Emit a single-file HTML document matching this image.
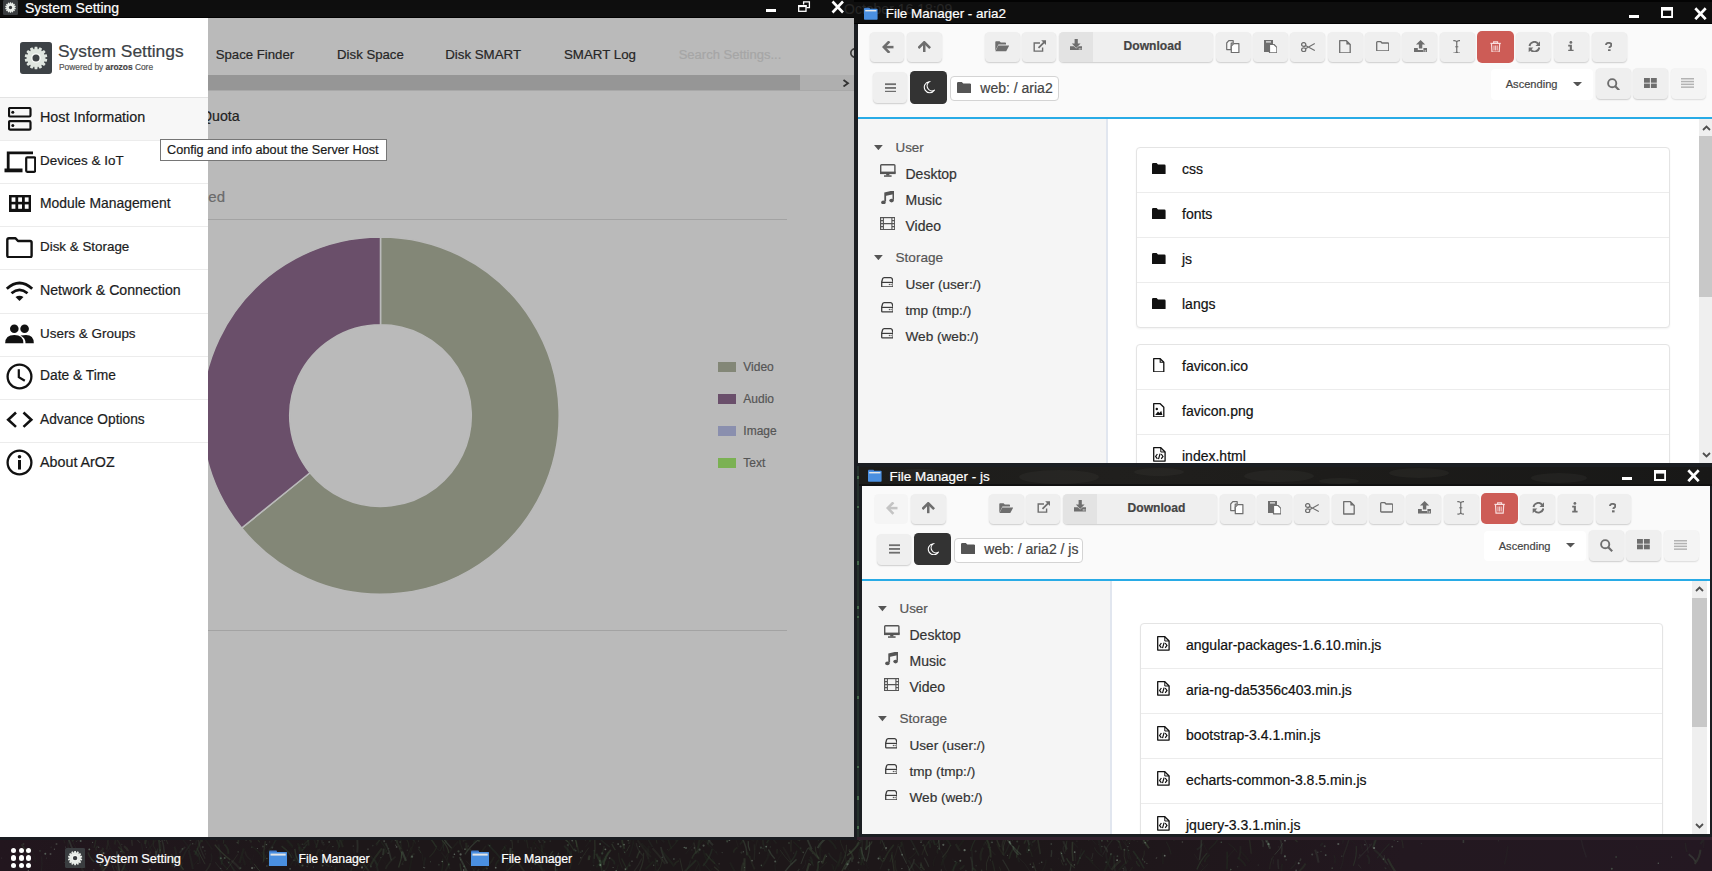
<!DOCTYPE html>
<html><head><meta charset="utf-8">
<style>
*{box-sizing:border-box;margin:0;padding:0}
html,body{width:1712px;height:871px;overflow:hidden;background:#1f161c;font-family:"Liberation Sans",sans-serif}
.a{position:absolute}
.t{position:absolute;white-space:nowrap;line-height:1;-webkit-text-stroke:0.2px currentColor}
.fm{position:absolute;overflow:hidden;background:#fafafa}
.fm .a,.fm .t{position:absolute}
</style></head><body>

<div class="a" style="left:0.00px;top:0.00px;width:1712.00px;height:871.00px;background:#0d0d0d"></div>
<div class="a" style="left:0.00px;top:0.00px;width:854.00px;height:18.00px;background:#0e0e0e"></div>
<div class="a" style="left:0.00px;top:17.00px;width:854.00px;height:1.00px;background:#020202"></div>
<svg class="a" style="left:3.00px;top:0.00px;" width="15.00" height="15.00" viewBox="0 0 15.00 15.00"><rect width="15" height="15" rx="1.35" fill="#3a3d40"/><path d="M6.70,3.38 L6.90,2.21 L8.10,2.21 L8.30,3.38 L8.57,3.44 L9.26,2.47 L10.33,2.99 L10.01,4.13 L10.23,4.31 L11.27,3.73 L12.01,4.67 L11.22,5.55 L11.34,5.81 L12.53,5.74 L12.79,6.90 L11.70,7.36 L11.70,7.64 L12.79,8.10 L12.53,9.26 L11.34,9.19 L11.22,9.45 L12.01,10.33 L11.27,11.27 L10.23,10.69 L10.01,10.87 L10.33,12.01 L9.26,12.53 L8.57,11.56 L8.30,11.62 L8.10,12.79 L6.90,12.79 L6.70,11.62 L6.43,11.56 L5.74,12.53 L4.67,12.01 L4.99,10.87 L4.77,10.69 L3.73,11.27 L2.99,10.33 L3.78,9.45 L3.66,9.19 L2.47,9.26 L2.21,8.10 L3.30,7.64 L3.30,7.36 L2.21,6.90 L2.47,5.74 L3.66,5.81 L3.78,5.55 L2.99,4.67 L3.73,3.73 L4.77,4.31 L4.99,4.13 L4.67,2.99 L5.74,2.47 L6.43,3.44Z" fill="#e8ece8"/><circle cx="7.5" cy="7.5" r="2.25" fill="#f8faf8"/><circle cx="7.5" cy="7.5" r="1.65" fill="#3a3d40"/></svg>
<div class="t" style="left:25.00px;top:0.75px;font-size:14px;color:#fff;font-weight:normal;">System Setting</div>
<div class="a" style="left:766.00px;top:8.80px;width:10.00px;height:3.40px;background:#fff"></div>
<svg class="a" style="left:797.00px;top:0.00px;" width="14.00" height="13.00" viewBox="0 0 14.00 13.00"><path d="M6.6,4.6 V1.9 H12.4 V7.7 H9.4" fill="none" stroke="#fff" stroke-width="1.3"/><rect x="1.7" y="5.7" width="7.3" height="5.6" fill="none" stroke="#fff" stroke-width="1.3"/><rect x="1.1" y="5.1" width="8.5" height="2" fill="#fff"/></svg>
<svg class="a" style="left:830.50px;top:0.00px;" width="13.50" height="14.00" viewBox="0 0 13.50 14.00"><path d="M1.5,1.5 L12,12.5 M12,1.5 L1.5,12.5" stroke="#fff" stroke-width="2.6"/></svg>
<div class="a" style="left:0;top:18px;width:854px;height:819px;background:#bababa;overflow:hidden">
<div class="t" style="left:215.70px;top:29.73px;font-size:13.2px;color:#262626;font-weight:normal;">Space Finder</div>
<div class="t" style="left:337.10px;top:29.73px;font-size:13.2px;color:#262626;font-weight:normal;">Disk Space</div>
<div class="t" style="left:445.20px;top:29.64px;font-size:13.3px;color:#262626;font-weight:normal;">Disk SMART</div>
<div class="t" style="left:564.00px;top:29.64px;font-size:13.3px;color:#262626;font-weight:normal;">SMART Log</div>
<div class="t" style="left:678.70px;top:29.60px;font-size:13px;color:#a6a6a6;font-weight:normal;">Search Settings...</div>
<svg class="a" style="left:849.00px;top:28.50px;" width="10.00" height="14.00" viewBox="0 0 10.00 14.00"><circle cx="6" cy="6" r="4.2" fill="none" stroke="#3a3a3a" stroke-width="1.6"/></svg>
<div class="a" style="left:208.00px;top:57.00px;width:646.00px;height:15.20px;background:#afafaf"></div>
<div class="a" style="left:208.00px;top:57.00px;width:592.00px;height:15.20px;background:#969696"></div>
<svg class="a" style="left:842.00px;top:60.50px;" width="8.00" height="8.50" viewBox="0 0 8.00 8.50"><path d="M1.5,1 L6,4.2 L1.5,7.5" fill="none" stroke="#333" stroke-width="1.8"/></svg>
<div class="a" style="left:208.00px;top:72.20px;width:646.00px;height:1.00px;background:#a9a9a9"></div>
<div class="t" style="left:201.00px;top:90.78px;font-size:14.2px;color:#222;font-weight:normal;">Quota</div>
<div class="t" style="left:190.00px;top:170.90px;font-size:15px;color:#6a6a6a;font-weight:normal;">Used</div>
<div class="a" style="left:208.00px;top:201.00px;width:579.00px;height:1.00px;background:#a3a3a3"></div>
<div class="a" style="left:208.00px;top:612.00px;width:579.00px;height:1.00px;background:#a3a3a3"></div>
<svg class="a" style="left:0;top:0" width="854" height="819" viewBox="0 0 854 819"><path d="M380.50,218.90 A178.7,178.7 0 1 1 241.62,510.06 L309.94,454.74 A90.8,90.8 0 1 0 380.50,306.80 Z" fill="#838777" stroke="#bababa" stroke-width="1.5"/><path d="M241.62,510.06 A178.7,178.7 0 0 1 380.50,218.90 L380.50,306.80 A90.8,90.8 0 0 0 309.94,454.74 Z" fill="#6a4f6a" stroke="#bababa" stroke-width="1.5"/></svg>
<div class="a" style="left:718.00px;top:344.40px;width:18.20px;height:10.00px;background:#838777"></div>
<div class="t" style="left:743.30px;top:342.84px;font-size:12px;color:#555;font-weight:normal;">Video</div>
<div class="a" style="left:718.00px;top:376.40px;width:18.20px;height:10.00px;background:#6a4f6b"></div>
<div class="t" style="left:743.30px;top:374.84px;font-size:12px;color:#555;font-weight:normal;">Audio</div>
<div class="a" style="left:718.00px;top:408.40px;width:18.20px;height:10.00px;background:#8a8fae"></div>
<div class="t" style="left:743.30px;top:406.84px;font-size:12px;color:#555;font-weight:normal;">Image</div>
<div class="a" style="left:718.00px;top:440.40px;width:18.20px;height:10.00px;background:#7bb153"></div>
<div class="t" style="left:743.30px;top:438.84px;font-size:12px;color:#555;font-weight:normal;">Text</div>
<div class="a" style="left:0.00px;top:0.00px;width:208.00px;height:819.00px;background:#fff"></div>
<svg class="a" style="left:20.00px;top:24.00px;" width="32.00" height="32.00" viewBox="0 0 32.00 32.00"><rect width="32" height="32" rx="2.88" fill="#3d4246"/><path d="M14.30,7.20 L14.73,4.71 L17.27,4.71 L17.70,7.20 L18.29,7.34 L19.75,5.28 L22.04,6.38 L21.35,8.81 L21.82,9.19 L24.03,7.97 L25.62,9.96 L23.94,11.84 L24.20,12.39 L26.72,12.25 L27.29,14.73 L24.95,15.70 L24.95,16.30 L27.29,17.27 L26.72,19.75 L24.20,19.61 L23.94,20.16 L25.62,22.04 L24.03,24.03 L21.82,22.81 L21.35,23.19 L22.04,25.62 L19.75,26.72 L18.29,24.66 L17.70,24.80 L17.27,27.29 L14.73,27.29 L14.30,24.80 L13.71,24.66 L12.25,26.72 L9.96,25.62 L10.65,23.19 L10.18,22.81 L7.97,24.03 L6.38,22.04 L8.06,20.16 L7.80,19.61 L5.28,19.75 L4.71,17.27 L7.05,16.30 L7.05,15.70 L4.71,14.73 L5.28,12.25 L7.80,12.39 L8.06,11.84 L6.38,9.96 L7.97,7.97 L10.18,9.19 L10.65,8.81 L9.96,6.38 L12.25,5.28 L13.71,7.34Z" fill="#dfe6e0"/><circle cx="16.0" cy="16.0" r="4.80" fill="#f8faf8"/><circle cx="16.0" cy="16.0" r="3.52" fill="#3d4246"/></svg>
<div class="t" style="left:58.00px;top:25.27px;font-size:17.4px;color:#3d4246;font-weight:normal;">System Settings</div>
<div class="t" style="left:59.00px;top:44.89px;font-size:8.4px;color:#555;font-weight:normal;">Powered by <b style="color:#444">arozos</b> Core</div>
<div class="a" style="left:0.00px;top:79.00px;width:208.00px;height:1.00px;background:#e3e3e3"></div>
<div class="a" style="left:0.00px;top:80.00px;width:208.00px;height:42.00px;background:#f7f7f7"></div>
<div class="t" style="left:40.00px;top:92.15px;font-size:14.35px;color:#1b1c1d;font-weight:normal;">Host Information</div>
<div class="a" style="left:0.00px;top:122.12px;width:208.00px;height:1.00px;background:#ececec"></div>
<div class="t" style="left:40.00px;top:136.03px;font-size:13.45px;color:#1b1c1d;font-weight:normal;">Devices &amp; IoT</div>
<div class="a" style="left:0.00px;top:165.24px;width:208.00px;height:1.00px;background:#ececec"></div>
<div class="t" style="left:40.00px;top:178.77px;font-size:13.9px;color:#1b1c1d;font-weight:normal;">Module Management</div>
<div class="a" style="left:0.00px;top:208.36px;width:208.00px;height:1.00px;background:#ececec"></div>
<div class="t" style="left:40.00px;top:222.32px;font-size:13.4px;color:#1b1c1d;font-weight:normal;">Disk &amp; Storage</div>
<div class="a" style="left:0.00px;top:251.48px;width:208.00px;height:1.00px;background:#ececec"></div>
<div class="t" style="left:40.00px;top:264.80px;font-size:14.15px;color:#1b1c1d;font-weight:normal;">Network &amp; Connection</div>
<div class="a" style="left:0.00px;top:294.60px;width:208.00px;height:1.00px;background:#ececec"></div>
<div class="t" style="left:40.00px;top:308.51px;font-size:13.45px;color:#1b1c1d;font-weight:normal;">Users &amp; Groups</div>
<div class="a" style="left:0.00px;top:337.72px;width:208.00px;height:1.00px;background:#ececec"></div>
<div class="t" style="left:40.00px;top:351.34px;font-size:13.8px;color:#1b1c1d;font-weight:normal;">Date &amp; Time</div>
<div class="a" style="left:0.00px;top:380.84px;width:208.00px;height:1.00px;background:#ececec"></div>
<div class="t" style="left:40.00px;top:394.50px;font-size:13.75px;color:#1b1c1d;font-weight:normal;">Advance Options</div>
<div class="a" style="left:0.00px;top:423.96px;width:208.00px;height:1.00px;background:#ececec"></div>
<div class="t" style="left:40.00px;top:437.16px;font-size:14.3px;color:#1b1c1d;font-weight:normal;">About ArOZ</div>
<svg class="a" style="left:8.00px;top:88.50px;" width="23.50" height="24.00" viewBox="0 0 23.50 24.00"><rect x="1" y="1" width="21.5" height="8.5" rx="1.2" fill="none" stroke="#111" stroke-width="2.2"/><rect x="1" y="14.2" width="21.5" height="8.5" rx="1.2" fill="none" stroke="#111" stroke-width="2.2"/><circle cx="4.8" cy="5.2" r="1.5" fill="#111"/><circle cx="4.8" cy="18.4" r="1.5" fill="#111"/></svg>
<svg class="a" style="left:3.50px;top:132.50px;" width="32.00" height="22.00" viewBox="0 0 32.00 22.00"><path d="M4.2,20 V1.8 H29" fill="none" stroke="#111" stroke-width="2.8"/><rect x="0.5" y="17.5" width="18" height="3.8" fill="#111"/><rect x="22.2" y="6.3" width="9" height="14.5" rx="1" fill="none" stroke="#111" stroke-width="2.2"/></svg>
<svg class="a" style="left:9.00px;top:176.80px;" width="22.20" height="17.20" viewBox="0 0 22.20 17.20"><rect x="0" y="0" width="22.2" height="17.2" fill="#111"/><rect x="2.6" y="2.4" width="3.8" height="4.4" fill="#fff"/><rect x="9.2" y="2.4" width="3.8" height="4.4" fill="#fff"/><rect x="15.8" y="2.4" width="3.8" height="4.4" fill="#fff"/><rect x="2.6" y="9.4" width="3.8" height="4.4" fill="#fff"/><rect x="9.2" y="9.4" width="3.8" height="4.4" fill="#fff"/><rect x="15.8" y="9.4" width="3.8" height="4.4" fill="#fff"/></svg>
<svg class="a" style="left:6.00px;top:218.50px;" width="27.00" height="21.50" viewBox="0 0 27.00 21.50"><path d="M1.3,3 Q1.3,1.2 3,1.2 H9.5 L12,4 H24 Q25.6,4 25.6,5.6 V18.5 Q25.6,20.2 24,20.2 H3 Q1.3,20.2 1.3,18.5 Z" fill="none" stroke="#111" stroke-width="2.4" stroke-linejoin="round"/></svg>
<svg class="a" style="left:5.00px;top:261.50px;" width="29.00" height="22.00" viewBox="0 0 29.00 22.00"><path d="M1.8,8.8 Q14.5,-2.8 27.2,8.8" fill="none" stroke="#111" stroke-width="2.8"/><path d="M6.5,13.2 Q14.5,6.5 22.5,13.2" fill="none" stroke="#111" stroke-width="2.8"/><path d="M10.5,17 Q14.5,14.6 18.5,17 L14.5,21 Z" fill="#111"/></svg>
<svg class="a" style="left:5.00px;top:305.50px;" width="29.00" height="20.00" viewBox="0 0 29.00 20.00"><circle cx="9.3" cy="4.8" r="4.3" fill="#111"/><circle cx="19.6" cy="4.8" r="4.3" fill="#111"/><path d="M0.2,19.2 Q0.2,11 9.3,11 Q18.4,11 18.4,19.2 Z" fill="#111"/><path d="M15.5,11.6 Q19,11 21,11 Q28.8,11 28.8,19.2 H20.5 Q20.5,14 15.5,11.6 Z" fill="#111"/></svg>
<svg class="a" style="left:6.00px;top:344.80px;" width="27.00" height="27.00" viewBox="0 0 27.00 27.00"><circle cx="13.5" cy="13.5" r="11.9" fill="none" stroke="#111" stroke-width="2.3"/><path d="M12.8,6.2 V14.2 L18.8,17.8" fill="none" stroke="#111" stroke-width="2.2"/></svg>
<svg class="a" style="left:6.00px;top:392.50px;" width="27.50" height="17.50" viewBox="0 0 27.50 17.50"><path d="M10,1.5 L2.2,8.7 L10,15.9" fill="none" stroke="#111" stroke-width="2.6"/><path d="M17.5,1.5 L25.3,8.7 L17.5,15.9" fill="none" stroke="#111" stroke-width="2.6"/></svg>
<svg class="a" style="left:6.00px;top:430.80px;" width="27.00" height="27.00" viewBox="0 0 27.00 27.00"><circle cx="13.5" cy="13.5" r="11.9" fill="none" stroke="#111" stroke-width="2.3"/><circle cx="13.5" cy="7.8" r="1.8" fill="#111"/><rect x="12" y="11" width="3" height="9.5" fill="#111"/></svg>
<div class="a" style="left:160.30px;top:121.10px;width:226.70px;height:21.50px;background:#fff;border:1px solid #767676"></div>
<div class="t" style="left:167.00px;top:125.59px;font-size:12.65px;color:#1a1a1a;font-weight:normal;">Config and info about the Server Host</div>
</div>
<div class="a" style="left:854.00px;top:0.00px;width:858.00px;height:463.00px;background:#1b1e22"></div>
<div class="a" style="left:854.00px;top:0.00px;width:858.00px;height:24.00px;background:#0e0e0e"></div>
<div class="a" style="left:854.00px;top:0.00px;width:858.00px;height:2.00px;background:#030303"></div>
<div class="a" style="left:854.00px;top:23.00px;width:858.00px;height:1.00px;background:#020202"></div>
<div class="t" style="left:844.00px;top:2.15px;font-size:14px;color:#262626;font-weight:normal;">October 16 18:09</div>
<svg class="a" style="left:864.00px;top:7.00px;" width="13.60" height="12.80" viewBox="0 0 13.60 12.80"><rect x="0" y="0.8" width="6" height="3" rx="0.8" fill="#3f78c8"/><rect x="0" y="1.8" width="13.6" height="11" rx="0.8" fill="#4a8fe0"/><rect x="1.2" y="3" width="11.2" height="1.4" fill="#e6e6e6"/></svg>
<div class="t" style="left:885.70px;top:7.31px;font-size:13.45px;color:#fff;font-weight:normal;">File Manager - aria2</div>
<div class="a" style="left:1629.00px;top:14.60px;width:10.20px;height:3.60px;background:#fff"></div>
<svg class="a" style="left:1661.00px;top:7.20px;" width="12.20" height="11.00" viewBox="0 0 12.20 11.00"><rect x="1" y="1.5" width="10.2" height="8.5" fill="none" stroke="#fff" stroke-width="2"/><rect x="0" y="0" width="12.2" height="3.6" fill="#fff"/></svg>
<svg class="a" style="left:1693.50px;top:6.50px;" width="13.00" height="13.50" viewBox="0 0 13.00 13.50"><path d="M1.3,1.3 L11.7,12.2 M11.7,1.3 L1.3,12.2" stroke="#fff" stroke-width="2.7"/></svg>
<div class="fm" style="left:858px;top:24px;width:859px;height:439px">
<div class="a" style="left:12.00px;top:8.00px;width:34.30px;height:30.00px;background:#efefef;border-radius:4.5px;box-shadow:0 1px 1.5px rgba(0,0,0,.18);"></div>
<div class="a" style="left:48.60px;top:8.00px;width:35.50px;height:30.00px;background:#efefef;border-radius:4.5px;box-shadow:0 1px 1.5px rgba(0,0,0,.18);"></div>
<div class="a" style="left:127.00px;top:8.00px;width:34.50px;height:30.00px;background:#efefef;border-radius:4.5px;box-shadow:0 1px 1.5px rgba(0,0,0,.18);"></div>
<div class="a" style="left:163.80px;top:8.00px;width:34.30px;height:30.00px;background:#efefef;border-radius:4.5px;box-shadow:0 1px 1.5px rgba(0,0,0,.18);"></div>
<div class="a" style="left:201.00px;top:8.00px;width:154.30px;height:30.00px;background:#efefef;border-radius:4.5px;box-shadow:0 1px 1.5px rgba(0,0,0,.18);"></div>
<div class="a" style="left:201.00px;top:8.00px;width:33.60px;height:30.00px;background:#e3e3e3;border-radius:4.5px 0 0 4.5px"></div>
<div class="a" style="left:357.80px;top:8.00px;width:35.00px;height:30.00px;background:#efefef;border-radius:4.5px;box-shadow:0 1px 1.5px rgba(0,0,0,.18);"></div>
<div class="a" style="left:395.10px;top:8.00px;width:35.00px;height:30.00px;background:#efefef;border-radius:4.5px;box-shadow:0 1px 1.5px rgba(0,0,0,.18);"></div>
<div class="a" style="left:432.40px;top:8.00px;width:35.00px;height:30.00px;background:#efefef;border-radius:4.5px;box-shadow:0 1px 1.5px rgba(0,0,0,.18);"></div>
<div class="a" style="left:469.70px;top:8.00px;width:35.00px;height:30.00px;background:#efefef;border-radius:4.5px;box-shadow:0 1px 1.5px rgba(0,0,0,.18);"></div>
<div class="a" style="left:507.00px;top:8.00px;width:35.00px;height:30.00px;background:#efefef;border-radius:4.5px;box-shadow:0 1px 1.5px rgba(0,0,0,.18);"></div>
<div class="a" style="left:544.30px;top:8.00px;width:35.00px;height:30.00px;background:#efefef;border-radius:4.5px;box-shadow:0 1px 1.5px rgba(0,0,0,.18);"></div>
<div class="a" style="left:581.60px;top:8.00px;width:35.00px;height:30.00px;background:#efefef;border-radius:4.5px;box-shadow:0 1px 1.5px rgba(0,0,0,.18);"></div>
<div class="a" style="left:619.30px;top:7.00px;width:36.50px;height:31.90px;background:#cd5c56;border-radius:5px"></div>
<div class="a" style="left:657.50px;top:8.00px;width:35.30px;height:30.00px;background:#efefef;border-radius:4.5px;box-shadow:0 1px 1.5px rgba(0,0,0,.18);"></div>
<div class="a" style="left:695.50px;top:8.00px;width:35.30px;height:30.00px;background:#efefef;border-radius:4.5px;box-shadow:0 1px 1.5px rgba(0,0,0,.18);"></div>
<div class="a" style="left:733.50px;top:8.00px;width:35.30px;height:30.00px;background:#efefef;border-radius:4.5px;box-shadow:0 1px 1.5px rgba(0,0,0,.18);"></div>
<div class="a" style="left:15.00px;top:48.20px;width:34.30px;height:31.00px;background:#efefef;border-radius:4.5px;box-shadow:0 1px 1.5px rgba(0,0,0,.18)"></div>
<div class="a" style="left:52.00px;top:47.00px;width:37.00px;height:32.70px;background:#333;border-radius:4.5px"></div>
<div class="a" style="left:92.20px;top:52.00px;width:108.40px;height:25.40px;background:#fff;border:1px solid #d4d4d4;border-radius:4px"></div>
<div class="t" style="left:122.30px;top:56.95px;font-size:14px;color:#444;font-weight:normal;">web: / aria2</div>
<div class="t" style="left:265.60px;top:16.46px;font-size:12.1px;color:#444;font-weight:bold;">Download</div>
<svg class="a" style="left:23.50px;top:16.50px;" width="12.00" height="12.50" viewBox="0 0 12.00 12.50"><path d="M6.5,1.3 L1.8,6.1 L6.5,10.9" fill="none" stroke="#6e6e6e" stroke-width="2.6" stroke-linecap="square"/><path d="M3,6.1 H11.5" stroke="#6e6e6e" stroke-width="2.5"/></svg>
<svg class="a" style="left:60.20px;top:16.50px;" width="12.50" height="11.50" viewBox="0 0 12.50 11.50"><path d="M1.3,6.2 L6.25,1.3 L11.2,6.2" fill="none" stroke="#6e6e6e" stroke-width="2.6" stroke-linecap="square"/><path d="M6.25,2.5 V11.2" stroke="#6e6e6e" stroke-width="2.5"/></svg>
<svg class="a" style="left:136.50px;top:17.00px;" width="14.50" height="10.50" viewBox="0 0 14.50 10.50"><path d="M0.3,9.8 V1 Q0.3,0.2 1.1,0.2 H4.6 L5.8,1.5 H10.2 Q11,1.5 11,2.3 V3.6 H3.4 Z" fill="#6e6e6e"/><path d="M3.2,4.4 H14.3 L11.2,10.2 H0.4 Z" fill="#6e6e6e"/></svg>
<svg class="a" style="left:174.50px;top:15.50px;" width="13.80" height="12.00" viewBox="0 0 13.80 12.00"><path d="M7,3 H1.2 V11.1 H9.6 V7.5" fill="none" stroke="#6e6e6e" stroke-width="1.4"/><path d="M5.5,7.8 L11.8,1.6" stroke="#6e6e6e" stroke-width="1.8"/><path d="M8.2,0.2 H13.6 V5.6 Z" fill="#6e6e6e"/></svg>
<svg class="a" style="left:211.80px;top:14.50px;" width="12.40" height="11.80" viewBox="0 0 12.40 11.80"><path d="M4.6,0 H7.8 V4.6 H10.6 L6.2,9 L1.8,4.6 H4.6 Z" fill="#6e6e6e"/><path d="M0,7.2 H3.8 L6.2,9.6 L8.6,7.2 H12.4 V11.6 H0 Z" fill="#6e6e6e"/><circle cx="9.3" cy="9.9" r="0.6" fill="#e3e3e3"/><circle cx="10.9" cy="9.9" r="0.6" fill="#e3e3e3"/></svg>
<svg class="a" style="left:368.30px;top:15.80px;" width="13.60" height="13.40" viewBox="0 0 13.60 13.40"><path d="M2.8,0.7 H7.2 V3.2 H5.2 V9.6 H0.7 V3 Z" fill="#f7f7f7" stroke="#6e6e6e" stroke-width="1.2" stroke-linejoin="round"/><path d="M7.8,3.6 H12.9 V12.7 H5.3 V6.2 Z" fill="#fff" stroke="#6e6e6e" stroke-width="1.2" stroke-linejoin="round"/></svg>
<svg class="a" style="left:405.70px;top:15.80px;" width="13.60" height="13.40" viewBox="0 0 13.60 13.40"><rect x="0" y="0" width="9" height="12" fill="#6e6e6e"/><rect x="2" y="1.3" width="5" height="1.2" fill="#eee"/><path d="M5.5,4.5 H10 L12.9,7.4 V12.8 H5.5 Z" fill="#fff" stroke="#6e6e6e" stroke-width="1.2" stroke-linejoin="round"/></svg>
<svg class="a" style="left:443.00px;top:17.80px;" width="14.20" height="10.20" viewBox="0 0 14.20 10.20"><ellipse cx="2.7" cy="2.5" rx="2.1" ry="1.9" fill="none" stroke="#6e6e6e" stroke-width="1.3"/><ellipse cx="2.7" cy="7.7" rx="2.1" ry="1.9" fill="none" stroke="#6e6e6e" stroke-width="1.3"/><path d="M4.5,3.4 L13.8,8.6 M4.5,6.8 L13.8,1.6" stroke="#6e6e6e" stroke-width="1.1"/></svg>
<svg class="a" style="left:481.40px;top:15.60px;" width="12.00" height="13.70" viewBox="0 0 12.00 13.70"><path d="M0.7,0.7 H7.4 L11.2,4.5 V13 H0.7 Z" fill="none" stroke="#6e6e6e" stroke-width="1.3" stroke-linejoin="round"/><path d="M7.4,0.7 V4.5 H11.2" fill="#6e6e6e"/></svg>
<svg class="a" style="left:517.70px;top:16.50px;" width="13.50" height="10.70" viewBox="0 0 13.50 10.70"><path d="M0.7,1.5 Q0.7,0.7 1.5,0.7 H4.8 L6,2 H12 Q12.8,2 12.8,2.8 V9.2 Q12.8,10 12,10 H1.5 Q0.7,10 0.7,9.2 Z" fill="none" stroke="#6e6e6e" stroke-width="1.3"/></svg>
<svg class="a" style="left:555.50px;top:15.60px;" width="13.20" height="12.80" viewBox="0 0 13.20 12.80"><path d="M6.6,0 L11.2,4.6 H8.3 V8.6 H4.9 V4.6 H2 Z" fill="#6e6e6e"/><path d="M0,8 H3.8 V10 H9.4 V8 H13.2 V12.6 H0 Z" fill="#6e6e6e"/><circle cx="9.9" cy="10.9" r="0.6" fill="#eee"/><circle cx="11.6" cy="10.9" r="0.6" fill="#eee"/></svg>
<svg class="a" style="left:594.80px;top:15.60px;" width="7.50" height="13.70" viewBox="0 0 7.50 13.70"><path d="M0.3,0.7 Q3.75,0.3 3.75,2.5 V11.2 Q3.75,13.4 0.3,13 M7.2,0.7 Q3.75,0.3 3.75,2.5 M3.75,11.2 Q3.75,13.4 7.2,13" fill="none" stroke="#6e6e6e" stroke-width="1.2"/><path d="M2.2,6.8 H5.3" stroke="#6e6e6e" stroke-width="1"/></svg>
<svg class="a" style="left:631.80px;top:16.50px;" width="11.20" height="11.80" viewBox="0 0 11.20 11.80"><path d="M0.4,2.4 H10.8" stroke="#f8dede" stroke-width="1.2"/><path d="M3.6,2.4 V0.9 H7.6 V2.4" fill="none" stroke="#f8dede" stroke-width="1.1"/><path d="M1.5,2.6 L2,11.1 H9.2 L9.7,2.6" fill="none" stroke="#f8dede" stroke-width="1.2"/><path d="M4,4.5 V9.5 M5.6,4.5 V9.5 M7.2,4.5 V9.5" stroke="#f8dede" stroke-width="0.9"/></svg>
<svg class="a" style="left:669.60px;top:16.50px;" width="12.80" height="11.50" viewBox="0 0 12.80 11.50"><path d="M1.5,5 A4.9,4.9 0 0 1 10.2,2.8" fill="none" stroke="#6e6e6e" stroke-width="1.9"/><path d="M12.1,0.2 V5 H7.5 Z" fill="#6e6e6e"/><path d="M11.3,6.5 A4.9,4.9 0 0 1 2.6,8.7" fill="none" stroke="#6e6e6e" stroke-width="1.9"/><path d="M0.7,11.3 V6.5 H5.3 Z" fill="#6e6e6e"/></svg>
<svg class="a" style="left:710.30px;top:16.50px;" width="5.80" height="10.60" viewBox="0 0 5.80 10.60"><circle cx="2.9" cy="1.4" r="1.4" fill="#6e6e6e"/><path d="M0.2,3.8 H3.9 V8.8 H5.6 V10.5 H0.2 V8.8 H1.8 V5.5 H0.2 Z" fill="#6e6e6e"/></svg>
<svg class="a" style="left:747.00px;top:17.80px;" width="7.40" height="9.40" viewBox="0 0 7.40 9.40"><path d="M1,3 Q1,0.9 3.7,0.9 Q6.4,0.9 6.4,2.9 Q6.4,4.1 5,4.8 Q4.4,5.2 4.4,6.1" fill="none" stroke="#6e6e6e" stroke-width="1.9"/><rect x="3" y="7.3" width="2.6" height="2.1" fill="#6e6e6e"/></svg>
<svg class="a" style="left:26.60px;top:58.50px;" width="11.80" height="9.60" viewBox="0 0 11.80 9.60"><rect x="0" y="0.30" width="11.8" height="1.8" fill="#6e6e6e"/><rect x="0" y="4.05" width="11.8" height="1.8" fill="#6e6e6e"/><rect x="0" y="7.80" width="11.8" height="1.8" fill="#6e6e6e"/></svg>
<svg class="a" style="left:64.50px;top:57.00px;" width="12.00" height="12.50" viewBox="0 0 12.00 12.50"><path d="M6.2,0.8 A5.5,5.5 0 1 0 11.4,9.3 A5,5 0 0 1 6.2,0.8 Z" fill="none" stroke="#fff" stroke-width="1.1"/></svg>
<svg class="a" style="left:99.00px;top:57.80px;" width="14.20" height="11.20" viewBox="0 0 14.20 11.20"><path d="M0,1.3 Q0,0 1.3,0 H4.8 L6.3,1.6 H12.9 Q14.2,1.6 14.2,2.9 V9.9 Q14.2,11.2 12.9,11.2 H1.3 Q0,11.2 0,9.9 Z" fill="#555"/></svg>
<div class="a" style="left:633.00px;top:45.20px;width:101.50px;height:30.40px;background:#fff;border-radius:4px"></div>
<div class="t" style="left:647.70px;top:55.10px;font-size:11.1px;color:#444;font-weight:normal;">Ascending</div>
<svg class="a" style="left:715.00px;top:57.70px;" width="9.00" height="4.60" viewBox="0 0 9.00 4.60"><path d="M0,0 H9 L4.5,4.6 Z" fill="#555"/></svg>
<div class="a" style="left:737.90px;top:44.40px;width:34.80px;height:30.80px;background:#efefef;border-radius:4.5px;box-shadow:0 1px 1.5px rgba(0,0,0,.18);"></div>
<div class="a" style="left:774.80px;top:44.40px;width:34.80px;height:30.80px;background:#efefef;border-radius:4.5px;box-shadow:0 1px 1.5px rgba(0,0,0,.18);"></div>
<div class="a" style="left:812.80px;top:44.40px;width:34.80px;height:30.80px;background:#f4f4f4;border-radius:4.5px;box-shadow:0 1px 1.5px rgba(0,0,0,.12);"></div>
<svg class="a" style="left:749.00px;top:53.60px;" width="13.00" height="12.80" viewBox="0 0 13.00 12.80"><circle cx="5.2" cy="5.2" r="4.1" fill="none" stroke="#6e6e6e" stroke-width="1.9"/><path d="M8.2,8.2 L12.2,12.2" stroke="#6e6e6e" stroke-width="2.2"/></svg>
<svg class="a" style="left:786.20px;top:53.80px;" width="12.80" height="10.30" viewBox="0 0 12.80 10.30"><rect x="0" y="0" width="5.9" height="4.7" fill="#6e6e6e"/><rect x="6.9" y="0" width="5.9" height="4.7" fill="#6e6e6e"/><rect x="0" y="5.6" width="5.9" height="4.7" fill="#6e6e6e"/><rect x="6.9" y="5.6" width="5.9" height="4.7" fill="#6e6e6e"/></svg>
<svg class="a" style="left:823.00px;top:54.00px;" width="13.20" height="10.00" viewBox="0 0 13.20 10.00"><rect x="0" y="0.00" width="13.2" height="1.5" fill="#b3b3b3"/><rect x="0" y="2.80" width="13.2" height="1.5" fill="#b3b3b3"/><rect x="0" y="5.60" width="13.2" height="1.5" fill="#b3b3b3"/><rect x="0" y="8.40" width="13.2" height="1.5" fill="#b3b3b3"/></svg>
<div class="a" style="left:0.00px;top:93.00px;width:859.00px;height:2.10px;background:#28abe6"></div>
<div class="a" style="left:0.00px;top:95.10px;width:248.00px;height:344.00px;background:#f5f5f5"></div>
<div class="a" style="left:248.00px;top:95.10px;width:2.00px;height:344.00px;background:#e1e6ef"></div>
<svg class="a" style="left:16.30px;top:120.90px;" width="8.80" height="5.20" viewBox="0 0 8.80 5.20"><path d="M0,0 H8.8 L4.4,5.2 Z" fill="#555"/></svg>
<svg class="a" style="left:16.30px;top:230.90px;" width="8.80" height="5.20" viewBox="0 0 8.80 5.20"><path d="M0,0 H8.8 L4.4,5.2 Z" fill="#555"/></svg>
<div class="t" style="left:37.50px;top:116.56px;font-size:13.4px;color:#555;font-weight:normal;">User</div>
<div class="t" style="left:37.50px;top:226.69px;font-size:13.6px;color:#555;font-weight:normal;">Storage</div>
<div class="t" style="left:47.50px;top:142.95px;font-size:14px;color:#333;font-weight:normal;">Desktop</div>
<div class="t" style="left:47.50px;top:168.95px;font-size:14px;color:#333;font-weight:normal;">Music</div>
<div class="t" style="left:47.50px;top:194.95px;font-size:14px;color:#333;font-weight:normal;">Video</div>
<div class="t" style="left:47.50px;top:253.99px;font-size:13.6px;color:#333;font-weight:normal;">User (user:/)</div>
<div class="t" style="left:47.50px;top:279.79px;font-size:13.6px;color:#333;font-weight:normal;">tmp (tmp:/)</div>
<div class="t" style="left:47.50px;top:305.59px;font-size:13.6px;color:#333;font-weight:normal;">Web (web:/)</div>
<svg class="a" style="left:22.00px;top:139.80px;" width="15.60" height="12.80" viewBox="0 0 15.60 12.80"><rect x="0.7" y="0.7" width="14.2" height="8.6" rx="0.8" fill="none" stroke="#555" stroke-width="1.4"/><rect x="0" y="7.6" width="15.6" height="2.5" fill="#555"/><rect x="6.2" y="10" width="3.2" height="1.5" fill="#555"/><rect x="4" y="11.3" width="7.6" height="1.5" fill="#555"/></svg>
<svg class="a" style="left:22.60px;top:166.60px;" width="13.20" height="13.80" viewBox="0 0 13.20 13.80"><path d="M4.2,10.5 V2.2 L12.4,0.3 V8.8" fill="none" stroke="#555" stroke-width="1.8"/><ellipse cx="2.4" cy="11.4" rx="2.3" ry="1.8" fill="#555"/><ellipse cx="10.6" cy="9.6" rx="2.3" ry="1.8" fill="#555"/><path d="M4.2,2.2 L12.4,0.3 V3.2 L4.2,5 Z" fill="#555"/></svg>
<svg class="a" style="left:22.20px;top:192.60px;" width="15.30" height="13.20" viewBox="0 0 15.30 13.20"><rect x="0.6" y="0.6" width="14.1" height="12" fill="none" stroke="#555" stroke-width="1.2"/><path d="M3.4,0.6 V12.6 M11.9,0.6 V12.6 M0.6,3.6 H3.4 M0.6,6.6 H3.4 M0.6,9.6 H3.4 M11.9,3.6 H14.7 M11.9,6.6 H14.7 M11.9,9.6 H14.7 M3.4,6.6 H11.9" stroke="#555" stroke-width="1.1"/></svg>
<svg class="a" style="left:22.50px;top:252.50px;" width="12.80" height="10.60" viewBox="0 0 12.80 10.60"><path d="M0.7,5 L1.6,1.8 Q2,0.7 3.2,0.7 H9.6 Q10.8,0.7 11.2,1.8 L12.1,5 V9.2 Q12.1,9.9 11.4,9.9 H1.4 Q0.7,9.9 0.7,9.2 Z" fill="none" stroke="#3c3c3c" stroke-width="1.3"/><path d="M0.7,5.4 H12.1" stroke="#3c3c3c" stroke-width="1.2"/><circle cx="8.4" cy="7.5" r="0.65" fill="#555"/><circle cx="10.1" cy="7.5" r="0.65" fill="#555"/></svg>
<svg class="a" style="left:22.50px;top:278.30px;" width="12.80" height="10.60" viewBox="0 0 12.80 10.60"><path d="M0.7,5 L1.6,1.8 Q2,0.7 3.2,0.7 H9.6 Q10.8,0.7 11.2,1.8 L12.1,5 V9.2 Q12.1,9.9 11.4,9.9 H1.4 Q0.7,9.9 0.7,9.2 Z" fill="none" stroke="#3c3c3c" stroke-width="1.3"/><path d="M0.7,5.4 H12.1" stroke="#3c3c3c" stroke-width="1.2"/><circle cx="8.4" cy="7.5" r="0.65" fill="#555"/><circle cx="10.1" cy="7.5" r="0.65" fill="#555"/></svg>
<svg class="a" style="left:22.50px;top:304.10px;" width="12.80" height="10.60" viewBox="0 0 12.80 10.60"><path d="M0.7,5 L1.6,1.8 Q2,0.7 3.2,0.7 H9.6 Q10.8,0.7 11.2,1.8 L12.1,5 V9.2 Q12.1,9.9 11.4,9.9 H1.4 Q0.7,9.9 0.7,9.2 Z" fill="none" stroke="#3c3c3c" stroke-width="1.3"/><path d="M0.7,5.4 H12.1" stroke="#3c3c3c" stroke-width="1.2"/><circle cx="8.4" cy="7.5" r="0.65" fill="#555"/><circle cx="10.1" cy="7.5" r="0.65" fill="#555"/></svg>
<div class="a" style="left:250.00px;top:95.10px;width:609.00px;height:344.00px;background:#fff"></div>
<div class="a" style="left:278.00px;top:123.20px;width:534.00px;height:180.50px;background:#fff;border:1px solid #e4e4e4;border-radius:4px;box-shadow:0 1px 2px rgba(0,0,0,.05)"></div>
<svg class="a" style="left:294.00px;top:138.80px;" width="13.60" height="11.60" viewBox="0 0 13.60 11.60"><path d="M0,1.2 Q0,0 1.2,0 H4.6 L6,1.6 H12.4 Q13.6,1.6 13.6,2.8 V10.4 Q13.6,11.6 12.4,11.6 H1.2 Q0,11.6 0,10.4 Z" fill="#111"/></svg>
<div class="t" style="left:324.00px;top:137.95px;font-size:14px;color:#111;font-weight:normal;">css</div>
<div class="a" style="left:279.00px;top:168.20px;width:532.00px;height:1.00px;background:#ececec"></div>
<svg class="a" style="left:294.00px;top:183.80px;" width="13.60" height="11.60" viewBox="0 0 13.60 11.60"><path d="M0,1.2 Q0,0 1.2,0 H4.6 L6,1.6 H12.4 Q13.6,1.6 13.6,2.8 V10.4 Q13.6,11.6 12.4,11.6 H1.2 Q0,11.6 0,10.4 Z" fill="#111"/></svg>
<div class="t" style="left:324.00px;top:182.95px;font-size:14px;color:#111;font-weight:normal;">fonts</div>
<div class="a" style="left:279.00px;top:213.20px;width:532.00px;height:1.00px;background:#ececec"></div>
<svg class="a" style="left:294.00px;top:228.80px;" width="13.60" height="11.60" viewBox="0 0 13.60 11.60"><path d="M0,1.2 Q0,0 1.2,0 H4.6 L6,1.6 H12.4 Q13.6,1.6 13.6,2.8 V10.4 Q13.6,11.6 12.4,11.6 H1.2 Q0,11.6 0,10.4 Z" fill="#111"/></svg>
<div class="t" style="left:324.00px;top:227.95px;font-size:14px;color:#111;font-weight:normal;">js</div>
<div class="a" style="left:279.00px;top:258.20px;width:532.00px;height:1.00px;background:#ececec"></div>
<svg class="a" style="left:294.00px;top:273.80px;" width="13.60" height="11.60" viewBox="0 0 13.60 11.60"><path d="M0,1.2 Q0,0 1.2,0 H4.6 L6,1.6 H12.4 Q13.6,1.6 13.6,2.8 V10.4 Q13.6,11.6 12.4,11.6 H1.2 Q0,11.6 0,10.4 Z" fill="#111"/></svg>
<div class="t" style="left:324.00px;top:272.95px;font-size:14px;color:#111;font-weight:normal;">langs</div>
<div class="a" style="left:278.00px;top:320.00px;width:534.00px;height:180.50px;background:#fff;border:1px solid #e4e4e4;border-radius:4px;box-shadow:0 1px 2px rgba(0,0,0,.05)"></div>
<svg class="a" style="left:295.00px;top:333.50px;" width="11.50" height="14.50" viewBox="0 0 11.50 14.50"><path d="M0.7,0.7 H7.2 L10.8,4.3 V13.8 H0.7 Z" fill="none" stroke="#111" stroke-width="1.3" stroke-linejoin="round"/><path d="M7.2,0.7 V4.3 H10.8" fill="none" stroke="#111" stroke-width="1.1"/></svg>
<div class="t" style="left:324.00px;top:334.75px;font-size:14px;color:#111;font-weight:normal;">favicon.ico</div>
<div class="a" style="left:279.00px;top:365.00px;width:532.00px;height:1.00px;background:#ececec"></div>
<svg class="a" style="left:295.00px;top:378.50px;" width="11.50" height="14.50" viewBox="0 0 11.50 14.50"><path d="M0.7,0.7 H7.2 L10.8,4.3 V13.8 H0.7 Z" fill="none" stroke="#111" stroke-width="1.3" stroke-linejoin="round"/><circle cx="3.8" cy="6" r="1.2" fill="#111"/><path d="M2.2,12 L5,8.5 L6.5,10 L8.2,7.8 L9.4,12 Z" fill="#111"/></svg>
<div class="t" style="left:324.00px;top:379.75px;font-size:14px;color:#111;font-weight:normal;">favicon.png</div>
<div class="a" style="left:279.00px;top:410.00px;width:532.00px;height:1.00px;background:#ececec"></div>
<svg class="a" style="left:295.00px;top:423.30px;" width="12.80" height="14.80" viewBox="0 0 12.80 14.80"><path d="M0.7,0.7 H7.8 L12.1,5 V14.1 H0.7 Z" fill="none" stroke="#111" stroke-width="1.3" stroke-linejoin="round"/><path d="M7.8,0.7 V5 H12.1" fill="none" stroke="#111" stroke-width="1"/><path d="M4.4,7 L2.6,9.4 L4.4,11.8 M8.2,7 L10,9.4 L8.2,11.8 M7.1,6.6 L5.5,12.2" fill="none" stroke="#111" stroke-width="1.2"/></svg>
<div class="t" style="left:324.00px;top:424.75px;font-size:14px;color:#111;font-weight:normal;">index.html</div>
<div class="a" style="left:279.00px;top:455.00px;width:532.00px;height:1.00px;background:#ececec"></div>
<svg class="a" style="left:295.00px;top:468.30px;" width="12.80" height="14.80" viewBox="0 0 12.80 14.80"><path d="M0.7,0.7 H7.8 L12.1,5 V14.1 H0.7 Z" fill="none" stroke="#111" stroke-width="1.3" stroke-linejoin="round"/><path d="M7.8,0.7 V5 H12.1" fill="none" stroke="#111" stroke-width="1"/><path d="M4.4,7 L2.6,9.4 L4.4,11.8 M8.2,7 L10,9.4 L8.2,11.8 M7.1,6.6 L5.5,12.2" fill="none" stroke="#111" stroke-width="1.2"/></svg>
<div class="t" style="left:324.00px;top:469.75px;font-size:14px;color:#111;font-weight:normal;">manifest.json</div>
<div class="a" style="left:841.00px;top:95.10px;width:15.00px;height:344.00px;background:#efefef"></div>
<div class="a" style="left:841.00px;top:112.00px;width:15.00px;height:161.00px;background:#c8c8c8"></div>
<svg class="a" style="left:844.00px;top:100.50px;" width="9.00" height="6.00" viewBox="0 0 9.00 6.00"><path d="M1,5 L4.5,1.5 L8,5" fill="none" stroke="#505050" stroke-width="1.8"/></svg>
<svg class="a" style="left:844.00px;top:427.50px;" width="9.00" height="6.00" viewBox="0 0 9.00 6.00"><path d="M1,1 L4.5,4.5 L8,1" fill="none" stroke="#505050" stroke-width="1.8"/></svg>
</div>
<div class="a" style="left:854.00px;top:463.00px;width:858.00px;height:374.00px;background:#1b1e22"></div>
<div class="a" style="left:857.00px;top:466.00px;width:2.00px;height:371.00px;background:#24302c"></div>
<svg class="a" style="left:857.00px;top:466.00px;" width="2.00" height="371.00" viewBox="0 0 2.00 371.00"><rect x="0" y="10" width="2" height="3" fill="#5a8a5e" fill-opacity="0.6"/><rect x="0" y="40" width="2" height="2" fill="#5a8a5e" fill-opacity="0.6"/><rect x="0" y="95" width="2" height="4" fill="#5a8a5e" fill-opacity="0.6"/><rect x="0" y="140" width="2" height="3" fill="#5a8a5e" fill-opacity="0.6"/><rect x="0" y="150" width="2" height="2" fill="#5a8a5e" fill-opacity="0.6"/><rect x="0" y="230" width="2" height="3" fill="#5a8a5e" fill-opacity="0.6"/><rect x="0" y="300" width="2" height="2" fill="#5a8a5e" fill-opacity="0.6"/><rect x="0" y="330" width="2" height="4" fill="#5a8a5e" fill-opacity="0.6"/><rect x="0" y="360" width="2" height="3" fill="#5a8a5e" fill-opacity="0.6"/></svg>
<div class="a" style="left:859.00px;top:466.80px;width:853.00px;height:17.50px;background:linear-gradient(90deg,#1c1c1a,#201f1d 30%,#1d1c1a 55%,#181817)"></div>
<svg class="a" style="left:859.00px;top:466.80px;" width="853.00" height="17.50" viewBox="0 0 853.00 17.50"><ellipse cx="60" cy="8" rx="30" ry="6" fill="#3a3a36" fill-opacity="0.25"/><ellipse cx="200" cy="10" rx="40" ry="7" fill="#3a3a36" fill-opacity="0.25"/><ellipse cx="300" cy="5" rx="25" ry="4" fill="#3a3a36" fill-opacity="0.25"/><ellipse cx="420" cy="9" rx="35" ry="6" fill="#3a3a36" fill-opacity="0.25"/><ellipse cx="560" cy="6" rx="30" ry="5" fill="#3a3a36" fill-opacity="0.25"/><ellipse cx="700" cy="11" rx="28" ry="5" fill="#3a3a36" fill-opacity="0.25"/><ellipse cx="480" cy="14" rx="20" ry="3" fill="#3a3a36" fill-opacity="0.25"/></svg>
<div class="a" style="left:859.00px;top:484.30px;width:853.00px;height:1.70px;background:#111"></div>
<svg class="a" style="left:868.00px;top:469.20px;" width="13.60" height="12.80" viewBox="0 0 13.60 12.80"><rect x="0" y="0.8" width="6" height="3" rx="0.8" fill="#3f78c8"/><rect x="0" y="1.8" width="13.6" height="11" rx="0.8" fill="#4a8fe0"/><rect x="1.2" y="3" width="11.2" height="1.4" fill="#e6e6e6"/></svg>
<div class="t" style="left:889.60px;top:469.81px;font-size:13.45px;color:#fff;font-weight:normal;">File Manager - js</div>
<div class="a" style="left:1622.00px;top:476.80px;width:10.20px;height:3.60px;background:#fff"></div>
<svg class="a" style="left:1654.00px;top:469.60px;" width="12.20" height="11.00" viewBox="0 0 12.20 11.00"><rect x="1" y="1.5" width="10.2" height="8.5" fill="none" stroke="#fff" stroke-width="2"/><rect x="0" y="0" width="12.2" height="3.6" fill="#fff"/></svg>
<svg class="a" style="left:1686.70px;top:468.50px;" width="13.00" height="13.50" viewBox="0 0 13.00 13.50"><path d="M1.3,1.3 L11.7,12.2 M11.7,1.3 L1.3,12.2" stroke="#fff" stroke-width="2.7"/></svg>
<div class="fm" style="left:862px;top:485.5px;width:848px;height:348.6px">
<div class="a" style="left:12.00px;top:8.00px;width:34.30px;height:30.00px;background:#f5f5f5;border-radius:4.5px;"></div>
<div class="a" style="left:48.60px;top:8.00px;width:35.50px;height:30.00px;background:#efefef;border-radius:4.5px;box-shadow:0 1px 1.5px rgba(0,0,0,.18);"></div>
<div class="a" style="left:127.00px;top:8.00px;width:34.50px;height:30.00px;background:#efefef;border-radius:4.5px;box-shadow:0 1px 1.5px rgba(0,0,0,.18);"></div>
<div class="a" style="left:163.80px;top:8.00px;width:34.30px;height:30.00px;background:#efefef;border-radius:4.5px;box-shadow:0 1px 1.5px rgba(0,0,0,.18);"></div>
<div class="a" style="left:201.00px;top:8.00px;width:154.30px;height:30.00px;background:#efefef;border-radius:4.5px;box-shadow:0 1px 1.5px rgba(0,0,0,.18);"></div>
<div class="a" style="left:201.00px;top:8.00px;width:33.60px;height:30.00px;background:#e3e3e3;border-radius:4.5px 0 0 4.5px"></div>
<div class="a" style="left:357.80px;top:8.00px;width:35.00px;height:30.00px;background:#efefef;border-radius:4.5px;box-shadow:0 1px 1.5px rgba(0,0,0,.18);"></div>
<div class="a" style="left:395.10px;top:8.00px;width:35.00px;height:30.00px;background:#efefef;border-radius:4.5px;box-shadow:0 1px 1.5px rgba(0,0,0,.18);"></div>
<div class="a" style="left:432.40px;top:8.00px;width:35.00px;height:30.00px;background:#efefef;border-radius:4.5px;box-shadow:0 1px 1.5px rgba(0,0,0,.18);"></div>
<div class="a" style="left:469.70px;top:8.00px;width:35.00px;height:30.00px;background:#efefef;border-radius:4.5px;box-shadow:0 1px 1.5px rgba(0,0,0,.18);"></div>
<div class="a" style="left:507.00px;top:8.00px;width:35.00px;height:30.00px;background:#efefef;border-radius:4.5px;box-shadow:0 1px 1.5px rgba(0,0,0,.18);"></div>
<div class="a" style="left:544.30px;top:8.00px;width:35.00px;height:30.00px;background:#efefef;border-radius:4.5px;box-shadow:0 1px 1.5px rgba(0,0,0,.18);"></div>
<div class="a" style="left:581.60px;top:8.00px;width:35.00px;height:30.00px;background:#efefef;border-radius:4.5px;box-shadow:0 1px 1.5px rgba(0,0,0,.18);"></div>
<div class="a" style="left:619.30px;top:7.00px;width:36.50px;height:31.90px;background:#cd5c56;border-radius:5px"></div>
<div class="a" style="left:657.50px;top:8.00px;width:35.30px;height:30.00px;background:#efefef;border-radius:4.5px;box-shadow:0 1px 1.5px rgba(0,0,0,.18);"></div>
<div class="a" style="left:695.50px;top:8.00px;width:35.30px;height:30.00px;background:#efefef;border-radius:4.5px;box-shadow:0 1px 1.5px rgba(0,0,0,.18);"></div>
<div class="a" style="left:733.50px;top:8.00px;width:35.30px;height:30.00px;background:#efefef;border-radius:4.5px;box-shadow:0 1px 1.5px rgba(0,0,0,.18);"></div>
<div class="a" style="left:15.00px;top:48.20px;width:34.30px;height:31.00px;background:#efefef;border-radius:4.5px;box-shadow:0 1px 1.5px rgba(0,0,0,.18)"></div>
<div class="a" style="left:52.00px;top:47.00px;width:37.00px;height:32.70px;background:#333;border-radius:4.5px"></div>
<div class="a" style="left:92.20px;top:52.00px;width:129.20px;height:25.40px;background:#fff;border:1px solid #d4d4d4;border-radius:4px"></div>
<div class="t" style="left:122.30px;top:56.95px;font-size:14px;color:#444;font-weight:normal;">web: / aria2 / js</div>
<div class="t" style="left:265.60px;top:16.46px;font-size:12.1px;color:#444;font-weight:bold;">Download</div>
<svg class="a" style="left:23.50px;top:16.50px;" width="12.00" height="12.50" viewBox="0 0 12.00 12.50"><path d="M6.5,1.3 L1.8,6.1 L6.5,10.9" fill="none" stroke="#c4c4c4" stroke-width="2.6" stroke-linecap="square"/><path d="M3,6.1 H11.5" stroke="#c4c4c4" stroke-width="2.5"/></svg>
<svg class="a" style="left:60.20px;top:16.50px;" width="12.50" height="11.50" viewBox="0 0 12.50 11.50"><path d="M1.3,6.2 L6.25,1.3 L11.2,6.2" fill="none" stroke="#6e6e6e" stroke-width="2.6" stroke-linecap="square"/><path d="M6.25,2.5 V11.2" stroke="#6e6e6e" stroke-width="2.5"/></svg>
<svg class="a" style="left:136.50px;top:17.00px;" width="14.50" height="10.50" viewBox="0 0 14.50 10.50"><path d="M0.3,9.8 V1 Q0.3,0.2 1.1,0.2 H4.6 L5.8,1.5 H10.2 Q11,1.5 11,2.3 V3.6 H3.4 Z" fill="#6e6e6e"/><path d="M3.2,4.4 H14.3 L11.2,10.2 H0.4 Z" fill="#6e6e6e"/></svg>
<svg class="a" style="left:174.50px;top:15.50px;" width="13.80" height="12.00" viewBox="0 0 13.80 12.00"><path d="M7,3 H1.2 V11.1 H9.6 V7.5" fill="none" stroke="#6e6e6e" stroke-width="1.4"/><path d="M5.5,7.8 L11.8,1.6" stroke="#6e6e6e" stroke-width="1.8"/><path d="M8.2,0.2 H13.6 V5.6 Z" fill="#6e6e6e"/></svg>
<svg class="a" style="left:211.80px;top:14.50px;" width="12.40" height="11.80" viewBox="0 0 12.40 11.80"><path d="M4.6,0 H7.8 V4.6 H10.6 L6.2,9 L1.8,4.6 H4.6 Z" fill="#6e6e6e"/><path d="M0,7.2 H3.8 L6.2,9.6 L8.6,7.2 H12.4 V11.6 H0 Z" fill="#6e6e6e"/><circle cx="9.3" cy="9.9" r="0.6" fill="#e3e3e3"/><circle cx="10.9" cy="9.9" r="0.6" fill="#e3e3e3"/></svg>
<svg class="a" style="left:368.30px;top:15.80px;" width="13.60" height="13.40" viewBox="0 0 13.60 13.40"><path d="M2.8,0.7 H7.2 V3.2 H5.2 V9.6 H0.7 V3 Z" fill="#f7f7f7" stroke="#6e6e6e" stroke-width="1.2" stroke-linejoin="round"/><path d="M7.8,3.6 H12.9 V12.7 H5.3 V6.2 Z" fill="#fff" stroke="#6e6e6e" stroke-width="1.2" stroke-linejoin="round"/></svg>
<svg class="a" style="left:405.70px;top:15.80px;" width="13.60" height="13.40" viewBox="0 0 13.60 13.40"><rect x="0" y="0" width="9" height="12" fill="#6e6e6e"/><rect x="2" y="1.3" width="5" height="1.2" fill="#eee"/><path d="M5.5,4.5 H10 L12.9,7.4 V12.8 H5.5 Z" fill="#fff" stroke="#6e6e6e" stroke-width="1.2" stroke-linejoin="round"/></svg>
<svg class="a" style="left:443.00px;top:17.80px;" width="14.20" height="10.20" viewBox="0 0 14.20 10.20"><ellipse cx="2.7" cy="2.5" rx="2.1" ry="1.9" fill="none" stroke="#6e6e6e" stroke-width="1.3"/><ellipse cx="2.7" cy="7.7" rx="2.1" ry="1.9" fill="none" stroke="#6e6e6e" stroke-width="1.3"/><path d="M4.5,3.4 L13.8,8.6 M4.5,6.8 L13.8,1.6" stroke="#6e6e6e" stroke-width="1.1"/></svg>
<svg class="a" style="left:481.40px;top:15.60px;" width="12.00" height="13.70" viewBox="0 0 12.00 13.70"><path d="M0.7,0.7 H7.4 L11.2,4.5 V13 H0.7 Z" fill="none" stroke="#6e6e6e" stroke-width="1.3" stroke-linejoin="round"/><path d="M7.4,0.7 V4.5 H11.2" fill="#6e6e6e"/></svg>
<svg class="a" style="left:517.70px;top:16.50px;" width="13.50" height="10.70" viewBox="0 0 13.50 10.70"><path d="M0.7,1.5 Q0.7,0.7 1.5,0.7 H4.8 L6,2 H12 Q12.8,2 12.8,2.8 V9.2 Q12.8,10 12,10 H1.5 Q0.7,10 0.7,9.2 Z" fill="none" stroke="#6e6e6e" stroke-width="1.3"/></svg>
<svg class="a" style="left:555.50px;top:15.60px;" width="13.20" height="12.80" viewBox="0 0 13.20 12.80"><path d="M6.6,0 L11.2,4.6 H8.3 V8.6 H4.9 V4.6 H2 Z" fill="#6e6e6e"/><path d="M0,8 H3.8 V10 H9.4 V8 H13.2 V12.6 H0 Z" fill="#6e6e6e"/><circle cx="9.9" cy="10.9" r="0.6" fill="#eee"/><circle cx="11.6" cy="10.9" r="0.6" fill="#eee"/></svg>
<svg class="a" style="left:594.80px;top:15.60px;" width="7.50" height="13.70" viewBox="0 0 7.50 13.70"><path d="M0.3,0.7 Q3.75,0.3 3.75,2.5 V11.2 Q3.75,13.4 0.3,13 M7.2,0.7 Q3.75,0.3 3.75,2.5 M3.75,11.2 Q3.75,13.4 7.2,13" fill="none" stroke="#6e6e6e" stroke-width="1.2"/><path d="M2.2,6.8 H5.3" stroke="#6e6e6e" stroke-width="1"/></svg>
<svg class="a" style="left:631.80px;top:16.50px;" width="11.20" height="11.80" viewBox="0 0 11.20 11.80"><path d="M0.4,2.4 H10.8" stroke="#f8dede" stroke-width="1.2"/><path d="M3.6,2.4 V0.9 H7.6 V2.4" fill="none" stroke="#f8dede" stroke-width="1.1"/><path d="M1.5,2.6 L2,11.1 H9.2 L9.7,2.6" fill="none" stroke="#f8dede" stroke-width="1.2"/><path d="M4,4.5 V9.5 M5.6,4.5 V9.5 M7.2,4.5 V9.5" stroke="#f8dede" stroke-width="0.9"/></svg>
<svg class="a" style="left:669.60px;top:16.50px;" width="12.80" height="11.50" viewBox="0 0 12.80 11.50"><path d="M1.5,5 A4.9,4.9 0 0 1 10.2,2.8" fill="none" stroke="#6e6e6e" stroke-width="1.9"/><path d="M12.1,0.2 V5 H7.5 Z" fill="#6e6e6e"/><path d="M11.3,6.5 A4.9,4.9 0 0 1 2.6,8.7" fill="none" stroke="#6e6e6e" stroke-width="1.9"/><path d="M0.7,11.3 V6.5 H5.3 Z" fill="#6e6e6e"/></svg>
<svg class="a" style="left:710.30px;top:16.50px;" width="5.80" height="10.60" viewBox="0 0 5.80 10.60"><circle cx="2.9" cy="1.4" r="1.4" fill="#6e6e6e"/><path d="M0.2,3.8 H3.9 V8.8 H5.6 V10.5 H0.2 V8.8 H1.8 V5.5 H0.2 Z" fill="#6e6e6e"/></svg>
<svg class="a" style="left:747.00px;top:17.80px;" width="7.40" height="9.40" viewBox="0 0 7.40 9.40"><path d="M1,3 Q1,0.9 3.7,0.9 Q6.4,0.9 6.4,2.9 Q6.4,4.1 5,4.8 Q4.4,5.2 4.4,6.1" fill="none" stroke="#6e6e6e" stroke-width="1.9"/><rect x="3" y="7.3" width="2.6" height="2.1" fill="#6e6e6e"/></svg>
<svg class="a" style="left:26.60px;top:58.50px;" width="11.80" height="9.60" viewBox="0 0 11.80 9.60"><rect x="0" y="0.30" width="11.8" height="1.8" fill="#6e6e6e"/><rect x="0" y="4.05" width="11.8" height="1.8" fill="#6e6e6e"/><rect x="0" y="7.80" width="11.8" height="1.8" fill="#6e6e6e"/></svg>
<svg class="a" style="left:64.50px;top:57.00px;" width="12.00" height="12.50" viewBox="0 0 12.00 12.50"><path d="M6.2,0.8 A5.5,5.5 0 1 0 11.4,9.3 A5,5 0 0 1 6.2,0.8 Z" fill="none" stroke="#fff" stroke-width="1.1"/></svg>
<svg class="a" style="left:99.00px;top:57.80px;" width="14.20" height="11.20" viewBox="0 0 14.20 11.20"><path d="M0,1.3 Q0,0 1.3,0 H4.8 L6.3,1.6 H12.9 Q14.2,1.6 14.2,2.9 V9.9 Q14.2,11.2 12.9,11.2 H1.3 Q0,11.2 0,9.9 Z" fill="#555"/></svg>
<div class="a" style="left:622.00px;top:45.20px;width:101.50px;height:30.40px;background:#fff;border-radius:4px"></div>
<div class="t" style="left:636.70px;top:55.10px;font-size:11.1px;color:#444;font-weight:normal;">Ascending</div>
<svg class="a" style="left:704.00px;top:57.70px;" width="9.00" height="4.60" viewBox="0 0 9.00 4.60"><path d="M0,0 H9 L4.5,4.6 Z" fill="#555"/></svg>
<div class="a" style="left:726.90px;top:44.40px;width:34.80px;height:30.80px;background:#efefef;border-radius:4.5px;box-shadow:0 1px 1.5px rgba(0,0,0,.18);"></div>
<div class="a" style="left:763.80px;top:44.40px;width:34.80px;height:30.80px;background:#efefef;border-radius:4.5px;box-shadow:0 1px 1.5px rgba(0,0,0,.18);"></div>
<div class="a" style="left:801.80px;top:44.40px;width:34.80px;height:30.80px;background:#f4f4f4;border-radius:4.5px;box-shadow:0 1px 1.5px rgba(0,0,0,.12);"></div>
<svg class="a" style="left:738.00px;top:53.60px;" width="13.00" height="12.80" viewBox="0 0 13.00 12.80"><circle cx="5.2" cy="5.2" r="4.1" fill="none" stroke="#6e6e6e" stroke-width="1.9"/><path d="M8.2,8.2 L12.2,12.2" stroke="#6e6e6e" stroke-width="2.2"/></svg>
<svg class="a" style="left:775.20px;top:53.80px;" width="12.80" height="10.30" viewBox="0 0 12.80 10.30"><rect x="0" y="0" width="5.9" height="4.7" fill="#6e6e6e"/><rect x="6.9" y="0" width="5.9" height="4.7" fill="#6e6e6e"/><rect x="0" y="5.6" width="5.9" height="4.7" fill="#6e6e6e"/><rect x="6.9" y="5.6" width="5.9" height="4.7" fill="#6e6e6e"/></svg>
<svg class="a" style="left:812.00px;top:54.00px;" width="13.20" height="10.00" viewBox="0 0 13.20 10.00"><rect x="0" y="0.00" width="13.2" height="1.5" fill="#b3b3b3"/><rect x="0" y="2.80" width="13.2" height="1.5" fill="#b3b3b3"/><rect x="0" y="5.60" width="13.2" height="1.5" fill="#b3b3b3"/><rect x="0" y="8.40" width="13.2" height="1.5" fill="#b3b3b3"/></svg>
<div class="a" style="left:0.00px;top:93.00px;width:848.00px;height:2.10px;background:#28abe6"></div>
<div class="a" style="left:0.00px;top:95.10px;width:248.00px;height:253.60px;background:#f5f5f5"></div>
<div class="a" style="left:248.00px;top:95.10px;width:2.00px;height:253.60px;background:#e1e6ef"></div>
<svg class="a" style="left:16.30px;top:120.90px;" width="8.80" height="5.20" viewBox="0 0 8.80 5.20"><path d="M0,0 H8.8 L4.4,5.2 Z" fill="#555"/></svg>
<svg class="a" style="left:16.30px;top:230.90px;" width="8.80" height="5.20" viewBox="0 0 8.80 5.20"><path d="M0,0 H8.8 L4.4,5.2 Z" fill="#555"/></svg>
<div class="t" style="left:37.50px;top:116.56px;font-size:13.4px;color:#555;font-weight:normal;">User</div>
<div class="t" style="left:37.50px;top:226.69px;font-size:13.6px;color:#555;font-weight:normal;">Storage</div>
<div class="t" style="left:47.50px;top:142.95px;font-size:14px;color:#333;font-weight:normal;">Desktop</div>
<div class="t" style="left:47.50px;top:168.95px;font-size:14px;color:#333;font-weight:normal;">Music</div>
<div class="t" style="left:47.50px;top:194.95px;font-size:14px;color:#333;font-weight:normal;">Video</div>
<div class="t" style="left:47.50px;top:253.99px;font-size:13.6px;color:#333;font-weight:normal;">User (user:/)</div>
<div class="t" style="left:47.50px;top:279.79px;font-size:13.6px;color:#333;font-weight:normal;">tmp (tmp:/)</div>
<div class="t" style="left:47.50px;top:305.59px;font-size:13.6px;color:#333;font-weight:normal;">Web (web:/)</div>
<svg class="a" style="left:22.00px;top:139.80px;" width="15.60" height="12.80" viewBox="0 0 15.60 12.80"><rect x="0.7" y="0.7" width="14.2" height="8.6" rx="0.8" fill="none" stroke="#555" stroke-width="1.4"/><rect x="0" y="7.6" width="15.6" height="2.5" fill="#555"/><rect x="6.2" y="10" width="3.2" height="1.5" fill="#555"/><rect x="4" y="11.3" width="7.6" height="1.5" fill="#555"/></svg>
<svg class="a" style="left:22.60px;top:166.60px;" width="13.20" height="13.80" viewBox="0 0 13.20 13.80"><path d="M4.2,10.5 V2.2 L12.4,0.3 V8.8" fill="none" stroke="#555" stroke-width="1.8"/><ellipse cx="2.4" cy="11.4" rx="2.3" ry="1.8" fill="#555"/><ellipse cx="10.6" cy="9.6" rx="2.3" ry="1.8" fill="#555"/><path d="M4.2,2.2 L12.4,0.3 V3.2 L4.2,5 Z" fill="#555"/></svg>
<svg class="a" style="left:22.20px;top:192.60px;" width="15.30" height="13.20" viewBox="0 0 15.30 13.20"><rect x="0.6" y="0.6" width="14.1" height="12" fill="none" stroke="#555" stroke-width="1.2"/><path d="M3.4,0.6 V12.6 M11.9,0.6 V12.6 M0.6,3.6 H3.4 M0.6,6.6 H3.4 M0.6,9.6 H3.4 M11.9,3.6 H14.7 M11.9,6.6 H14.7 M11.9,9.6 H14.7 M3.4,6.6 H11.9" stroke="#555" stroke-width="1.1"/></svg>
<svg class="a" style="left:22.50px;top:252.50px;" width="12.80" height="10.60" viewBox="0 0 12.80 10.60"><path d="M0.7,5 L1.6,1.8 Q2,0.7 3.2,0.7 H9.6 Q10.8,0.7 11.2,1.8 L12.1,5 V9.2 Q12.1,9.9 11.4,9.9 H1.4 Q0.7,9.9 0.7,9.2 Z" fill="none" stroke="#3c3c3c" stroke-width="1.3"/><path d="M0.7,5.4 H12.1" stroke="#3c3c3c" stroke-width="1.2"/><circle cx="8.4" cy="7.5" r="0.65" fill="#555"/><circle cx="10.1" cy="7.5" r="0.65" fill="#555"/></svg>
<svg class="a" style="left:22.50px;top:278.30px;" width="12.80" height="10.60" viewBox="0 0 12.80 10.60"><path d="M0.7,5 L1.6,1.8 Q2,0.7 3.2,0.7 H9.6 Q10.8,0.7 11.2,1.8 L12.1,5 V9.2 Q12.1,9.9 11.4,9.9 H1.4 Q0.7,9.9 0.7,9.2 Z" fill="none" stroke="#3c3c3c" stroke-width="1.3"/><path d="M0.7,5.4 H12.1" stroke="#3c3c3c" stroke-width="1.2"/><circle cx="8.4" cy="7.5" r="0.65" fill="#555"/><circle cx="10.1" cy="7.5" r="0.65" fill="#555"/></svg>
<svg class="a" style="left:22.50px;top:304.10px;" width="12.80" height="10.60" viewBox="0 0 12.80 10.60"><path d="M0.7,5 L1.6,1.8 Q2,0.7 3.2,0.7 H9.6 Q10.8,0.7 11.2,1.8 L12.1,5 V9.2 Q12.1,9.9 11.4,9.9 H1.4 Q0.7,9.9 0.7,9.2 Z" fill="none" stroke="#3c3c3c" stroke-width="1.3"/><path d="M0.7,5.4 H12.1" stroke="#3c3c3c" stroke-width="1.2"/><circle cx="8.4" cy="7.5" r="0.65" fill="#555"/><circle cx="10.1" cy="7.5" r="0.65" fill="#555"/></svg>
<div class="a" style="left:250.00px;top:95.10px;width:598.00px;height:253.60px;background:#fff"></div>
<div class="a" style="left:278.00px;top:137.40px;width:523.00px;height:270.50px;background:#fff;border:1px solid #e4e4e4;border-radius:4px;box-shadow:0 1px 2px rgba(0,0,0,.05)"></div>
<svg class="a" style="left:295.00px;top:150.70px;" width="12.80" height="14.80" viewBox="0 0 12.80 14.80"><path d="M0.7,0.7 H7.8 L12.1,5 V14.1 H0.7 Z" fill="none" stroke="#111" stroke-width="1.3" stroke-linejoin="round"/><path d="M7.8,0.7 V5 H12.1" fill="none" stroke="#111" stroke-width="1"/><path d="M4.4,7 L2.6,9.4 L4.4,11.8 M8.2,7 L10,9.4 L8.2,11.8 M7.1,6.6 L5.5,12.2" fill="none" stroke="#111" stroke-width="1.2"/></svg>
<div class="t" style="left:324.00px;top:152.15px;font-size:14px;color:#111;font-weight:normal;">angular-packages-1.6.10.min.js</div>
<div class="a" style="left:279.00px;top:182.40px;width:521.00px;height:1.00px;background:#ececec"></div>
<svg class="a" style="left:295.00px;top:195.70px;" width="12.80" height="14.80" viewBox="0 0 12.80 14.80"><path d="M0.7,0.7 H7.8 L12.1,5 V14.1 H0.7 Z" fill="none" stroke="#111" stroke-width="1.3" stroke-linejoin="round"/><path d="M7.8,0.7 V5 H12.1" fill="none" stroke="#111" stroke-width="1"/><path d="M4.4,7 L2.6,9.4 L4.4,11.8 M8.2,7 L10,9.4 L8.2,11.8 M7.1,6.6 L5.5,12.2" fill="none" stroke="#111" stroke-width="1.2"/></svg>
<div class="t" style="left:324.00px;top:197.15px;font-size:14px;color:#111;font-weight:normal;">aria-ng-da5356c403.min.js</div>
<div class="a" style="left:279.00px;top:227.40px;width:521.00px;height:1.00px;background:#ececec"></div>
<svg class="a" style="left:295.00px;top:240.70px;" width="12.80" height="14.80" viewBox="0 0 12.80 14.80"><path d="M0.7,0.7 H7.8 L12.1,5 V14.1 H0.7 Z" fill="none" stroke="#111" stroke-width="1.3" stroke-linejoin="round"/><path d="M7.8,0.7 V5 H12.1" fill="none" stroke="#111" stroke-width="1"/><path d="M4.4,7 L2.6,9.4 L4.4,11.8 M8.2,7 L10,9.4 L8.2,11.8 M7.1,6.6 L5.5,12.2" fill="none" stroke="#111" stroke-width="1.2"/></svg>
<div class="t" style="left:324.00px;top:242.15px;font-size:14px;color:#111;font-weight:normal;">bootstrap-3.4.1.min.js</div>
<div class="a" style="left:279.00px;top:272.40px;width:521.00px;height:1.00px;background:#ececec"></div>
<svg class="a" style="left:295.00px;top:285.70px;" width="12.80" height="14.80" viewBox="0 0 12.80 14.80"><path d="M0.7,0.7 H7.8 L12.1,5 V14.1 H0.7 Z" fill="none" stroke="#111" stroke-width="1.3" stroke-linejoin="round"/><path d="M7.8,0.7 V5 H12.1" fill="none" stroke="#111" stroke-width="1"/><path d="M4.4,7 L2.6,9.4 L4.4,11.8 M8.2,7 L10,9.4 L8.2,11.8 M7.1,6.6 L5.5,12.2" fill="none" stroke="#111" stroke-width="1.2"/></svg>
<div class="t" style="left:324.00px;top:287.15px;font-size:14px;color:#111;font-weight:normal;">echarts-common-3.8.5.min.js</div>
<div class="a" style="left:279.00px;top:317.40px;width:521.00px;height:1.00px;background:#ececec"></div>
<svg class="a" style="left:295.00px;top:330.70px;" width="12.80" height="14.80" viewBox="0 0 12.80 14.80"><path d="M0.7,0.7 H7.8 L12.1,5 V14.1 H0.7 Z" fill="none" stroke="#111" stroke-width="1.3" stroke-linejoin="round"/><path d="M7.8,0.7 V5 H12.1" fill="none" stroke="#111" stroke-width="1"/><path d="M4.4,7 L2.6,9.4 L4.4,11.8 M8.2,7 L10,9.4 L8.2,11.8 M7.1,6.6 L5.5,12.2" fill="none" stroke="#111" stroke-width="1.2"/></svg>
<div class="t" style="left:324.00px;top:332.15px;font-size:14px;color:#111;font-weight:normal;">jquery-3.3.1.min.js</div>
<div class="a" style="left:279.00px;top:362.40px;width:521.00px;height:1.00px;background:#ececec"></div>
<svg class="a" style="left:295.00px;top:375.70px;" width="12.80" height="14.80" viewBox="0 0 12.80 14.80"><path d="M0.7,0.7 H7.8 L12.1,5 V14.1 H0.7 Z" fill="none" stroke="#111" stroke-width="1.3" stroke-linejoin="round"/><path d="M7.8,0.7 V5 H12.1" fill="none" stroke="#111" stroke-width="1"/><path d="M4.4,7 L2.6,9.4 L4.4,11.8 M8.2,7 L10,9.4 L8.2,11.8 M7.1,6.6 L5.5,12.2" fill="none" stroke="#111" stroke-width="1.2"/></svg>
<div class="t" style="left:324.00px;top:377.15px;font-size:14px;color:#111;font-weight:normal;">moment-2.22.2.min.js</div>
<div class="a" style="left:830.00px;top:95.10px;width:15.00px;height:253.60px;background:#efefef"></div>
<div class="a" style="left:830.00px;top:112.90px;width:15.00px;height:128.60px;background:#c8c8c8"></div>
<svg class="a" style="left:833.00px;top:100.50px;" width="9.00" height="6.00" viewBox="0 0 9.00 6.00"><path d="M1,5 L4.5,1.5 L8,5" fill="none" stroke="#505050" stroke-width="1.8"/></svg>
<svg class="a" style="left:833.00px;top:337.10px;" width="9.00" height="6.00" viewBox="0 0 9.00 6.00"><path d="M1,1 L4.5,4.5 L8,1" fill="none" stroke="#505050" stroke-width="1.8"/></svg>
</div>
<div class="a" style="left:0.00px;top:837.00px;width:1712.00px;height:34.00px;background:linear-gradient(90deg,#22161e 0%,#20171c 8%,#1d1719 20%,#1d1719 60%,#20171c 72%,#231820 82%,#241822 100%)"></div>
<svg class="a" style="left:0.00px;top:837.00px;" width="1712.00" height="34.00" viewBox="0 0 1712.00 34.00"><path d="M774.5,39.8 Q776.4,33.6 774.6,27.4" stroke="#2b3a2e" stroke-opacity="0.15" stroke-width="1.5" fill="none"/><path d="M1051.1,19.8 Q1051.9,16.5 1051.5,13.2" stroke="#56705a" stroke-opacity="0.28" stroke-width="1.4" fill="none"/><path d="M775.5,28.3 Q777.5,21.7 783.2,15.2" stroke="#2e4530" stroke-opacity="0.12" stroke-width="1.1" fill="none"/><path d="M754.2,22.8 Q755.1,15.0 754.2,7.3" stroke="#56705a" stroke-opacity="0.12" stroke-width="1.4" fill="none"/><path d="M943.8,4.5 Q942.9,0.6 947.2,-3.4" stroke="#2b3a2e" stroke-opacity="0.18" stroke-width="1.9" fill="none"/><path d="M685.5,17.2 Q693.7,8.2 696.7,-0.8" stroke="#2e4530" stroke-opacity="0.16" stroke-width="0.9" fill="none"/><path d="M642.8,18.6 Q637.0,12.3 636.2,6.1" stroke="#56705a" stroke-opacity="0.18" stroke-width="1.3" fill="none"/><path d="M202.0,5.2 Q201.3,3.0 204.3,0.7" stroke="#3a5538" stroke-opacity="0.29" stroke-width="1.5" fill="none"/><path d="M717.7,17.6 Q712.2,10.0 702.1,2.4" stroke="#2b3a2e" stroke-opacity="0.19" stroke-width="1.1" fill="none"/><path d="M675.0,28.0 Q674.1,25.9 679.1,23.8" stroke="#3a5538" stroke-opacity="0.22" stroke-width="1.7" fill="none"/><path d="M127.2,27.7 Q129.5,25.6 126.3,23.6" stroke="#2b3a2e" stroke-opacity="0.23" stroke-width="1.5" fill="none"/><path d="M983.7,8.7 Q983.9,6.0 987.8,3.3" stroke="#2b3a2e" stroke-opacity="0.17" stroke-width="1.8" fill="none"/><path d="M1033.3,5.4 Q1034.2,3.6 1036.4,1.9" stroke="#3a5538" stroke-opacity="0.31" stroke-width="1.4" fill="none"/><path d="M890.4,42.0 Q890.9,38.9 890.2,35.8" stroke="#56705a" stroke-opacity="0.34" stroke-width="1.2" fill="none"/><path d="M763.0,8.4 Q761.5,3.1 764.3,-2.2" stroke="#3a5538" stroke-opacity="0.13" stroke-width="1.4" fill="none"/><path d="M566.6,22.9 Q567.3,12.5 569.6,2.1" stroke="#2e4530" stroke-opacity="0.23" stroke-width="1.2" fill="none"/><path d="M128.1,14.1 Q127.5,11.6 124.0,9.1" stroke="#4a6446" stroke-opacity="0.25" stroke-width="2.1" fill="none"/><path d="M602.3,38.8 Q601.5,29.1 599.7,19.3" stroke="#2e4530" stroke-opacity="0.34" stroke-width="1.7" fill="none"/><path d="M654.6,26.6 Q656.5,23.9 655.8,21.3" stroke="#243524" stroke-opacity="0.35" stroke-width="1.3" fill="none"/><path d="M754.2,4.5 Q745.3,-1.9 742.2,-8.3" stroke="#2b3a2e" stroke-opacity="0.12" stroke-width="2.1" fill="none"/><path d="M193.3,28.7 Q198.1,23.6 200.8,18.5" stroke="#243524" stroke-opacity="0.18" stroke-width="1.1" fill="none"/><path d="M290.4,28.7 Q292.4,23.9 297.4,19.0" stroke="#243524" stroke-opacity="0.21" stroke-width="1.7" fill="none"/><path d="M342.9,10.2 Q340.3,1.0 333.7,-8.2" stroke="#3a5538" stroke-opacity="0.24" stroke-width="2.0" fill="none"/><path d="M473.9,19.9 Q472.0,15.9 469.9,11.9" stroke="#4a6446" stroke-opacity="0.21" stroke-width="1.7" fill="none"/><path d="M1069.6,35.8 Q1070.8,31.4 1071.2,26.9" stroke="#56705a" stroke-opacity="0.30" stroke-width="1.2" fill="none"/><path d="M1355.1,6.7 Q1348.7,2.3 1346.7,-2.1" stroke="#243524" stroke-opacity="0.17" stroke-width="0.9" fill="none"/><path d="M1077.2,27.5 Q1079.1,20.5 1084.6,13.5" stroke="#2e4530" stroke-opacity="0.29" stroke-width="1.5" fill="none"/><path d="M305.9,20.8 Q302.0,13.5 297.6,6.2" stroke="#243524" stroke-opacity="0.32" stroke-width="2.1" fill="none"/><path d="M856.7,7.7 Q862.3,-1.5 862.8,-10.6" stroke="#3a5538" stroke-opacity="0.12" stroke-width="1.8" fill="none"/><path d="M222.4,27.3 Q220.4,17.3 218.4,7.3" stroke="#2b3a2e" stroke-opacity="0.28" stroke-width="1.9" fill="none"/><path d="M587.4,42.3 Q586.7,39.8 590.6,37.4" stroke="#56705a" stroke-opacity="0.36" stroke-width="1.1" fill="none"/><path d="M668.1,14.0 Q677.1,5.7 681.8,-2.6" stroke="#243524" stroke-opacity="0.35" stroke-width="1.3" fill="none"/><path d="M141.7,24.1 Q143.7,15.2 141.3,6.3" stroke="#2e4530" stroke-opacity="0.16" stroke-width="1.4" fill="none"/><path d="M805.6,38.8 Q807.4,32.4 809.3,26.0" stroke="#4a6446" stroke-opacity="0.36" stroke-width="2.1" fill="none"/><path d="M147.3,23.1 Q149.0,18.8 150.6,14.5" stroke="#56705a" stroke-opacity="0.15" stroke-width="2.1" fill="none"/><path d="M439.2,41.1 Q443.7,31.4 442.6,21.7" stroke="#243524" stroke-opacity="0.34" stroke-width="1.5" fill="none"/><path d="M981.0,23.5 Q979.3,17.1 983.1,10.6" stroke="#2e4530" stroke-opacity="0.25" stroke-width="2.1" fill="none"/><path d="M931.3,6.1 Q932.4,3.7 928.4,1.2" stroke="#2b3a2e" stroke-opacity="0.23" stroke-width="1.9" fill="none"/><path d="M691.9,21.7 Q692.6,17.7 698.0,13.6" stroke="#4a6446" stroke-opacity="0.25" stroke-width="1.4" fill="none"/><path d="M1238.8,22.0 Q1241.0,15.5 1240.5,9.1" stroke="#2b3a2e" stroke-opacity="0.27" stroke-width="1.8" fill="none"/><path d="M1504.4,27.6 Q1506.9,18.3 1507.9,9.1" stroke="#2b3a2e" stroke-opacity="0.16" stroke-width="1.7" fill="none"/><path d="M906.7,26.7 Q901.8,17.9 898.7,9.0" stroke="#56705a" stroke-opacity="0.28" stroke-width="1.1" fill="none"/><path d="M1032.6,9.2 Q1026.8,1.2 1024.1,-6.7" stroke="#2e4530" stroke-opacity="0.14" stroke-width="1.8" fill="none"/><path d="M444.3,36.0 Q447.6,30.8 449.4,25.6" stroke="#3a5538" stroke-opacity="0.16" stroke-width="1.9" fill="none"/><path d="M164.4,16.0 Q163.9,6.9 160.3,-2.3" stroke="#56705a" stroke-opacity="0.24" stroke-width="1.5" fill="none"/><path d="M1173.9,4.0 Q1174.3,1.8 1169.9,-0.4" stroke="#2b3a2e" stroke-opacity="0.27" stroke-width="1.5" fill="none"/><path d="M324.5,8.2 Q320.8,5.0 322.2,1.8" stroke="#56705a" stroke-opacity="0.13" stroke-width="2.1" fill="none"/><path d="M791.1,14.7 Q790.5,8.5 791.4,2.3" stroke="#4a6446" stroke-opacity="0.16" stroke-width="1.7" fill="none"/><path d="M698.4,16.5 Q697.2,6.4 701.9,-3.8" stroke="#2e4530" stroke-opacity="0.24" stroke-width="2.1" fill="none"/><path d="M692.5,22.2 Q695.3,12.6 702.7,3.0" stroke="#243524" stroke-opacity="0.18" stroke-width="1.8" fill="none"/><path d="M274.0,6.6 Q275.9,1.6 274.6,-3.3" stroke="#243524" stroke-opacity="0.31" stroke-width="1.4" fill="none"/><path d="M1237.2,15.4 Q1235.2,10.9 1228.4,6.5" stroke="#243524" stroke-opacity="0.38" stroke-width="0.9" fill="none"/><path d="M467.3,13.6 Q466.1,9.7 466.2,5.8" stroke="#3a5538" stroke-opacity="0.25" stroke-width="2.2" fill="none"/><path d="M1099.6,33.0 Q1090.5,25.2 1084.6,17.4" stroke="#2b3a2e" stroke-opacity="0.13" stroke-width="1.4" fill="none"/><path d="M864.2,28.2 Q863.7,26.3 862.6,24.3" stroke="#243524" stroke-opacity="0.35" stroke-width="1.5" fill="none"/><path d="M1385.9,26.1 Q1382.9,19.5 1374.2,12.9" stroke="#3a5538" stroke-opacity="0.21" stroke-width="2.0" fill="none"/><path d="M927.8,19.0 Q924.8,13.0 923.5,6.9" stroke="#4a6446" stroke-opacity="0.27" stroke-width="1.2" fill="none"/><path d="M1121.6,12.9 Q1119.4,4.9 1116.1,-3.1" stroke="#2e4530" stroke-opacity="0.32" stroke-width="1.7" fill="none"/><path d="M699.9,3.2 Q701.8,-1.6 698.3,-6.3" stroke="#2b3a2e" stroke-opacity="0.38" stroke-width="0.9" fill="none"/><path d="M817.7,11.2 Q819.9,6.1 826.3,1.0" stroke="#56705a" stroke-opacity="0.35" stroke-width="2.1" fill="none"/><path d="M419.8,3.1 Q414.4,-1.6 413.2,-6.3" stroke="#2e4530" stroke-opacity="0.20" stroke-width="1.3" fill="none"/><path d="M239.3,26.2 Q241.7,18.8 243.8,11.4" stroke="#243524" stroke-opacity="0.32" stroke-width="2.2" fill="none"/><path d="M408.2,38.5 Q410.6,29.6 411.8,20.7" stroke="#243524" stroke-opacity="0.18" stroke-width="1.8" fill="none"/><path d="M1196.8,12.7 Q1202.0,9.6 1202.3,6.5" stroke="#2b3a2e" stroke-opacity="0.37" stroke-width="2.0" fill="none"/><path d="M67.6,12.4 Q67.4,6.7 69.9,1.0" stroke="#2e4530" stroke-opacity="0.16" stroke-width="1.9" fill="none"/><path d="M401.9,21.3 Q402.6,16.3 399.2,11.3" stroke="#4a6446" stroke-opacity="0.31" stroke-width="0.9" fill="none"/><path d="M205.1,27.2 Q200.5,19.2 197.2,11.2" stroke="#4a6446" stroke-opacity="0.31" stroke-width="1.0" fill="none"/><path d="M262.7,26.1 Q263.8,21.8 266.5,17.6" stroke="#3a5538" stroke-opacity="0.22" stroke-width="0.9" fill="none"/><path d="M1498.3,4.5 Q1500.1,-2.6 1498.0,-9.7" stroke="#56705a" stroke-opacity="0.23" stroke-width="0.8" fill="none"/><path d="M531.0,26.4 Q533.2,18.1 530.8,9.8" stroke="#56705a" stroke-opacity="0.19" stroke-width="1.1" fill="none"/><path d="M1125.2,39.1 Q1127.4,34.2 1124.3,29.3" stroke="#2b3a2e" stroke-opacity="0.36" stroke-width="2.1" fill="none"/><path d="M749.8,13.8 Q747.6,9.0 748.3,4.2" stroke="#56705a" stroke-opacity="0.35" stroke-width="1.3" fill="none"/><path d="M625.8,17.6 Q622.6,12.8 620.7,7.9" stroke="#2b3a2e" stroke-opacity="0.20" stroke-width="1.0" fill="none"/><path d="M1012.0,4.8 Q1012.7,-0.4 1018.6,-5.5" stroke="#2e4530" stroke-opacity="0.16" stroke-width="1.0" fill="none"/><path d="M506.5,36.4 Q504.8,30.6 508.1,24.8" stroke="#243524" stroke-opacity="0.32" stroke-width="0.9" fill="none"/><path d="M145.0,7.0 Q147.0,-1.4 149.1,-9.9" stroke="#3a5538" stroke-opacity="0.30" stroke-width="2.1" fill="none"/><path d="M578.9,15.7 Q576.7,6.8 574.1,-2.2" stroke="#3a5538" stroke-opacity="0.24" stroke-width="1.8" fill="none"/><path d="M703.0,29.0 Q710.3,20.5 712.1,11.9" stroke="#2e4530" stroke-opacity="0.35" stroke-width="1.7" fill="none"/><path d="M896.8,34.7 Q894.1,28.9 895.4,23.2" stroke="#3a5538" stroke-opacity="0.17" stroke-width="1.7" fill="none"/><path d="M1171.1,17.4 Q1170.1,11.0 1166.3,4.7" stroke="#2e4530" stroke-opacity="0.23" stroke-width="1.2" fill="none"/><path d="M266.2,39.3 Q257.3,33.0 254.0,26.7" stroke="#4a6446" stroke-opacity="0.35" stroke-width="1.0" fill="none"/><path d="M315.9,10.9 Q319.6,2.5 318.5,-5.8" stroke="#3a5538" stroke-opacity="0.22" stroke-width="1.4" fill="none"/><path d="M1073.0,24.1 Q1071.8,14.4 1072.5,4.8" stroke="#4a6446" stroke-opacity="0.36" stroke-width="1.6" fill="none"/><path d="M378.4,40.8 Q378.3,31.7 375.0,22.7" stroke="#2b3a2e" stroke-opacity="0.32" stroke-width="1.9" fill="none"/><path d="M99.2,38.5 Q106.4,30.6 111.1,22.7" stroke="#4a6446" stroke-opacity="0.32" stroke-width="1.6" fill="none"/><path d="M269.3,14.5 Q273.1,10.9 274.1,7.3" stroke="#2b3a2e" stroke-opacity="0.14" stroke-width="1.7" fill="none"/><path d="M883.3,25.0 Q879.1,21.8 880.0,18.6" stroke="#3a5538" stroke-opacity="0.33" stroke-width="1.2" fill="none"/><path d="M1226.7,21.2 Q1230.9,16.5 1235.0,11.9" stroke="#2b3a2e" stroke-opacity="0.25" stroke-width="0.8" fill="none"/><path d="M321.4,29.7 Q320.7,20.7 319.7,11.7" stroke="#2e4530" stroke-opacity="0.25" stroke-width="1.0" fill="none"/><path d="M532.0,13.8 Q531.9,8.0 536.2,2.2" stroke="#243524" stroke-opacity="0.12" stroke-width="1.7" fill="none"/><path d="M1342.9,19.7 Q1346.6,10.5 1349.4,1.3" stroke="#4a6446" stroke-opacity="0.17" stroke-width="1.4" fill="none"/><path d="M1368.7,26.9 Q1370.5,22.4 1366.8,17.8" stroke="#2b3a2e" stroke-opacity="0.31" stroke-width="1.9" fill="none"/><path d="M951.2,8.9 Q948.4,4.6 944.9,0.2" stroke="#243524" stroke-opacity="0.36" stroke-width="1.8" fill="none"/><path d="M567.8,4.9 Q563.9,2.3 563.8,-0.3" stroke="#56705a" stroke-opacity="0.28" stroke-width="1.1" fill="none"/><path d="M1205.1,2.4 Q1205.9,-8.5 1202.8,-19.3" stroke="#2e4530" stroke-opacity="0.20" stroke-width="2.1" fill="none"/><path d="M238.1,7.2 Q239.2,-1.0 237.6,-9.2" stroke="#4a6446" stroke-opacity="0.27" stroke-width="1.7" fill="none"/><path d="M543.9,11.3 Q543.5,0.4 544.9,-10.4" stroke="#243524" stroke-opacity="0.19" stroke-width="1.7" fill="none"/><path d="M181.9,22.4 Q185.0,14.5 191.0,6.6" stroke="#2b3a2e" stroke-opacity="0.30" stroke-width="1.6" fill="none"/><path d="M511.0,26.7 Q511.9,20.1 512.6,13.6" stroke="#3a5538" stroke-opacity="0.38" stroke-width="1.8" fill="none"/><path d="M338.8,11.3 Q343.3,4.4 343.3,-2.4" stroke="#243524" stroke-opacity="0.13" stroke-width="1.2" fill="none"/><path d="M1249.4,24.9 Q1246.4,19.6 1240.5,14.3" stroke="#243524" stroke-opacity="0.15" stroke-width="2.1" fill="none"/><path d="M573.0,40.2 Q574.0,38.3 574.2,36.3" stroke="#243524" stroke-opacity="0.17" stroke-width="2.0" fill="none"/><path d="M317.7,4.2 Q318.1,2.2 315.5,0.2" stroke="#56705a" stroke-opacity="0.14" stroke-width="2.0" fill="none"/><path d="M1096.2,7.7 Q1092.8,3.5 1088.5,-0.7" stroke="#2b3a2e" stroke-opacity="0.21" stroke-width="1.0" fill="none"/><path d="M889.8,24.9 Q892.7,20.0 892.1,15.1" stroke="#2e4530" stroke-opacity="0.30" stroke-width="1.4" fill="none"/><path d="M851.8,15.5 Q859.5,7.6 864.2,-0.4" stroke="#2b3a2e" stroke-opacity="0.31" stroke-width="1.5" fill="none"/><path d="M742.9,39.0 Q740.3,32.3 743.5,25.6" stroke="#4a6446" stroke-opacity="0.22" stroke-width="2.1" fill="none"/><path d="M506.8,19.2 Q507.6,14.0 503.8,8.9" stroke="#243524" stroke-opacity="0.35" stroke-width="1.1" fill="none"/><path d="M814.4,39.2 Q819.1,32.5 817.9,25.8" stroke="#3a5538" stroke-opacity="0.35" stroke-width="1.8" fill="none"/><path d="M935.0,7.9 Q931.6,0.1 933.1,-7.7" stroke="#2e4530" stroke-opacity="0.35" stroke-width="1.9" fill="none"/><path d="M211.9,40.9 Q209.2,39.1 210.3,37.3" stroke="#243524" stroke-opacity="0.11" stroke-width="1.4" fill="none"/><path d="M770.5,6.9 Q769.4,-0.5 763.6,-8.0" stroke="#243524" stroke-opacity="0.11" stroke-width="1.2" fill="none"/><path d="M853.3,42.0 Q851.6,36.5 847.6,30.9" stroke="#243524" stroke-opacity="0.34" stroke-width="0.9" fill="none"/><path d="M540.8,38.8 Q539.5,36.7 541.7,34.6" stroke="#56705a" stroke-opacity="0.38" stroke-width="1.7" fill="none"/><path d="M327.9,3.1 Q327.5,0.3 330.0,-2.4" stroke="#243524" stroke-opacity="0.37" stroke-width="1.4" fill="none"/><path d="M710.8,37.2 Q710.1,34.2 712.6,31.3" stroke="#243524" stroke-opacity="0.15" stroke-width="1.7" fill="none"/><path d="M1353.3,28.8 Q1357.1,18.9 1356.2,9.1" stroke="#3a5538" stroke-opacity="0.37" stroke-width="1.1" fill="none"/><path d="M386.8,29.0 Q385.4,24.2 379.1,19.4" stroke="#2b3a2e" stroke-opacity="0.12" stroke-width="0.8" fill="none"/><path d="M1004.2,18.8 Q999.2,12.7 996.9,6.6" stroke="#3a5538" stroke-opacity="0.17" stroke-width="1.6" fill="none"/><path d="M319.0,42.5 Q321.5,40.2 318.8,37.9" stroke="#2b3a2e" stroke-opacity="0.21" stroke-width="1.5" fill="none"/><path d="M308.0,28.1 Q309.3,23.0 310.6,17.9" stroke="#2e4530" stroke-opacity="0.24" stroke-width="2.0" fill="none"/><path d="M1334.8,26.5 Q1336.1,22.4 1334.0,18.3" stroke="#243524" stroke-opacity="0.32" stroke-width="1.1" fill="none"/><path d="M837.4,25.4 Q830.3,20.6 828.6,15.8" stroke="#2b3a2e" stroke-opacity="0.37" stroke-width="1.4" fill="none"/><path d="M1041.4,34.9 Q1046.1,28.7 1046.0,22.6" stroke="#2e4530" stroke-opacity="0.12" stroke-width="1.6" fill="none"/><path d="M930.0,11.0 Q931.0,7.8 928.0,4.7" stroke="#2e4530" stroke-opacity="0.29" stroke-width="1.8" fill="none"/><path d="M853.2,22.4 Q853.0,17.5 848.9,12.5" stroke="#4a6446" stroke-opacity="0.29" stroke-width="1.9" fill="none"/><path d="M104.7,16.3 Q108.9,13.4 110.1,10.5" stroke="#2e4530" stroke-opacity="0.14" stroke-width="1.6" fill="none"/><path d="M230.3,22.9 Q220.4,15.3 214.8,7.7" stroke="#4a6446" stroke-opacity="0.35" stroke-width="1.4" fill="none"/><path d="M510.3,4.2 Q510.7,2.6 513.6,1.0" stroke="#56705a" stroke-opacity="0.27" stroke-width="1.0" fill="none"/><path d="M147.3,14.0 Q153.3,5.8 160.4,-2.4" stroke="#3a5538" stroke-opacity="0.11" stroke-width="1.7" fill="none"/><path d="M100.2,30.2 Q101.0,20.5 103.0,10.8" stroke="#3a5538" stroke-opacity="0.23" stroke-width="2.0" fill="none"/><path d="M652.5,10.0 Q649.9,5.6 647.5,1.1" stroke="#2b3a2e" stroke-opacity="0.33" stroke-width="1.4" fill="none"/><path d="M1016.7,20.8 Q1016.3,14.6 1019.3,8.3" stroke="#3a5538" stroke-opacity="0.34" stroke-width="1.3" fill="none"/><path d="M124.6,16.2 Q121.6,13.0 118.4,9.8" stroke="#3a5538" stroke-opacity="0.31" stroke-width="1.6" fill="none"/><path d="M1111.9,5.3 Q1111.2,3.0 1113.7,0.6" stroke="#243524" stroke-opacity="0.14" stroke-width="2.0" fill="none"/><path d="M204.1,36.2 Q209.0,31.1 210.6,26.0" stroke="#4a6446" stroke-opacity="0.19" stroke-width="1.5" fill="none"/><path d="M94.0,11.0 Q91.0,9.0 91.5,7.0" stroke="#2b3a2e" stroke-opacity="0.14" stroke-width="1.4" fill="none"/><path d="M819.4,22.7 Q815.3,16.1 815.3,9.5" stroke="#4a6446" stroke-opacity="0.29" stroke-width="1.1" fill="none"/><path d="M479.9,18.0 Q482.2,13.5 486.0,8.9" stroke="#3a5538" stroke-opacity="0.13" stroke-width="1.7" fill="none"/><path d="M240.2,32.4 Q236.8,27.9 231.3,23.4" stroke="#56705a" stroke-opacity="0.18" stroke-width="2.1" fill="none"/><path d="M370.1,29.0 Q374.6,20.2 381.9,11.4" stroke="#3a5538" stroke-opacity="0.32" stroke-width="1.9" fill="none"/><path d="M205.1,21.6 Q199.6,11.8 198.1,2.0" stroke="#56705a" stroke-opacity="0.18" stroke-width="1.4" fill="none"/><path d="M813.6,28.9 Q812.9,25.6 808.5,22.3" stroke="#243524" stroke-opacity="0.35" stroke-width="1.5" fill="none"/><path d="M440.0,14.0 Q443.5,5.8 452.3,-2.4" stroke="#2e4530" stroke-opacity="0.20" stroke-width="1.4" fill="none"/><path d="M93.5,25.6 Q89.0,19.6 90.1,13.6" stroke="#243524" stroke-opacity="0.12" stroke-width="1.3" fill="none"/><path d="M639.0,35.2 Q644.0,25.5 643.5,15.8" stroke="#4a6446" stroke-opacity="0.27" stroke-width="1.3" fill="none"/><path d="M986.4,33.4 Q985.3,25.9 989.3,18.4" stroke="#4a6446" stroke-opacity="0.27" stroke-width="0.9" fill="none"/><path d="M794.3,41.6 Q795.7,36.8 799.4,31.9" stroke="#56705a" stroke-opacity="0.24" stroke-width="1.3" fill="none"/><path d="M329.5,29.6 Q323.6,26.7 323.6,23.8" stroke="#2b3a2e" stroke-opacity="0.37" stroke-width="1.6" fill="none"/><path d="M135.3,38.1 Q141.4,30.8 142.8,23.5" stroke="#243524" stroke-opacity="0.20" stroke-width="1.2" fill="none"/><path d="M1064.2,24.7 Q1062.4,19.7 1060.6,14.6" stroke="#56705a" stroke-opacity="0.29" stroke-width="1.7" fill="none"/><path d="M620.1,39.5 Q627.3,32.4 629.9,25.3" stroke="#2e4530" stroke-opacity="0.33" stroke-width="1.2" fill="none"/><path d="M1162.9,27.1 Q1162.8,21.4 1162.6,15.7" stroke="#243524" stroke-opacity="0.17" stroke-width="1.9" fill="none"/><path d="M671.6,11.6 Q667.5,3.5 667.0,-4.7" stroke="#243524" stroke-opacity="0.34" stroke-width="1.6" fill="none"/><path d="M221.5,27.9 Q220.4,25.0 223.8,22.1" stroke="#243524" stroke-opacity="0.32" stroke-width="1.3" fill="none"/><path d="M1145.9,8.8 Q1144.9,6.7 1146.5,4.5" stroke="#3a5538" stroke-opacity="0.18" stroke-width="1.2" fill="none"/><path d="M1139.8,29.5 Q1136.3,26.8 1136.4,24.0" stroke="#2e4530" stroke-opacity="0.34" stroke-width="1.3" fill="none"/><path d="M921.9,18.0 Q924.4,9.3 932.2,0.5" stroke="#4a6446" stroke-opacity="0.15" stroke-width="1.4" fill="none"/><path d="M382.9,18.1 Q383.6,14.9 383.7,11.6" stroke="#56705a" stroke-opacity="0.29" stroke-width="1.9" fill="none"/><path d="M251.5,5.5 Q245.4,-4.1 243.4,-13.7" stroke="#4a6446" stroke-opacity="0.22" stroke-width="2.0" fill="none"/><path d="M462.6,12.5 Q460.2,7.1 459.4,1.7" stroke="#2e4530" stroke-opacity="0.24" stroke-width="1.2" fill="none"/><path d="M87.7,38.5 Q82.6,34.8 81.7,31.0" stroke="#3a5538" stroke-opacity="0.19" stroke-width="1.9" fill="none"/><path d="M958.4,10.0 Q964.8,3.5 965.9,-3.1" stroke="#243524" stroke-opacity="0.18" stroke-width="2.0" fill="none"/><path d="M301.1,8.1 Q299.5,5.7 297.2,3.3" stroke="#243524" stroke-opacity="0.11" stroke-width="0.9" fill="none"/><path d="M797.5,3.7 Q801.5,-1.1 801.9,-5.9" stroke="#243524" stroke-opacity="0.33" stroke-width="1.8" fill="none"/><path d="M683.6,35.8 Q689.7,29.4 696.1,23.1" stroke="#2e4530" stroke-opacity="0.36" stroke-width="2.0" fill="none"/><path d="M699.4,27.2 Q697.5,25.4 697.1,23.7" stroke="#243524" stroke-opacity="0.21" stroke-width="1.7" fill="none"/><path d="M1388.0,27.8 Q1383.8,22.9 1384.4,18.1" stroke="#56705a" stroke-opacity="0.19" stroke-width="1.3" fill="none"/><path d="M1269.7,32.2 Q1269.6,25.6 1273.6,19.0" stroke="#3a5538" stroke-opacity="0.20" stroke-width="1.3" fill="none"/><path d="M312.2,17.8 Q312.2,15.8 309.2,13.9" stroke="#2b3a2e" stroke-opacity="0.34" stroke-width="0.8" fill="none"/><path d="M298.9,25.7 Q295.1,18.8 294.8,11.9" stroke="#4a6446" stroke-opacity="0.37" stroke-width="1.4" fill="none"/><path d="M1208.8,12.5 Q1215.7,6.4 1219.4,0.3" stroke="#243524" stroke-opacity="0.35" stroke-width="1.5" fill="none"/><path d="M1134.2,3.3 Q1133.1,-4.0 1130.5,-11.3" stroke="#4a6446" stroke-opacity="0.34" stroke-width="1.5" fill="none"/><path d="M972.0,36.2 Q973.4,28.0 970.7,19.8" stroke="#56705a" stroke-opacity="0.23" stroke-width="1.5" fill="none"/><path d="M642.8,2.8 Q643.8,-7.5 643.7,-17.8" stroke="#4a6446" stroke-opacity="0.23" stroke-width="1.6" fill="none"/><path d="M802.4,32.0 Q806.4,27.5 805.9,23.0" stroke="#2b3a2e" stroke-opacity="0.21" stroke-width="1.0" fill="none"/><path d="M400.8,28.3 Q409.0,19.2 411.3,10.2" stroke="#2e4530" stroke-opacity="0.24" stroke-width="0.9" fill="none"/><path d="M429.2,20.1 Q435.8,14.4 436.8,8.7" stroke="#3a5538" stroke-opacity="0.24" stroke-width="1.1" fill="none"/><path d="M183.6,32.8 Q179.0,25.1 171.1,17.5" stroke="#4a6446" stroke-opacity="0.34" stroke-width="1.6" fill="none"/><path d="M259.8,5.2 Q257.0,3.0 258.7,0.7" stroke="#3a5538" stroke-opacity="0.33" stroke-width="1.1" fill="none"/><path d="M665.3,26.9 Q659.7,19.1 652.5,11.2" stroke="#56705a" stroke-opacity="0.16" stroke-width="2.0" fill="none"/><path d="M1245.7,29.1 Q1243.7,24.9 1237.5,20.7" stroke="#243524" stroke-opacity="0.30" stroke-width="2.1" fill="none"/><path d="M1127.0,9.8 Q1120.3,2.1 1118.0,-5.6" stroke="#2b3a2e" stroke-opacity="0.23" stroke-width="1.0" fill="none"/><path d="M612.1,42.8 Q616.8,35.1 618.2,27.5" stroke="#243524" stroke-opacity="0.34" stroke-width="1.1" fill="none"/><path d="M122.3,16.7 Q122.4,9.7 117.1,2.6" stroke="#3a5538" stroke-opacity="0.24" stroke-width="1.3" fill="none"/><path d="M1204.6,25.3 Q1204.6,21.6 1209.7,17.8" stroke="#243524" stroke-opacity="0.37" stroke-width="1.7" fill="none"/><path d="M386.3,9.3 Q383.3,4.2 381.3,-1.0" stroke="#56705a" stroke-opacity="0.12" stroke-width="1.2" fill="none"/><path d="M754.8,13.3 Q756.3,5.4 759.3,-2.6" stroke="#3a5538" stroke-opacity="0.10" stroke-width="1.6" fill="none"/><path d="M476.5,38.0 Q473.6,30.8 465.9,23.6" stroke="#56705a" stroke-opacity="0.13" stroke-width="0.9" fill="none"/><path d="M622.5,31.4 Q618.4,23.6 618.5,15.8" stroke="#2e4530" stroke-opacity="0.29" stroke-width="0.9" fill="none"/><path d="M291.8,21.1 Q289.6,15.1 281.6,9.1" stroke="#3a5538" stroke-opacity="0.37" stroke-width="1.4" fill="none"/><path d="M113.9,17.9 Q109.7,10.7 107.0,3.6" stroke="#2b3a2e" stroke-opacity="0.16" stroke-width="1.0" fill="none"/><path d="M675.6,4.5 Q678.9,1.1 677.3,-2.3" stroke="#2b3a2e" stroke-opacity="0.32" stroke-width="1.7" fill="none"/><path d="M266.7,16.4 Q272.4,8.6 277.6,0.8" stroke="#2e4530" stroke-opacity="0.20" stroke-width="1.5" fill="none"/><path d="M190.4,13.7 Q187.7,8.2 183.0,2.8" stroke="#2b3a2e" stroke-opacity="0.17" stroke-width="1.5" fill="none"/><path d="M528.1,11.3 Q525.7,4.0 527.3,-3.3" stroke="#3a5538" stroke-opacity="0.26" stroke-width="0.9" fill="none"/><path d="M235.7,35.0 Q231.6,29.5 228.6,24.0" stroke="#2b3a2e" stroke-opacity="0.25" stroke-width="1.7" fill="none"/><path d="M707.7,7.5 Q709.9,-1.3 714.6,-10.0" stroke="#56705a" stroke-opacity="0.21" stroke-width="1.7" fill="none"/><path d="M693.3,39.3 Q694.9,33.0 698.9,26.7" stroke="#2e4530" stroke-opacity="0.21" stroke-width="1.1" fill="none"/><path d="M918.9,18.6 Q914.7,9.7 909.7,0.7" stroke="#2b3a2e" stroke-opacity="0.37" stroke-width="1.5" fill="none"/><path d="M512.5,11.8 Q512.8,6.6 511.3,1.3" stroke="#4a6446" stroke-opacity="0.21" stroke-width="1.3" fill="none"/><path d="M200.0,23.3 Q197.6,19.9 198.7,16.5" stroke="#243524" stroke-opacity="0.21" stroke-width="0.9" fill="none"/><path d="M636.7,21.3 Q637.6,17.6 639.9,13.8" stroke="#4a6446" stroke-opacity="0.31" stroke-width="1.6" fill="none"/><path d="M179.6,16.0 Q181.3,12.9 185.3,9.8" stroke="#56705a" stroke-opacity="0.20" stroke-width="1.7" fill="none"/><path d="M1009.1,21.9 Q1010.0,15.8 1014.4,9.7" stroke="#2e4530" stroke-opacity="0.34" stroke-width="1.6" fill="none"/><path d="M1108.0,4.8 Q1105.7,-0.9 1099.4,-6.7" stroke="#4a6446" stroke-opacity="0.38" stroke-width="1.3" fill="none"/><path d="M543.3,34.1 Q539.0,28.2 533.2,22.3" stroke="#4a6446" stroke-opacity="0.11" stroke-width="1.6" fill="none"/><path d="M716.2,42.3 Q711.3,34.3 703.3,26.4" stroke="#2e4530" stroke-opacity="0.22" stroke-width="1.3" fill="none"/><path d="M766.4,6.0 Q771.0,1.4 770.0,-3.1" stroke="#2e4530" stroke-opacity="0.33" stroke-width="1.3" fill="none"/><path d="M1203.5,30.0 Q1197.9,23.6 1194.4,17.2" stroke="#3a5538" stroke-opacity="0.13" stroke-width="1.0" fill="none"/><path d="M469.1,38.7 Q464.3,29.5 459.6,20.2" stroke="#56705a" stroke-opacity="0.36" stroke-width="1.8" fill="none"/><path d="M664.3,5.4 Q656.9,-2.1 655.4,-9.5" stroke="#2b3a2e" stroke-opacity="0.19" stroke-width="2.0" fill="none"/><path d="M1115.2,34.7 Q1113.7,26.6 1114.0,18.5" stroke="#2b3a2e" stroke-opacity="0.34" stroke-width="1.6" fill="none"/><path d="M822.6,14.8 Q818.6,7.2 815.7,-0.3" stroke="#243524" stroke-opacity="0.20" stroke-width="0.9" fill="none"/><path d="M436.2,10.0 Q432.2,2.2 423.2,-5.7" stroke="#3a5538" stroke-opacity="0.37" stroke-width="1.4" fill="none"/><path d="M833.4,32.6 Q833.7,29.8 831.6,27.1" stroke="#3a5538" stroke-opacity="0.11" stroke-width="1.6" fill="none"/><path d="M944.2,7.4 Q950.2,-2.3 952.9,-11.9" stroke="#243524" stroke-opacity="0.13" stroke-width="1.1" fill="none"/><path d="M341.1,26.6 Q345.4,23.8 343.7,21.0" stroke="#2b3a2e" stroke-opacity="0.15" stroke-width="1.3" fill="none"/><path d="M555.5,34.1 Q554.7,25.0 558.7,15.8" stroke="#56705a" stroke-opacity="0.37" stroke-width="1.3" fill="none"/><path d="M295.3,29.0 Q294.4,24.5 296.2,19.9" stroke="#243524" stroke-opacity="0.24" stroke-width="1.2" fill="none"/><path d="M475.2,37.7 Q477.4,34.8 479.0,31.9" stroke="#3a5538" stroke-opacity="0.27" stroke-width="1.8" fill="none"/><path d="M915.2,39.6 Q913.5,31.3 908.4,23.0" stroke="#2e4530" stroke-opacity="0.22" stroke-width="1.7" fill="none"/><path d="M928.8,29.8 Q927.0,25.2 924.3,20.6" stroke="#56705a" stroke-opacity="0.24" stroke-width="1.3" fill="none"/><path d="M397.5,5.6 Q397.1,-4.5 402.7,-14.6" stroke="#2e4530" stroke-opacity="0.18" stroke-width="2.1" fill="none"/><path d="M629.0,6.9 Q632.2,-3.3 634.5,-13.4" stroke="#3a5538" stroke-opacity="0.11" stroke-width="2.2" fill="none"/><path d="M132.2,8.8 Q132.9,2.2 129.0,-4.4" stroke="#4a6446" stroke-opacity="0.36" stroke-width="0.9" fill="none"/><path d="M238.8,30.1 Q242.7,28.4 241.8,26.7" stroke="#2b3a2e" stroke-opacity="0.12" stroke-width="1.2" fill="none"/><path d="M375.6,7.3 Q382.1,1.7 383.3,-4.0" stroke="#3a5538" stroke-opacity="0.34" stroke-width="0.8" fill="none"/><path d="M838.3,29.8 Q839.8,22.4 841.1,15.0" stroke="#3a5538" stroke-opacity="0.12" stroke-width="2.1" fill="none"/><path d="M41.2,35.8 Q42.5,27.7 41.7,19.5" stroke="#2b3a2e" stroke-opacity="0.31" stroke-width="0.9" fill="none"/><path d="M635.5,10.1 Q632.3,5.0 630.9,-0.0" stroke="#243524" stroke-opacity="0.19" stroke-width="0.8" fill="none"/><path d="M1318.6,25.6 Q1317.7,19.1 1315.1,12.6" stroke="#56705a" stroke-opacity="0.20" stroke-width="2.1" fill="none"/><path d="M709.1,9.9 Q707.6,4.4 703.9,-1.1" stroke="#243524" stroke-opacity="0.15" stroke-width="1.7" fill="none"/><path d="M1019.5,25.1 Q1017.8,23.0 1018.2,20.9" stroke="#2e4530" stroke-opacity="0.18" stroke-width="1.8" fill="none"/><path d="M924.6,33.1 Q920.6,29.3 921.0,25.5" stroke="#4a6446" stroke-opacity="0.26" stroke-width="1.7" fill="none"/><path d="M119.7,36.1 Q117.3,25.2 116.8,14.3" stroke="#56705a" stroke-opacity="0.32" stroke-width="1.9" fill="none"/><path d="M649.7,25.9 Q646.5,17.3 649.0,8.6" stroke="#2e4530" stroke-opacity="0.11" stroke-width="2.1" fill="none"/><path d="M727.3,3.8 Q726.4,0.4 727.3,-3.0" stroke="#3a5538" stroke-opacity="0.36" stroke-width="2.1" fill="none"/><path d="M242.7,40.7 Q242.7,37.6 238.6,34.5" stroke="#56705a" stroke-opacity="0.17" stroke-width="2.0" fill="none"/><path d="M1144.1,31.5 Q1139.9,22.8 1133.1,14.1" stroke="#2e4530" stroke-opacity="0.38" stroke-width="1.7" fill="none"/><path d="M210.8,25.5 Q212.8,21.0 211.1,16.5" stroke="#2b3a2e" stroke-opacity="0.22" stroke-width="1.2" fill="none"/><path d="M157.7,1.7 Q162.8,-5.8 171.9,-13.2" stroke="#56705a" stroke-opacity="0.24" stroke-width="1.3" fill="none"/><path d="M973.2,34.3 Q972.4,23.6 971.8,12.8" stroke="#2b3a2e" stroke-opacity="0.38" stroke-width="0.9" fill="none"/><path d="M252.3,29.5 Q251.1,23.6 253.9,17.7" stroke="#2b3a2e" stroke-opacity="0.11" stroke-width="1.0" fill="none"/><path d="M1260.7,1.8 Q1259.9,-1.7 1264.4,-5.2" stroke="#4a6446" stroke-opacity="0.27" stroke-width="0.8" fill="none"/><path d="M585.5,41.8 Q588.0,37.6 590.8,33.3" stroke="#2b3a2e" stroke-opacity="0.20" stroke-width="1.7" fill="none"/><path d="M542.9,38.1 Q540.5,31.0 541.0,23.8" stroke="#2b3a2e" stroke-opacity="0.26" stroke-width="2.1" fill="none"/><path d="M841.4,27.1 Q846.9,17.4 846.5,7.7" stroke="#4a6446" stroke-opacity="0.24" stroke-width="1.2" fill="none"/><path d="M292.7,10.9 Q286.5,4.7 285.1,-1.5" stroke="#243524" stroke-opacity="0.18" stroke-width="1.8" fill="none"/><path d="M594.2,21.9 Q595.5,11.6 594.7,1.3" stroke="#4a6446" stroke-opacity="0.29" stroke-width="1.4" fill="none"/><path d="M852.1,24.9 Q852.3,22.5 850.7,20.1" stroke="#56705a" stroke-opacity="0.23" stroke-width="2.2" fill="none"/><path d="M479.6,4.6 Q474.3,-3.8 472.0,-12.2" stroke="#4a6446" stroke-opacity="0.32" stroke-width="2.1" fill="none"/><path d="M862.8,24.3 Q861.5,13.8 862.4,3.3" stroke="#4a6446" stroke-opacity="0.14" stroke-width="1.7" fill="none"/><path d="M861.0,28.2 Q862.8,20.0 859.6,11.8" stroke="#243524" stroke-opacity="0.37" stroke-width="1.8" fill="none"/><path d="M301.7,13.7 Q305.3,10.5 306.9,7.2" stroke="#2e4530" stroke-opacity="0.37" stroke-width="1.5" fill="none"/><path d="M1102.7,17.8 Q1107.0,9.1 1114.2,0.4" stroke="#56705a" stroke-opacity="0.14" stroke-width="1.2" fill="none"/><path d="M667.6,26.6 Q662.0,18.3 660.9,10.0" stroke="#56705a" stroke-opacity="0.27" stroke-width="1.8" fill="none"/><path d="M100.3,33.3 Q105.3,25.8 110.5,18.3" stroke="#2b3a2e" stroke-opacity="0.17" stroke-width="2.1" fill="none"/><path d="M385.2,2.6 Q385.9,-7.3 385.2,-17.3" stroke="#3a5538" stroke-opacity="0.16" stroke-width="1.0" fill="none"/><path d="M262.4,20.6 Q259.5,14.6 251.2,8.7" stroke="#243524" stroke-opacity="0.29" stroke-width="1.3" fill="none"/><path d="M497.4,27.0 Q500.2,17.4 506.5,7.7" stroke="#243524" stroke-opacity="0.13" stroke-width="2.2" fill="none"/><path d="M112.8,30.6 Q111.9,28.4 114.7,26.1" stroke="#2b3a2e" stroke-opacity="0.17" stroke-width="1.6" fill="none"/><path d="M413.1,3.9 Q414.7,1.5 412.0,-0.9" stroke="#2b3a2e" stroke-opacity="0.34" stroke-width="1.5" fill="none"/><path d="M368.9,34.2 Q363.6,26.2 356.1,18.1" stroke="#4a6446" stroke-opacity="0.22" stroke-width="1.9" fill="none"/><path d="M950.3,40.4 Q943.4,31.1 942.4,21.7" stroke="#2b3a2e" stroke-opacity="0.22" stroke-width="0.9" fill="none"/><path d="M311.4,26.8 Q316.5,24.2 316.4,21.5" stroke="#56705a" stroke-opacity="0.26" stroke-width="1.2" fill="none"/><path d="M1365.0,3.4 Q1365.2,1.6 1368.5,-0.3" stroke="#4a6446" stroke-opacity="0.15" stroke-width="2.1" fill="none"/><path d="M942.3,20.5 Q948.2,14.3 950.6,8.0" stroke="#4a6446" stroke-opacity="0.24" stroke-width="1.1" fill="none"/><path d="M1395.1,37.3 Q1388.9,32.8 1388.1,28.3" stroke="#2b3a2e" stroke-opacity="0.14" stroke-width="1.5" fill="none"/><path d="M28.8,17.4 Q25.1,12.4 21.5,7.4" stroke="#3a5538" stroke-opacity="0.34" stroke-width="1.6" fill="none"/><path d="M540.3,6.0 Q537.7,1.8 536.2,-2.5" stroke="#56705a" stroke-opacity="0.24" stroke-width="1.4" fill="none"/><path d="M767.6,19.3 Q768.1,13.5 764.1,7.7" stroke="#2b3a2e" stroke-opacity="0.11" stroke-width="1.7" fill="none"/><path d="M152.4,27.3 Q157.1,20.5 156.0,13.8" stroke="#56705a" stroke-opacity="0.35" stroke-width="1.9" fill="none"/><path d="M687.3,32.1 Q689.9,27.7 690.5,23.4" stroke="#2b3a2e" stroke-opacity="0.28" stroke-width="1.4" fill="none"/><path d="M1118.6,33.4 Q1122.7,28.4 1128.2,23.5" stroke="#243524" stroke-opacity="0.26" stroke-width="2.0" fill="none"/><path d="M589.8,4.8 Q590.9,0.3 595.7,-4.3" stroke="#243524" stroke-opacity="0.38" stroke-width="2.1" fill="none"/><path d="M102.3,35.5 Q102.0,26.1 99.0,16.7" stroke="#2b3a2e" stroke-opacity="0.37" stroke-width="1.3" fill="none"/><path d="M624.4,11.8 Q621.0,3.7 622.0,-4.3" stroke="#3a5538" stroke-opacity="0.38" stroke-width="1.9" fill="none"/><path d="M556.0,40.9 Q555.4,36.5 557.0,32.0" stroke="#2b3a2e" stroke-opacity="0.37" stroke-width="2.1" fill="none"/><path d="M1358.3,21.5 Q1365.9,14.0 1372.1,6.6" stroke="#56705a" stroke-opacity="0.14" stroke-width="1.4" fill="none"/><path d="M907.1,24.9 Q903.4,14.6 902.1,4.3" stroke="#2e4530" stroke-opacity="0.12" stroke-width="1.8" fill="none"/><path d="M650.9,16.1 Q645.6,11.1 641.4,6.2" stroke="#243524" stroke-opacity="0.21" stroke-width="1.9" fill="none"/><path d="M1072.4,26.7 Q1066.9,23.9 1067.0,21.1" stroke="#2e4530" stroke-opacity="0.28" stroke-width="1.1" fill="none"/><path d="M35.8,25.5 Q34.4,17.9 30.6,10.4" stroke="#243524" stroke-opacity="0.16" stroke-width="1.8" fill="none"/><path d="M577.0,10.2 Q576.9,4.2 573.4,-1.8" stroke="#4a6446" stroke-opacity="0.36" stroke-width="1.2" fill="none"/><path d="M865.0,24.0 Q861.9,16.9 860.8,9.8" stroke="#56705a" stroke-opacity="0.37" stroke-width="1.4" fill="none"/><path d="M738.2,39.4 Q733.2,32.4 730.0,25.4" stroke="#243524" stroke-opacity="0.27" stroke-width="1.9" fill="none"/><path d="M545.3,21.1 Q546.4,18.6 545.2,16.1" stroke="#56705a" stroke-opacity="0.11" stroke-width="0.9" fill="none"/><path d="M998.4,2.9 Q1001.3,-0.8 1005.6,-4.5" stroke="#2b3a2e" stroke-opacity="0.25" stroke-width="1.9" fill="none"/><path d="M715.0,26.8 Q709.2,21.6 705.6,16.4" stroke="#3a5538" stroke-opacity="0.29" stroke-width="1.5" fill="none"/><path d="M494.8,15.9 Q489.9,11.1 490.7,6.3" stroke="#243524" stroke-opacity="0.18" stroke-width="1.3" fill="none"/><path d="M713.0,8.3 Q709.8,5.5 708.8,2.7" stroke="#56705a" stroke-opacity="0.24" stroke-width="2.0" fill="none"/><path d="M1128.9,22.0 Q1127.6,16.4 1126.9,10.8" stroke="#2b3a2e" stroke-opacity="0.17" stroke-width="1.6" fill="none"/><path d="M507.1,28.2 Q509.1,25.9 506.7,23.5" stroke="#2b3a2e" stroke-opacity="0.15" stroke-width="2.0" fill="none"/><path d="M1274.7,17.7 Q1280.7,12.0 1282.6,6.2" stroke="#56705a" stroke-opacity="0.36" stroke-width="0.9" fill="none"/><path d="M422.7,23.8 Q423.7,17.5 418.8,11.2" stroke="#243524" stroke-opacity="0.24" stroke-width="0.9" fill="none"/><path d="M1700.5,7.2 Q1704.7,1.9 1702.9,-3.5" stroke="#2e4530" stroke-opacity="0.23" stroke-width="2.1" fill="none"/><path d="M1012.7,3.3 Q1008.4,-3.1 1002.0,-9.6" stroke="#56705a" stroke-opacity="0.35" stroke-width="1.1" fill="none"/><path d="M765.2,15.1 Q768.0,8.1 768.2,1.1" stroke="#2e4530" stroke-opacity="0.10" stroke-width="2.1" fill="none"/><path d="M1034.1,14.1 Q1037.0,11.2 1038.3,8.2" stroke="#2b3a2e" stroke-opacity="0.13" stroke-width="1.2" fill="none"/><path d="M1298.3,2.4 Q1294.7,-5.3 1288.3,-13.0" stroke="#3a5538" stroke-opacity="0.28" stroke-width="2.0" fill="none"/><path d="M1104.2,34.8 Q1108.7,25.4 1111.8,16.1" stroke="#243524" stroke-opacity="0.28" stroke-width="2.1" fill="none"/><path d="M74.9,17.1 Q70.7,8.4 67.6,-0.3" stroke="#56705a" stroke-opacity="0.28" stroke-width="1.7" fill="none"/><path d="M463.0,4.5 Q466.4,0.4 465.6,-3.6" stroke="#4a6446" stroke-opacity="0.18" stroke-width="1.8" fill="none"/><path d="M1074.9,31.1 Q1068.4,26.2 1066.5,21.3" stroke="#4a6446" stroke-opacity="0.26" stroke-width="1.2" fill="none"/><path d="M200.1,26.6 Q199.5,19.7 197.7,12.8" stroke="#2b3a2e" stroke-opacity="0.28" stroke-width="1.1" fill="none"/><path d="M1102.9,19.8 Q1095.9,15.1 1094.4,10.4" stroke="#2b3a2e" stroke-opacity="0.34" stroke-width="1.1" fill="none"/><path d="M800.9,27.0 Q803.5,19.1 807.9,11.1" stroke="#56705a" stroke-opacity="0.35" stroke-width="0.9" fill="none"/><path d="M473.8,38.6 Q472.1,34.6 475.8,30.5" stroke="#3a5538" stroke-opacity="0.12" stroke-width="2.0" fill="none"/><path d="M1029.9,2.6 Q1028.5,-0.3 1027.9,-3.1" stroke="#3a5538" stroke-opacity="0.23" stroke-width="0.9" fill="none"/><path d="M894.3,35.7 Q893.1,26.7 891.7,17.7" stroke="#4a6446" stroke-opacity="0.26" stroke-width="1.3" fill="none"/><path d="M812.0,26.8 Q812.8,23.2 810.1,19.6" stroke="#2e4530" stroke-opacity="0.22" stroke-width="2.0" fill="none"/><path d="M496.0,28.9 Q495.2,25.9 499.1,22.8" stroke="#243524" stroke-opacity="0.36" stroke-width="1.7" fill="none"/><path d="M451.6,11.3 Q443.2,2.5 438.5,-6.3" stroke="#56705a" stroke-opacity="0.36" stroke-width="1.4" fill="none"/><path d="M192.9,32.1 Q191.2,22.5 188.6,13.0" stroke="#2b3a2e" stroke-opacity="0.29" stroke-width="2.0" fill="none"/><path d="M400.9,12.3 Q396.0,5.7 395.5,-0.9" stroke="#4a6446" stroke-opacity="0.26" stroke-width="1.9" fill="none"/><path d="M106.4,12.7 Q108.2,7.9 108.1,3.1" stroke="#3a5538" stroke-opacity="0.18" stroke-width="2.0" fill="none"/><path d="M866.5,23.8 Q862.7,19.5 864.9,15.2" stroke="#2b3a2e" stroke-opacity="0.20" stroke-width="0.8" fill="none"/><path d="M471.2,27.8 Q470.1,25.3 472.9,22.9" stroke="#3a5538" stroke-opacity="0.32" stroke-width="1.4" fill="none"/><path d="M811.8,12.3 Q808.7,5.8 806.1,-0.7" stroke="#56705a" stroke-opacity="0.31" stroke-width="1.8" fill="none"/><path d="M260.2,41.6 Q260.4,37.8 261.6,34.1" stroke="#3a5538" stroke-opacity="0.29" stroke-width="2.0" fill="none"/><path d="M933.8,29.3 Q932.2,24.2 936.2,19.1" stroke="#243524" stroke-opacity="0.13" stroke-width="1.4" fill="none"/><path d="M937.9,16.6 Q936.1,13.7 939.2,10.8" stroke="#2e4530" stroke-opacity="0.23" stroke-width="1.6" fill="none"/><path d="M596.2,30.4 Q603.6,22.8 608.3,15.1" stroke="#243524" stroke-opacity="0.29" stroke-width="2.0" fill="none"/><path d="M948.6,37.2 Q952.9,31.4 959.8,25.5" stroke="#243524" stroke-opacity="0.22" stroke-width="1.4" fill="none"/><path d="M361.9,36.8 Q363.1,31.8 369.6,26.7" stroke="#3a5538" stroke-opacity="0.24" stroke-width="1.0" fill="none"/><path d="M1039.1,42.6 Q1035.6,34.0 1033.1,25.4" stroke="#4a6446" stroke-opacity="0.27" stroke-width="1.2" fill="none"/><path d="M1463.4,5.9 Q1463.5,-2.4 1464.3,-10.7" stroke="#56705a" stroke-opacity="0.37" stroke-width="1.6" fill="none"/><path d="M168.0,7.2 Q163.9,-0.3 163.3,-7.8" stroke="#4a6446" stroke-opacity="0.35" stroke-width="0.8" fill="none"/><path d="M226.5,38.4 Q219.9,31.7 215.2,25.0" stroke="#56705a" stroke-opacity="0.14" stroke-width="1.1" fill="none"/><path d="M83.2,18.8 Q82.9,16.2 83.7,13.5" stroke="#56705a" stroke-opacity="0.19" stroke-width="2.1" fill="none"/><path d="M847.0,18.6 Q855.7,11.9 859.0,5.2" stroke="#4a6446" stroke-opacity="0.36" stroke-width="1.7" fill="none"/><path d="M548.5,38.9 Q544.4,32.2 536.2,25.4" stroke="#2b3a2e" stroke-opacity="0.17" stroke-width="1.5" fill="none"/><path d="M935.7,8.2 Q941.0,2.7 943.2,-2.8" stroke="#2b3a2e" stroke-opacity="0.31" stroke-width="1.3" fill="none"/><path d="M719.4,31.6 Q714.3,26.5 712.3,21.4" stroke="#2e4530" stroke-opacity="0.16" stroke-width="1.4" fill="none"/><path d="M339.7,10.5 Q337.4,3.6 333.9,-3.3" stroke="#2e4530" stroke-opacity="0.30" stroke-width="1.7" fill="none"/><path d="M696.3,16.7 Q694.9,11.2 693.9,5.6" stroke="#56705a" stroke-opacity="0.17" stroke-width="1.6" fill="none"/><path d="M459.4,7.5 Q459.6,3.1 462.0,-1.3" stroke="#2e4530" stroke-opacity="0.17" stroke-width="0.9" fill="none"/><path d="M518.3,5.9 Q517.5,2.7 519.7,-0.5" stroke="#56705a" stroke-opacity="0.12" stroke-width="1.9" fill="none"/><path d="M386.7,15.8 Q385.7,10.3 381.0,4.7" stroke="#243524" stroke-opacity="0.36" stroke-width="1.2" fill="none"/><path d="M821.2,24.9 Q818.6,15.9 821.1,6.9" stroke="#2e4530" stroke-opacity="0.13" stroke-width="1.9" fill="none"/><path d="M1032.4,20.0 Q1029.9,13.0 1028.2,5.9" stroke="#2e4530" stroke-opacity="0.24" stroke-width="1.2" fill="none"/><path d="M228.2,32.8 Q221.1,26.1 218.9,19.4" stroke="#243524" stroke-opacity="0.33" stroke-width="1.6" fill="none"/><path d="M166.5,18.2 Q167.7,15.8 171.4,13.4" stroke="#2b3a2e" stroke-opacity="0.18" stroke-width="0.9" fill="none"/><path d="M776.5,6.6 Q773.2,2.6 771.0,-1.3" stroke="#2b3a2e" stroke-opacity="0.25" stroke-width="1.5" fill="none"/><path d="M975.4,35.7 Q976.7,33.3 972.4,30.9" stroke="#2e4530" stroke-opacity="0.34" stroke-width="1.9" fill="none"/><path d="M194.9,8.1 Q198.5,1.1 197.9,-5.9" stroke="#2b3a2e" stroke-opacity="0.19" stroke-width="1.9" fill="none"/><path d="M159.4,3.9 Q159.3,-0.1 163.0,-4.1" stroke="#2b3a2e" stroke-opacity="0.31" stroke-width="1.3" fill="none"/><path d="M1120.1,2.7 Q1118.2,0.2 1119.9,-2.3" stroke="#2b3a2e" stroke-opacity="0.14" stroke-width="1.5" fill="none"/><path d="M995.8,42.5 Q995.0,33.1 992.2,23.8" stroke="#3a5538" stroke-opacity="0.23" stroke-width="1.4" fill="none"/><path d="M846.6,28.1 Q845.8,22.9 845.4,17.6" stroke="#2e4530" stroke-opacity="0.35" stroke-width="1.0" fill="none"/><path d="M603.6,28.2 Q604.3,20.6 610.8,12.9" stroke="#4a6446" stroke-opacity="0.37" stroke-width="1.9" fill="none"/><path d="M263.8,24.6 Q262.9,14.3 265.4,4.0" stroke="#4a6446" stroke-opacity="0.29" stroke-width="1.3" fill="none"/><path d="M140.0,5.8 Q133.4,-1.1 128.2,-8.0" stroke="#56705a" stroke-opacity="0.33" stroke-width="1.0" fill="none"/><path d="M180.2,33.1 Q180.9,29.3 183.1,25.5" stroke="#2e4530" stroke-opacity="0.16" stroke-width="1.5" fill="none"/><path d="M155.1,2.8 Q149.8,-2.2 147.3,-7.3" stroke="#2e4530" stroke-opacity="0.32" stroke-width="1.9" fill="none"/><path d="M293.0,9.4 Q285.2,1.8 282.5,-5.8" stroke="#243524" stroke-opacity="0.35" stroke-width="1.6" fill="none"/><path d="M546.1,18.5 Q538.6,11.6 533.5,4.8" stroke="#243524" stroke-opacity="0.18" stroke-width="1.4" fill="none"/><path d="M1403.2,11.3 Q1402.7,3.0 1398.8,-5.3" stroke="#3a5538" stroke-opacity="0.24" stroke-width="1.2" fill="none"/><path d="M463.0,39.9 Q460.6,33.2 460.1,26.5" stroke="#4a6446" stroke-opacity="0.29" stroke-width="1.5" fill="none"/><path d="M646.6,3.2 Q647.0,-1.3 643.7,-5.7" stroke="#2e4530" stroke-opacity="0.17" stroke-width="1.6" fill="none"/><path d="M1256.4,1.3 Q1254.6,-4.5 1249.4,-10.4" stroke="#4a6446" stroke-opacity="0.13" stroke-width="1.6" fill="none"/><path d="M844.5,32.6 Q848.8,26.7 850.4,20.9" stroke="#56705a" stroke-opacity="0.35" stroke-width="1.7" fill="none"/><path d="M790.2,25.3 Q795.5,19.5 796.8,13.6" stroke="#2e4530" stroke-opacity="0.33" stroke-width="1.6" fill="none"/><path d="M956.5,26.2 Q954.6,23.9 952.0,21.7" stroke="#2b3a2e" stroke-opacity="0.15" stroke-width="1.0" fill="none"/><path d="M1290.6,31.9 Q1295.8,28.0 1296.1,24.1" stroke="#2e4530" stroke-opacity="0.19" stroke-width="1.3" fill="none"/><path d="M790.3,25.7 Q784.2,19.2 779.9,12.8" stroke="#4a6446" stroke-opacity="0.23" stroke-width="0.9" fill="none"/><path d="M212.4,12.5 Q207.8,6.0 203.0,-0.6" stroke="#243524" stroke-opacity="0.21" stroke-width="1.5" fill="none"/><path d="M227.9,1.8 Q231.1,-5.5 237.3,-12.7" stroke="#2b3a2e" stroke-opacity="0.16" stroke-width="1.4" fill="none"/><path d="M1101.3,15.7 Q1100.7,5.2 1094.9,-5.2" stroke="#2e4530" stroke-opacity="0.14" stroke-width="2.2" fill="none"/><path d="M1127.1,6.0 Q1131.4,3.7 1130.2,1.5" stroke="#2b3a2e" stroke-opacity="0.13" stroke-width="2.2" fill="none"/><path d="M1226.9,32.4 Q1227.6,23.5 1227.1,14.6" stroke="#243524" stroke-opacity="0.37" stroke-width="1.8" fill="none"/><path d="M1270.1,11.8 Q1267.5,2.7 1259.5,-6.5" stroke="#56705a" stroke-opacity="0.37" stroke-width="2.1" fill="none"/><path d="M127.2,36.1 Q122.3,29.0 114.4,21.9" stroke="#2e4530" stroke-opacity="0.24" stroke-width="0.9" fill="none"/><path d="M1001.4,36.9 Q1001.1,33.3 999.2,29.6" stroke="#4a6446" stroke-opacity="0.20" stroke-width="0.9" fill="none"/><path d="M1374.0,9.6 Q1373.7,3.8 1377.5,-2.0" stroke="#2b3a2e" stroke-opacity="0.30" stroke-width="2.2" fill="none"/><path d="M234.9,35.4 Q232.1,29.3 226.8,23.3" stroke="#2e4530" stroke-opacity="0.29" stroke-width="1.0" fill="none"/><path d="M525.0,4.5 Q523.4,-3.0 521.3,-10.6" stroke="#2e4530" stroke-opacity="0.34" stroke-width="0.9" fill="none"/><path d="M799.2,4.1 Q801.4,-4.9 809.4,-13.8" stroke="#4a6446" stroke-opacity="0.23" stroke-width="1.7" fill="none"/><path d="M1093.0,26.7 Q1092.2,23.0 1085.5,19.3" stroke="#243524" stroke-opacity="0.27" stroke-width="1.6" fill="none"/><path d="M601.4,17.6 Q604.2,13.3 604.1,9.1" stroke="#2e4530" stroke-opacity="0.26" stroke-width="1.8" fill="none"/><path d="M157.0,16.0 Q157.6,13.6 157.9,11.3" stroke="#56705a" stroke-opacity="0.15" stroke-width="1.1" fill="none"/><path d="M836.2,12.2 Q834.5,6.9 827.5,1.7" stroke="#243524" stroke-opacity="0.35" stroke-width="1.9" fill="none"/><path d="M228.3,16.9 Q229.2,12.1 224.3,7.4" stroke="#2e4530" stroke-opacity="0.34" stroke-width="1.9" fill="none"/><path d="M270.2,27.2 Q264.7,21.0 262.0,14.8" stroke="#243524" stroke-opacity="0.24" stroke-width="2.2" fill="none"/><path d="M658.7,29.1 Q656.4,25.2 655.0,21.3" stroke="#243524" stroke-opacity="0.23" stroke-width="2.0" fill="none"/><path d="M358.2,31.1 Q353.4,21.2 353.7,11.4" stroke="#2b3a2e" stroke-opacity="0.26" stroke-width="0.9" fill="none"/><path d="M104.0,35.4 Q102.0,28.9 102.9,22.5" stroke="#2e4530" stroke-opacity="0.23" stroke-width="1.7" fill="none"/><path d="M301.9,31.2 Q295.1,23.3 291.1,15.4" stroke="#2b3a2e" stroke-opacity="0.25" stroke-width="1.2" fill="none"/><path d="M1320.3,9.0 Q1321.5,7.5 1323.0,6.0" stroke="#2b3a2e" stroke-opacity="0.24" stroke-width="2.1" fill="none"/><path d="M1208.5,17.4 Q1202.4,7.1 1200.6,-3.1" stroke="#2e4530" stroke-opacity="0.16" stroke-width="0.8" fill="none"/><path d="M845.2,16.5 Q839.8,6.4 839.0,-3.7" stroke="#3a5538" stroke-opacity="0.25" stroke-width="0.8" fill="none"/><path d="M1043.2,3.1 Q1041.6,-4.5 1036.3,-12.0" stroke="#56705a" stroke-opacity="0.34" stroke-width="1.1" fill="none"/><path d="M505.8,21.8 Q503.7,19.2 503.2,16.5" stroke="#4a6446" stroke-opacity="0.11" stroke-width="2.1" fill="none"/><path d="M114.7,2.8 Q109.7,-6.9 110.1,-16.5" stroke="#2e4530" stroke-opacity="0.34" stroke-width="2.1" fill="none"/><path d="M408.9,10.5 Q409.1,5.5 405.6,0.5" stroke="#3a5538" stroke-opacity="0.22" stroke-width="1.2" fill="none"/><path d="M673.2,1.2 Q671.5,-5.8 674.1,-12.8" stroke="#56705a" stroke-opacity="0.23" stroke-width="1.5" fill="none"/><path d="M588.8,23.2 Q588.6,20.8 589.8,18.4" stroke="#4a6446" stroke-opacity="0.35" stroke-width="2.2" fill="none"/><path d="M291.1,40.6 Q287.4,37.8 285.6,35.1" stroke="#3a5538" stroke-opacity="0.23" stroke-width="2.0" fill="none"/><path d="M1638.2,12.9 Q1636.2,10.9 1636.5,8.8" stroke="#2b3a2e" stroke-opacity="0.14" stroke-width="1.0" fill="none"/><path d="M840.9,37.4 Q842.9,30.3 848.6,23.1" stroke="#4a6446" stroke-opacity="0.35" stroke-width="1.5" fill="none"/><path d="M542.8,19.7 Q541.8,13.6 541.6,7.5" stroke="#3a5538" stroke-opacity="0.18" stroke-width="2.0" fill="none"/><path d="M465.1,3.7 Q470.7,-2.4 475.8,-8.5" stroke="#2b3a2e" stroke-opacity="0.27" stroke-width="1.5" fill="none"/><path d="M627.3,32.7 Q624.2,27.1 621.6,21.5" stroke="#2e4530" stroke-opacity="0.34" stroke-width="1.4" fill="none"/><path d="M94.2,24.9 Q89.0,20.1 88.1,15.4" stroke="#4a6446" stroke-opacity="0.30" stroke-width="1.5" fill="none"/><path d="M1119.8,5.4 Q1116.0,3.3 1116.4,1.3" stroke="#4a6446" stroke-opacity="0.25" stroke-width="1.2" fill="none"/><path d="M1106.4,3.0 Q1106.5,-0.8 1105.5,-4.5" stroke="#56705a" stroke-opacity="0.36" stroke-width="1.2" fill="none"/><path d="M79.7,18.2 Q74.5,8.9 70.3,-0.3" stroke="#3a5538" stroke-opacity="0.16" stroke-width="0.9" fill="none"/><path d="M1107.5,15.4 Q1107.1,12.2 1104.1,8.9" stroke="#56705a" stroke-opacity="0.25" stroke-width="1.6" fill="none"/><path d="M449.8,32.2 Q448.4,23.9 441.5,15.6" stroke="#2b3a2e" stroke-opacity="0.20" stroke-width="1.6" fill="none"/><path d="M440.4,14.0 Q435.8,11.8 436.4,9.6" stroke="#2b3a2e" stroke-opacity="0.17" stroke-width="1.1" fill="none"/><path d="M800.5,38.2 Q801.5,36.2 801.3,34.2" stroke="#56705a" stroke-opacity="0.37" stroke-width="2.1" fill="none"/><path d="M1065.7,14.6 Q1065.7,9.2 1066.9,3.8" stroke="#3a5538" stroke-opacity="0.38" stroke-width="1.0" fill="none"/><path d="M415.7,6.7 Q410.0,-2.0 409.8,-10.8" stroke="#2b3a2e" stroke-opacity="0.33" stroke-width="1.0" fill="none"/><path d="M501.4,14.1 Q503.4,11.8 505.2,9.6" stroke="#2e4530" stroke-opacity="0.26" stroke-width="1.4" fill="none"/><path d="M305.1,4.6 Q304.7,0.8 302.3,-3.0" stroke="#3a5538" stroke-opacity="0.10" stroke-width="1.1" fill="none"/><path d="M1342.5,6.9 Q1344.1,0.4 1343.0,-6.2" stroke="#2b3a2e" stroke-opacity="0.16" stroke-width="1.6" fill="none"/><path d="M939.6,13.1 Q939.4,7.8 938.5,2.5" stroke="#56705a" stroke-opacity="0.35" stroke-width="1.3" fill="none"/><path d="M250.6,22.8 Q245.0,18.5 245.3,14.2" stroke="#4a6446" stroke-opacity="0.12" stroke-width="1.6" fill="none"/><path d="M1340.2,32.2 Q1343.8,24.9 1343.3,17.6" stroke="#2b3a2e" stroke-opacity="0.20" stroke-width="1.2" fill="none"/><path d="M85.5,31.5 Q82.0,23.0 82.5,14.4" stroke="#2b3a2e" stroke-opacity="0.20" stroke-width="2.0" fill="none"/><path d="M303.4,8.1 Q307.9,3.5 312.9,-1.2" stroke="#2e4530" stroke-opacity="0.28" stroke-width="1.6" fill="none"/><path d="M342.2,4.3 Q347.1,-2.3 354.6,-9.0" stroke="#243524" stroke-opacity="0.20" stroke-width="1.9" fill="none"/><path d="M1050.1,35.3 Q1053.0,33.3 1050.5,31.3" stroke="#4a6446" stroke-opacity="0.19" stroke-width="1.6" fill="none"/><path d="M464.4,37.4 Q464.9,35.1 465.5,32.7" stroke="#4a6446" stroke-opacity="0.20" stroke-width="1.4" fill="none"/><path d="M357.2,15.7 Q358.4,5.7 356.1,-4.3" stroke="#56705a" stroke-opacity="0.23" stroke-width="1.9" fill="none"/><path d="M406.0,23.9 Q404.1,19.3 402.2,14.7" stroke="#56705a" stroke-opacity="0.38" stroke-width="2.2" fill="none"/><path d="M1040.3,17.1 Q1038.6,6.2 1036.6,-4.6" stroke="#4a6446" stroke-opacity="0.26" stroke-width="1.6" fill="none"/><path d="M959.7,32.2 Q964.0,30.2 963.7,28.2" stroke="#2e4530" stroke-opacity="0.25" stroke-width="2.1" fill="none"/><path d="M1586.4,20.4 Q1582.4,10.1 1580.6,-0.1" stroke="#56705a" stroke-opacity="0.11" stroke-width="1.5" fill="none"/><path d="M410.8,21.1 Q410.6,18.8 414.6,16.5" stroke="#4a6446" stroke-opacity="0.16" stroke-width="1.9" fill="none"/><path d="M832.4,3.4 Q828.6,-2.3 822.5,-7.9" stroke="#243524" stroke-opacity="0.24" stroke-width="1.1" fill="none"/><path d="M570.7,20.1 Q570.4,14.4 564.2,8.7" stroke="#2e4530" stroke-opacity="0.31" stroke-width="2.0" fill="none"/><path d="M187.8,2.2 Q190.2,-6.7 196.9,-15.6" stroke="#2b3a2e" stroke-opacity="0.22" stroke-width="1.8" fill="none"/><path d="M761.9,30.5 Q768.0,22.0 770.3,13.4" stroke="#3a5538" stroke-opacity="0.11" stroke-width="2.0" fill="none"/><path d="M141.1,27.2 Q140.0,24.2 135.1,21.2" stroke="#243524" stroke-opacity="0.22" stroke-width="2.1" fill="none"/><path d="M774.8,21.7 Q770.5,17.1 768.4,12.4" stroke="#56705a" stroke-opacity="0.32" stroke-width="1.4" fill="none"/><path d="M117.2,36.5 Q118.3,32.6 115.4,28.8" stroke="#4a6446" stroke-opacity="0.18" stroke-width="1.4" fill="none"/><path d="M998.3,1.7 Q998.0,-3.1 998.6,-8.0" stroke="#56705a" stroke-opacity="0.29" stroke-width="1.9" fill="none"/><path d="M943.5,21.7 Q943.6,17.6 940.8,13.6" stroke="#2b3a2e" stroke-opacity="0.23" stroke-width="1.0" fill="none"/><path d="M1077.8,10.3 Q1074.9,8.0 1073.5,5.7" stroke="#2b3a2e" stroke-opacity="0.37" stroke-width="0.8" fill="none"/><path d="M77.9,3.8 Q76.8,0.1 81.4,-3.6" stroke="#3a5538" stroke-opacity="0.23" stroke-width="1.6" fill="none"/><path d="M317.1,10.4 Q313.7,2.0 311.2,-6.4" stroke="#2b3a2e" stroke-opacity="0.24" stroke-width="1.7" fill="none"/><path d="M990.7,20.4 Q990.7,11.1 986.7,1.9" stroke="#3a5538" stroke-opacity="0.38" stroke-width="1.9" fill="none"/><path d="M423.9,28.8 Q423.8,24.6 425.4,20.4" stroke="#2b3a2e" stroke-opacity="0.22" stroke-width="2.1" fill="none"/><path d="M294.9,1.3 Q294.3,-2.0 294.6,-5.2" stroke="#2b3a2e" stroke-opacity="0.23" stroke-width="1.7" fill="none"/><path d="M764.7,14.2 Q763.1,4.8 762.2,-4.6" stroke="#2b3a2e" stroke-opacity="0.32" stroke-width="1.2" fill="none"/><path d="M922.2,4.2 Q912.5,-4.4 908.5,-12.9" stroke="#56705a" stroke-opacity="0.18" stroke-width="2.0" fill="none"/><path d="M117.1,40.4 Q123.5,33.4 125.1,26.4" stroke="#3a5538" stroke-opacity="0.35" stroke-width="1.9" fill="none"/><path d="M385.5,32.1 Q387.9,25.9 395.6,19.7" stroke="#4a6446" stroke-opacity="0.17" stroke-width="1.6" fill="none"/><path d="M1003.6,18.6 Q1009.9,8.9 1010.9,-0.9" stroke="#2b3a2e" stroke-opacity="0.26" stroke-width="1.5" fill="none"/><path d="M1282.4,37.4 Q1280.6,32.1 1282.3,26.8" stroke="#243524" stroke-opacity="0.23" stroke-width="1.9" fill="none"/><path d="M1075.5,24.2 Q1075.6,19.9 1075.1,15.6" stroke="#4a6446" stroke-opacity="0.11" stroke-width="1.4" fill="none"/><path d="M1281.2,17.3 Q1283.1,9.6 1280.1,1.9" stroke="#56705a" stroke-opacity="0.21" stroke-width="1.7" fill="none"/><path d="M1127.2,38.8 Q1129.5,34.4 1132.6,30.0" stroke="#3a5538" stroke-opacity="0.15" stroke-width="1.4" fill="none"/><path d="M152.5,13.7 Q148.4,8.8 148.3,3.9" stroke="#243524" stroke-opacity="0.20" stroke-width="1.4" fill="none"/><path d="M160.0,15.9 Q160.2,7.5 158.0,-0.8" stroke="#3a5538" stroke-opacity="0.35" stroke-width="2.0" fill="none"/><path d="M707.2,3.9 Q708.6,-1.2 704.4,-6.3" stroke="#2b3a2e" stroke-opacity="0.20" stroke-width="1.5" fill="none"/><path d="M1361.0,31.4 Q1360.6,29.5 1357.9,27.6" stroke="#56705a" stroke-opacity="0.19" stroke-width="1.0" fill="none"/><path d="M987.6,11.2 Q989.7,5.5 994.8,-0.2" stroke="#243524" stroke-opacity="0.20" stroke-width="1.5" fill="none"/><path d="M1147.1,4.3 Q1150.1,-0.3 1150.5,-5.0" stroke="#4a6446" stroke-opacity="0.33" stroke-width="2.0" fill="none"/><path d="M1065.2,16.8 Q1061.9,12.8 1064.2,8.7" stroke="#56705a" stroke-opacity="0.13" stroke-width="1.5" fill="none"/><path d="M1297.5,5.0 Q1290.1,-1.7 1286.8,-8.4" stroke="#3a5538" stroke-opacity="0.29" stroke-width="1.4" fill="none"/><path d="M881.7,14.0 Q885.0,9.6 884.4,5.3" stroke="#2e4530" stroke-opacity="0.21" stroke-width="0.9" fill="none"/><path d="M739.9,7.5 Q741.8,5.4 743.3,3.4" stroke="#243524" stroke-opacity="0.38" stroke-width="1.8" fill="none"/><path d="M1029.5,8.2 Q1025.8,0.5 1028.1,-7.3" stroke="#56705a" stroke-opacity="0.25" stroke-width="1.6" fill="none"/><path d="M1363.1,14.6 Q1361.7,10.6 1360.7,6.6" stroke="#243524" stroke-opacity="0.19" stroke-width="1.3" fill="none"/><path d="M1201.0,33.8 Q1205.5,30.5 1207.8,27.2" stroke="#2e4530" stroke-opacity="0.25" stroke-width="0.9" fill="none"/><path d="M746.9,18.2 Q746.9,10.6 743.0,2.9" stroke="#56705a" stroke-opacity="0.29" stroke-width="1.5" fill="none"/><path d="M398.6,30.6 Q401.9,22.1 402.0,13.6" stroke="#4a6446" stroke-opacity="0.37" stroke-width="1.3" fill="none"/><path d="M879.9,32.4 Q881.9,27.4 884.2,22.4" stroke="#4a6446" stroke-opacity="0.11" stroke-width="1.2" fill="none"/><path d="M953.1,37.2 Q952.4,30.9 957.1,24.7" stroke="#2e4530" stroke-opacity="0.35" stroke-width="1.9" fill="none"/><path d="M1343.7,3.0 Q1338.0,-6.6 1337.8,-16.2" stroke="#4a6446" stroke-opacity="0.24" stroke-width="1.7" fill="none"/><path d="M308.6,8.6 Q308.1,2.1 307.7,-4.5" stroke="#3a5538" stroke-opacity="0.23" stroke-width="2.0" fill="none"/><path d="M542.6,3.5 Q543.7,-0.1 545.4,-3.8" stroke="#56705a" stroke-opacity="0.22" stroke-width="2.1" fill="none"/><path d="M1111.2,32.4 Q1106.1,24.1 1106.0,15.9" stroke="#2e4530" stroke-opacity="0.18" stroke-width="1.8" fill="none"/><path d="M96.6,13.5 Q94.7,11.3 97.9,9.1" stroke="#3a5538" stroke-opacity="0.28" stroke-width="1.3" fill="none"/><path d="M1254.7,2.6 Q1256.4,-2.2 1260.9,-7.0" stroke="#56705a" stroke-opacity="0.30" stroke-width="1.9" fill="none"/><path d="M1377.2,21.2 Q1382.6,13.9 1389.5,6.7" stroke="#2e4530" stroke-opacity="0.31" stroke-width="1.1" fill="none"/><path d="M750.2,20.2 Q746.7,17.7 748.2,15.2" stroke="#2e4530" stroke-opacity="0.26" stroke-width="1.8" fill="none"/><path d="M1111.8,32.9 Q1114.3,28.2 1120.8,23.5" stroke="#4a6446" stroke-opacity="0.22" stroke-width="2.2" fill="none"/><path d="M573.3,6.9 Q572.1,0.9 573.2,-5.0" stroke="#243524" stroke-opacity="0.32" stroke-width="1.4" fill="none"/><path d="M375.6,30.8 Q380.0,21.9 386.9,12.9" stroke="#243524" stroke-opacity="0.36" stroke-width="0.9" fill="none"/><path d="M1143.0,6.9 Q1145.1,-2.4 1147.5,-11.7" stroke="#4a6446" stroke-opacity="0.11" stroke-width="2.0" fill="none"/><path d="M1079.6,19.3 Q1080.8,15.5 1081.5,11.7" stroke="#2b3a2e" stroke-opacity="0.27" stroke-width="0.9" fill="none"/><path d="M959.9,13.8 Q957.7,10.4 955.7,7.0" stroke="#4a6446" stroke-opacity="0.17" stroke-width="2.2" fill="none"/><path d="M744.3,42.2 Q744.5,31.8 744.5,21.3" stroke="#4a6446" stroke-opacity="0.32" stroke-width="2.1" fill="none"/><path d="M614.2,27.3 Q615.3,24.6 611.0,21.8" stroke="#2e4530" stroke-opacity="0.29" stroke-width="1.9" fill="none"/><path d="M908.9,21.7 Q914.9,17.9 916.4,14.1" stroke="#3a5538" stroke-opacity="0.13" stroke-width="1.2" fill="none"/><path d="M650.9,20.0 Q643.0,11.6 637.6,3.2" stroke="#4a6446" stroke-opacity="0.12" stroke-width="2.1" fill="none"/><path d="M1694.7,26.9 Q1700.2,19.8 1700.4,12.7" stroke="#4a6446" stroke-opacity="0.32" stroke-width="2.1" fill="none"/><path d="M908.5,33.6 Q913.6,27.7 914.2,21.8" stroke="#56705a" stroke-opacity="0.23" stroke-width="1.6" fill="none"/><path d="M1003.0,17.8 Q1002.3,9.4 1006.2,1.1" stroke="#4a6446" stroke-opacity="0.31" stroke-width="0.9" fill="none"/><path d="M1018.6,17.8 Q1012.9,13.4 1013.0,9.1" stroke="#56705a" stroke-opacity="0.36" stroke-width="1.5" fill="none"/><path d="M1273.1,27.3 Q1273.2,24.8 1273.8,22.3" stroke="#4a6446" stroke-opacity="0.16" stroke-width="0.8" fill="none"/><path d="M880.2,6.8 Q882.3,0.2 881.0,-6.3" stroke="#3a5538" stroke-opacity="0.24" stroke-width="1.3" fill="none"/><path d="M1021.1,17.8 Q1012.2,9.9 1006.7,2.1" stroke="#56705a" stroke-opacity="0.36" stroke-width="1.4" fill="none"/><path d="M124.2,41.4 Q123.2,38.2 120.6,35.0" stroke="#2b3a2e" stroke-opacity="0.17" stroke-width="1.6" fill="none"/><path d="M1024.1,6.6 Q1026.7,2.1 1027.1,-2.4" stroke="#3a5538" stroke-opacity="0.32" stroke-width="1.6" fill="none"/><path d="M866.6,40.6 Q867.0,35.0 866.4,29.4" stroke="#243524" stroke-opacity="0.12" stroke-width="0.9" fill="none"/><path d="M250.5,27.2 Q251.8,25.2 249.8,23.2" stroke="#243524" stroke-opacity="0.15" stroke-width="2.0" fill="none"/><path d="M822.2,26.6 Q824.0,22.1 825.8,17.5" stroke="#4a6446" stroke-opacity="0.35" stroke-width="1.9" fill="none"/><path d="M605.0,33.7 Q608.8,28.9 608.9,24.1" stroke="#243524" stroke-opacity="0.33" stroke-width="1.4" fill="none"/><path d="M500.1,21.1 Q495.3,14.3 487.8,7.4" stroke="#2b3a2e" stroke-opacity="0.35" stroke-width="1.8" fill="none"/><path d="M1131.3,23.4 Q1128.4,13.5 1124.7,3.5" stroke="#3a5538" stroke-opacity="0.12" stroke-width="1.1" fill="none"/><path d="M626.6,14.4 Q628.1,11.2 630.0,8.0" stroke="#4a6446" stroke-opacity="0.29" stroke-width="1.0" fill="none"/><path d="M157.2,26.8 Q158.4,19.3 157.4,11.7" stroke="#2b3a2e" stroke-opacity="0.17" stroke-width="2.1" fill="none"/><path d="M445.0,20.8 Q450.9,12.6 458.2,4.4" stroke="#3a5538" stroke-opacity="0.11" stroke-width="1.6" fill="none"/><path d="M378.2,28.6 Q374.0,22.7 368.5,16.8" stroke="#2e4530" stroke-opacity="0.18" stroke-width="1.9" fill="none"/><path d="M503.0,39.0 Q508.1,32.4 515.6,25.8" stroke="#2e4530" stroke-opacity="0.34" stroke-width="1.2" fill="none"/><path d="M886.3,13.6 Q881.7,3.7 879.2,-6.3" stroke="#56705a" stroke-opacity="0.26" stroke-width="1.0" fill="none"/><path d="M148.4,35.2 Q148.7,32.1 148.5,29.0" stroke="#243524" stroke-opacity="0.20" stroke-width="1.9" fill="none"/><path d="M587.2,40.5 Q587.8,38.5 584.1,36.5" stroke="#56705a" stroke-opacity="0.36" stroke-width="1.6" fill="none"/><path d="M1703.2,11.0 Q1704.0,6.4 1703.8,1.7" stroke="#2b3a2e" stroke-opacity="0.16" stroke-width="1.8" fill="none"/><path d="M156.3,14.2 Q151.8,8.7 153.3,3.1" stroke="#3a5538" stroke-opacity="0.26" stroke-width="0.9" fill="none"/><path d="M1196.9,32.6 Q1199.8,24.3 1207.0,16.1" stroke="#3a5538" stroke-opacity="0.37" stroke-width="1.4" fill="none"/><path d="M146.1,10.4 Q144.7,2.3 142.3,-5.7" stroke="#2e4530" stroke-opacity="0.22" stroke-width="1.0" fill="none"/><path d="M390.7,5.6 Q394.0,-0.3 402.5,-6.1" stroke="#2b3a2e" stroke-opacity="0.21" stroke-width="1.5" fill="none"/><path d="M95.3,23.1 Q97.6,18.0 101.7,12.9" stroke="#4a6446" stroke-opacity="0.19" stroke-width="1.1" fill="none"/><path d="M1262.9,9.9 Q1264.3,6.2 1261.9,2.5" stroke="#56705a" stroke-opacity="0.22" stroke-width="1.5" fill="none"/><path d="M995.6,18.2 Q988.0,11.5 985.1,4.8" stroke="#4a6446" stroke-opacity="0.16" stroke-width="0.8" fill="none"/><path d="M656.0,36.9 Q661.6,29.5 662.5,22.1" stroke="#3a5538" stroke-opacity="0.29" stroke-width="1.0" fill="none"/><path d="M321.5,22.4 Q323.5,14.2 331.2,6.0" stroke="#2e4530" stroke-opacity="0.10" stroke-width="1.3" fill="none"/><path d="M733.8,15.7 Q733.0,13.1 737.4,10.5" stroke="#3a5538" stroke-opacity="0.22" stroke-width="1.7" fill="none"/><path d="M574.6,14.3 Q570.8,7.3 564.1,0.3" stroke="#3a5538" stroke-opacity="0.30" stroke-width="1.3" fill="none"/><path d="M1088.1,3.0 Q1089.9,-3.9 1087.8,-10.8" stroke="#3a5538" stroke-opacity="0.38" stroke-width="1.1" fill="none"/><path d="M510.0,23.7 Q509.7,17.3 510.6,10.9" stroke="#56705a" stroke-opacity="0.33" stroke-width="2.0" fill="none"/><path d="M299.8,14.5 Q299.0,12.1 299.0,9.7" stroke="#2e4530" stroke-opacity="0.30" stroke-width="1.9" fill="none"/><path d="M226.3,33.1 Q232.5,25.2 237.8,17.3" stroke="#4a6446" stroke-opacity="0.22" stroke-width="1.0" fill="none"/><path d="M645.3,32.3 Q649.5,28.3 653.4,24.3" stroke="#243524" stroke-opacity="0.29" stroke-width="1.9" fill="none"/><path d="M448.7,15.9 Q448.0,9.5 441.9,3.1" stroke="#4a6446" stroke-opacity="0.35" stroke-width="1.3" fill="none"/><path d="M970.5,14.1 Q972.4,5.7 978.6,-2.7" stroke="#2e4530" stroke-opacity="0.38" stroke-width="1.2" fill="none"/><path d="M264.2,13.5 Q267.9,9.6 267.9,5.6" stroke="#2b3a2e" stroke-opacity="0.22" stroke-width="0.9" fill="none"/><path d="M792.5,27.5 Q788.7,18.7 783.1,10.0" stroke="#4a6446" stroke-opacity="0.11" stroke-width="1.8" fill="none"/><path d="M1000.0,10.0 Q994.6,-0.3 994.0,-10.6" stroke="#4a6446" stroke-opacity="0.31" stroke-width="1.4" fill="none"/><path d="M837.5,38.9 Q833.6,34.0 833.2,29.0" stroke="#2e4530" stroke-opacity="0.11" stroke-width="1.3" fill="none"/><path d="M131.4,39.4 Q127.7,34.7 124.0,30.0" stroke="#243524" stroke-opacity="0.27" stroke-width="1.5" fill="none"/><path d="M702.9,3.3 Q702.3,-0.3 706.6,-3.9" stroke="#243524" stroke-opacity="0.33" stroke-width="1.8" fill="none"/><path d="M865.6,12.7 Q866.2,10.8 868.6,8.8" stroke="#56705a" stroke-opacity="0.30" stroke-width="1.7" fill="none"/><path d="M175.2,24.5 Q177.7,17.1 174.4,9.6" stroke="#2e4530" stroke-opacity="0.21" stroke-width="2.1" fill="none"/><path d="M172.3,30.0 Q172.4,24.1 168.3,18.3" stroke="#2b3a2e" stroke-opacity="0.34" stroke-width="1.2" fill="none"/><path d="M652.3,40.6 Q656.7,33.0 655.5,25.4" stroke="#243524" stroke-opacity="0.35" stroke-width="0.9" fill="none"/><path d="M1027.0,16.1 Q1025.7,11.9 1029.2,7.7" stroke="#2e4530" stroke-opacity="0.16" stroke-width="1.3" fill="none"/><path d="M1368.3,15.9 Q1368.2,7.2 1362.4,-1.5" stroke="#56705a" stroke-opacity="0.20" stroke-width="0.8" fill="none"/><path d="M1199.4,22.9 Q1201.6,12.4 1201.4,1.9" stroke="#56705a" stroke-opacity="0.27" stroke-width="1.5" fill="none"/><path d="M1067.1,12.5 Q1065.1,8.4 1063.2,4.2" stroke="#56705a" stroke-opacity="0.19" stroke-width="2.0" fill="none"/><path d="M851.2,26.1 Q852.4,22.4 850.1,18.7" stroke="#2b3a2e" stroke-opacity="0.11" stroke-width="1.9" fill="none"/><path d="M73.4,4.3 Q71.6,-0.7 64.0,-5.7" stroke="#2e4530" stroke-opacity="0.37" stroke-width="2.1" fill="none"/><path d="M233.8,37.9 Q234.3,36.1 231.5,34.3" stroke="#56705a" stroke-opacity="0.21" stroke-width="1.5" fill="none"/><path d="M1695.5,24.5 Q1693.8,20.9 1688.7,17.2" stroke="#56705a" stroke-opacity="0.31" stroke-width="1.8" fill="none"/><path d="M724.0,40.0 Q720.5,34.9 714.1,29.7" stroke="#4a6446" stroke-opacity="0.28" stroke-width="1.2" fill="none"/><path d="M815.2,38.2 Q818.6,31.6 827.0,24.9" stroke="#2e4530" stroke-opacity="0.22" stroke-width="0.9" fill="none"/><path d="M172.6,27.9 Q174.3,24.1 174.2,20.3" stroke="#3a5538" stroke-opacity="0.32" stroke-width="2.1" fill="none"/><path d="M195.0,17.9 Q198.6,9.4 201.8,0.9" stroke="#2e4530" stroke-opacity="0.34" stroke-width="1.8" fill="none"/><path d="M1396.7,36.7 Q1391.4,29.2 1387.7,21.6" stroke="#3a5538" stroke-opacity="0.38" stroke-width="2.1" fill="none"/><path d="M819.1,21.8 Q814.0,16.2 808.3,10.6" stroke="#4a6446" stroke-opacity="0.30" stroke-width="2.1" fill="none"/><path d="M759.8,10.8 Q759.4,1.6 754.4,-7.7" stroke="#2b3a2e" stroke-opacity="0.11" stroke-width="0.8" fill="none"/><path d="M550.4,18.4 Q550.8,16.2 553.1,13.9" stroke="#4a6446" stroke-opacity="0.33" stroke-width="1.4" fill="none"/><path d="M114.6,7.7 Q116.4,2.6 114.1,-2.5" stroke="#2e4530" stroke-opacity="0.21" stroke-width="2.0" fill="none"/><path d="M410.5,16.0 Q413.5,7.4 415.0,-1.2" stroke="#2e4530" stroke-opacity="0.13" stroke-width="1.7" fill="none"/><path d="M444.0,14.3 Q441.7,3.5 443.1,-7.2" stroke="#2e4530" stroke-opacity="0.29" stroke-width="1.0" fill="none"/><path d="M464.9,17.3 Q469.6,10.0 478.3,2.7" stroke="#56705a" stroke-opacity="0.35" stroke-width="1.3" fill="none"/><path d="M926.5,38.6 Q920.2,32.0 914.0,25.4" stroke="#2b3a2e" stroke-opacity="0.37" stroke-width="1.4" fill="none"/><path d="M217.0,4.5 Q215.6,-1.1 216.1,-6.6" stroke="#4a6446" stroke-opacity="0.21" stroke-width="0.9" fill="none"/><path d="M578.5,27.9 Q582.2,19.2 588.8,10.6" stroke="#4a6446" stroke-opacity="0.24" stroke-width="0.8" fill="none"/><path d="M349.3,36.2 Q352.0,33.3 351.7,30.4" stroke="#2b3a2e" stroke-opacity="0.37" stroke-width="1.7" fill="none"/><path d="M868.9,31.7 Q865.2,28.0 867.5,24.3" stroke="#2b3a2e" stroke-opacity="0.10" stroke-width="1.5" fill="none"/><path d="M866.0,12.9 Q867.1,6.5 867.0,0.0" stroke="#3a5538" stroke-opacity="0.28" stroke-width="2.1" fill="none"/><path d="M754.7,32.5 Q751.7,26.0 749.6,19.5" stroke="#3a5538" stroke-opacity="0.20" stroke-width="1.8" fill="none"/><path d="M674.3,29.3 Q668.2,21.4 661.5,13.5" stroke="#243524" stroke-opacity="0.33" stroke-width="2.2" fill="none"/><path d="M1012.0,39.1 Q1007.7,30.8 1002.6,22.6" stroke="#56705a" stroke-opacity="0.24" stroke-width="1.2" fill="none"/><path d="M706.7,23.4 Q704.3,18.1 703.3,12.8" stroke="#243524" stroke-opacity="0.23" stroke-width="1.8" fill="none"/><path d="M1142.1,22.4 Q1145.0,18.0 1144.3,13.6" stroke="#3a5538" stroke-opacity="0.25" stroke-width="1.0" fill="none"/><path d="M777.1,16.6 Q776.7,14.3 777.3,11.9" stroke="#3a5538" stroke-opacity="0.21" stroke-width="1.7" fill="none"/><path d="M353.9,39.7 Q345.3,32.1 341.1,24.4" stroke="#2b3a2e" stroke-opacity="0.16" stroke-width="1.7" fill="none"/><path d="M593.4,26.5 Q593.6,19.7 594.2,12.9" stroke="#2b3a2e" stroke-opacity="0.15" stroke-width="2.1" fill="none"/><path d="M648.6,22.1 Q646.7,17.7 645.3,13.3" stroke="#4a6446" stroke-opacity="0.12" stroke-width="1.8" fill="none"/><path d="M401.8,13.2 Q400.0,6.7 401.2,0.3" stroke="#3a5538" stroke-opacity="0.14" stroke-width="1.7" fill="none"/><path d="M620.1,6.5 Q620.1,-3.7 618.2,-13.9" stroke="#2b3a2e" stroke-opacity="0.11" stroke-width="1.2" fill="none"/><path d="M94.2,10.7 Q96.2,1.4 98.3,-7.8" stroke="#2e4530" stroke-opacity="0.34" stroke-width="1.3" fill="none"/><path d="M376.3,8.5 Q380.7,1.2 385.3,-6.1" stroke="#3a5538" stroke-opacity="0.19" stroke-width="1.5" fill="none"/><path d="M313.3,25.2 Q316.9,18.6 318.7,11.9" stroke="#4a6446" stroke-opacity="0.13" stroke-width="2.1" fill="none"/><path d="M655.2,39.3 Q656.4,35.8 657.0,32.4" stroke="#2b3a2e" stroke-opacity="0.18" stroke-width="1.7" fill="none"/><path d="M223.5,6.6 Q223.1,0.2 228.4,-6.3" stroke="#2e4530" stroke-opacity="0.36" stroke-width="1.2" fill="none"/><path d="M1003.6,13.6 Q1001.0,8.2 1003.9,2.8" stroke="#56705a" stroke-opacity="0.16" stroke-width="1.9" fill="none"/><path d="M473.4,6.3 Q478.4,-1.4 479.2,-9.1" stroke="#243524" stroke-opacity="0.35" stroke-width="2.0" fill="none"/><path d="M402.6,2.6 Q400.1,-3.6 398.5,-9.7" stroke="#2b3a2e" stroke-opacity="0.36" stroke-width="0.9" fill="none"/><path d="M1278.6,32.1 Q1277.8,27.1 1278.0,22.2" stroke="#56705a" stroke-opacity="0.19" stroke-width="1.5" fill="none"/><path d="M447.2,22.8 Q447.4,20.8 448.1,18.7" stroke="#2e4530" stroke-opacity="0.23" stroke-width="1.0" fill="none"/><path d="M803.0,15.8 Q799.6,10.2 793.3,4.5" stroke="#243524" stroke-opacity="0.31" stroke-width="1.3" fill="none"/><path d="M391.3,23.4 Q389.7,14.7 385.8,6.0" stroke="#56705a" stroke-opacity="0.28" stroke-width="1.6" fill="none"/><path d="M362.3,40.6 Q364.7,38.5 361.2,36.5" stroke="#243524" stroke-opacity="0.31" stroke-width="1.7" fill="none"/><path d="M314.7,1.5 Q311.8,-6.4 304.3,-14.4" stroke="#56705a" stroke-opacity="0.27" stroke-width="1.6" fill="none"/><path d="M866.3,24.8 Q870.0,14.7 869.5,4.6" stroke="#56705a" stroke-opacity="0.31" stroke-width="1.3" fill="none"/><path d="M171.4,28.4 Q166.9,21.5 163.0,14.6" stroke="#4a6446" stroke-opacity="0.10" stroke-width="1.0" fill="none"/><path d="M585.4,10.0 Q589.1,5.2 592.1,0.3" stroke="#2b3a2e" stroke-opacity="0.19" stroke-width="0.9" fill="none"/><path d="M834.2,37.8 Q835.4,28.6 842.4,19.4" stroke="#243524" stroke-opacity="0.20" stroke-width="1.7" fill="none"/><path d="M162.5,14.3 Q160.1,9.9 163.2,5.5" stroke="#243524" stroke-opacity="0.18" stroke-width="1.5" fill="none"/><path d="M910.6,35.1 Q909.1,31.8 907.6,28.4" stroke="#56705a" stroke-opacity="0.32" stroke-width="1.0" fill="none"/><path d="M900.4,10.2 Q902.8,7.6 900.8,4.9" stroke="#2e4530" stroke-opacity="0.26" stroke-width="1.5" fill="none"/><path d="M698.9,41.7 Q700.9,34.5 699.6,27.3" stroke="#2b3a2e" stroke-opacity="0.22" stroke-width="0.9" fill="none"/><path d="M1298.3,35.1 Q1303.3,30.8 1305.6,26.5" stroke="#3a5538" stroke-opacity="0.26" stroke-width="1.9" fill="none"/><path d="M738.3,10.0 Q735.1,1.1 733.2,-7.8" stroke="#4a6446" stroke-opacity="0.10" stroke-width="0.8" fill="none"/><path d="M1229.4,40.4 Q1228.1,36.1 1231.5,31.9" stroke="#3a5538" stroke-opacity="0.26" stroke-width="1.1" fill="none"/><path d="M1251.2,16.8 Q1250.4,6.5 1248.2,-3.8" stroke="#3a5538" stroke-opacity="0.26" stroke-width="1.5" fill="none"/><path d="M336.8,42.1 Q334.0,35.8 335.8,29.5" stroke="#2e4530" stroke-opacity="0.22" stroke-width="2.1" fill="none"/><path d="M585.4,3.5 Q591.7,-4.1 600.1,-11.6" stroke="#56705a" stroke-opacity="0.32" stroke-width="1.0" fill="none"/><path d="M868.3,9.5 Q871.6,6.9 872.0,4.3" stroke="#4a6446" stroke-opacity="0.31" stroke-width="1.4" fill="none"/><path d="M941.3,28.5 Q942.5,23.2 946.5,17.9" stroke="#243524" stroke-opacity="0.22" stroke-width="2.0" fill="none"/><path d="M1030.5,35.2 Q1026.4,27.0 1016.4,18.7" stroke="#56705a" stroke-opacity="0.11" stroke-width="0.9" fill="none"/><path d="M420.7,15.9 Q420.5,14.2 418.3,12.4" stroke="#56705a" stroke-opacity="0.24" stroke-width="0.9" fill="none"/><path d="M784.2,35.6 Q788.9,29.0 796.5,22.4" stroke="#56705a" stroke-opacity="0.36" stroke-width="1.4" fill="none"/><path d="M598.8,28.4 Q603.4,24.6 606.6,20.8" stroke="#2e4530" stroke-opacity="0.37" stroke-width="2.2" fill="none"/><path d="M526.1,38.2 Q522.5,30.7 516.0,23.2" stroke="#4a6446" stroke-opacity="0.21" stroke-width="1.8" fill="none"/><path d="M859.0,21.3 Q858.9,18.3 859.2,15.2" stroke="#2b3a2e" stroke-opacity="0.15" stroke-width="2.0" fill="none"/><path d="M601.0,30.3 Q600.3,23.6 596.3,16.8" stroke="#3a5538" stroke-opacity="0.35" stroke-width="2.2" fill="none"/><path d="M197.4,19.6 Q198.1,16.6 193.6,13.5" stroke="#2e4530" stroke-opacity="0.33" stroke-width="2.1" fill="none"/><path d="M1091.5,22.1 Q1092.7,19.1 1092.9,16.1" stroke="#56705a" stroke-opacity="0.23" stroke-width="0.9" fill="none"/><path d="M615.4,13.1 Q613.0,9.9 611.8,6.7" stroke="#4a6446" stroke-opacity="0.34" stroke-width="1.3" fill="none"/><path d="M630.2,39.2 Q637.9,30.3 641.7,21.4" stroke="#56705a" stroke-opacity="0.17" stroke-width="1.3" fill="none"/><path d="M1063.4,28.3 Q1061.8,25.4 1061.1,22.6" stroke="#4a6446" stroke-opacity="0.29" stroke-width="0.9" fill="none"/><path d="M482.5,33.5 Q491.1,26.7 494.0,19.8" stroke="#3a5538" stroke-opacity="0.17" stroke-width="1.7" fill="none"/><path d="M892.3,25.5 Q896.4,16.2 898.4,6.9" stroke="#4a6446" stroke-opacity="0.13" stroke-width="1.0" fill="none"/><path d="M1027.5,16.2 Q1028.3,12.9 1029.0,9.6" stroke="#243524" stroke-opacity="0.30" stroke-width="1.8" fill="none"/><path d="M569.7,32.1 Q573.0,22.9 570.9,13.7" stroke="#2e4530" stroke-opacity="0.23" stroke-width="1.4" fill="none"/><path d="M883.7,24.1 Q886.9,15.9 893.8,7.8" stroke="#3a5538" stroke-opacity="0.31" stroke-width="1.6" fill="none"/><path d="M1687.0,15.0 Q1685.4,10.4 1685.4,5.7" stroke="#2e4530" stroke-opacity="0.21" stroke-width="1.4" fill="none"/><path d="M117.9,41.0 Q114.1,34.6 112.1,28.2" stroke="#4a6446" stroke-opacity="0.28" stroke-width="0.9" fill="none"/><path d="M1372.4,11.3 Q1375.2,4.9 1377.8,-1.5" stroke="#3a5538" stroke-opacity="0.25" stroke-width="1.8" fill="none"/><path d="M628.9,20.0 Q632.6,11.0 634.0,2.0" stroke="#2e4530" stroke-opacity="0.14" stroke-width="1.4" fill="none"/><path d="M657.0,6.5 Q654.8,-4.3 652.4,-15.0" stroke="#3a5538" stroke-opacity="0.35" stroke-width="0.9" fill="none"/><path d="M65.1,6.4 Q63.7,3.0 62.8,-0.4" stroke="#3a5538" stroke-opacity="0.15" stroke-width="1.2" fill="none"/><path d="M123.6,27.0 Q126.4,20.3 129.0,13.5" stroke="#2b3a2e" stroke-opacity="0.21" stroke-width="1.2" fill="none"/><path d="M336.1,17.7 Q339.8,10.2 339.8,2.7" stroke="#2b3a2e" stroke-opacity="0.29" stroke-width="1.1" fill="none"/><path d="M338.4,19.3 Q340.0,17.3 340.0,15.3" stroke="#3a5538" stroke-opacity="0.16" stroke-width="1.7" fill="none"/><path d="M126.7,25.1 Q126.7,20.2 124.1,15.4" stroke="#243524" stroke-opacity="0.29" stroke-width="1.1" fill="none"/><path d="M1149.0,11.3 Q1143.6,3.6 1139.5,-4.0" stroke="#4a6446" stroke-opacity="0.36" stroke-width="1.9" fill="none"/><path d="M1126.1,26.7 Q1123.1,19.3 1124.3,11.9" stroke="#4a6446" stroke-opacity="0.27" stroke-width="1.0" fill="none"/><path d="M245.1,28.4 Q244.4,24.0 242.4,19.5" stroke="#243524" stroke-opacity="0.21" stroke-width="2.2" fill="none"/><path d="M683.8,40.2 Q682.0,30.7 679.8,21.3" stroke="#4a6446" stroke-opacity="0.34" stroke-width="0.8" fill="none"/><path d="M609.7,10.2 Q600.2,3.5 596.2,-3.1" stroke="#2b3a2e" stroke-opacity="0.32" stroke-width="1.6" fill="none"/><path d="M182.5,38.0 Q180.7,27.7 180.3,17.3" stroke="#2e4530" stroke-opacity="0.12" stroke-width="1.5" fill="none"/><circle cx="430.5" cy="24.7" r="0.5" fill="#5d7a62" fill-opacity="0.55"/><circle cx="23.5" cy="7.1" r="1.0" fill="#5d7a62" fill-opacity="0.28"/><circle cx="694.4" cy="10.9" r="0.9" fill="#9ab0a0" fill-opacity="0.24"/><circle cx="164.5" cy="3.0" r="0.9" fill="#4b6350" fill-opacity="0.35"/><circle cx="224.7" cy="20.9" r="1.0" fill="#5d7a62" fill-opacity="0.52"/><circle cx="1325.7" cy="18.1" r="0.9" fill="#7f9a86" fill-opacity="0.49"/><circle cx="464.3" cy="29.3" r="0.9" fill="#4b6350" fill-opacity="0.21"/><circle cx="684.3" cy="10.5" r="0.8" fill="#7f9a86" fill-opacity="0.54"/><circle cx="458.5" cy="14.3" r="1.1" fill="#5d7a62" fill-opacity="0.47"/><circle cx="743.4" cy="14.8" r="0.7" fill="#7f9a86" fill-opacity="0.41"/><circle cx="301.2" cy="19.2" r="0.9" fill="#7f9a86" fill-opacity="0.60"/><circle cx="304.1" cy="1.9" r="0.6" fill="#5d7a62" fill-opacity="0.30"/><circle cx="90.3" cy="12.8" r="0.4" fill="#4b6350" fill-opacity="0.28"/><circle cx="1338.3" cy="7.0" r="1.1" fill="#9ab0a0" fill-opacity="0.42"/><circle cx="395.3" cy="3.2" r="0.6" fill="#9ab0a0" fill-opacity="0.26"/><circle cx="716.2" cy="15.0" r="0.6" fill="#4b6350" fill-opacity="0.29"/><circle cx="65.6" cy="10.1" r="0.6" fill="#9ab0a0" fill-opacity="0.23"/><circle cx="1271.8" cy="21.9" r="0.4" fill="#7f9a86" fill-opacity="0.32"/><circle cx="302.3" cy="7.2" r="0.7" fill="#5d7a62" fill-opacity="0.31"/><circle cx="770.3" cy="9.9" r="0.6" fill="#4b6350" fill-opacity="0.47"/><circle cx="1144.3" cy="1.0" r="0.8" fill="#9ab0a0" fill-opacity="0.42"/><circle cx="1142.7" cy="22.1" r="0.6" fill="#5d7a62" fill-opacity="0.60"/><circle cx="775.2" cy="24.5" r="1.0" fill="#7f9a86" fill-opacity="0.49"/><circle cx="616.2" cy="34.0" r="0.9" fill="#7f9a86" fill-opacity="0.54"/><circle cx="567.8" cy="8.1" r="1.1" fill="#7f9a86" fill-opacity="0.23"/><circle cx="438.9" cy="27.7" r="0.9" fill="#5d7a62" fill-opacity="0.26"/><circle cx="190.4" cy="3.0" r="0.9" fill="#7f9a86" fill-opacity="0.29"/><circle cx="1076.9" cy="4.1" r="0.6" fill="#5d7a62" fill-opacity="0.26"/><circle cx="585.0" cy="17.1" r="0.4" fill="#4b6350" fill-opacity="0.48"/><circle cx="613.1" cy="5.6" r="0.6" fill="#4b6350" fill-opacity="0.38"/><circle cx="1010.4" cy="6.5" r="0.9" fill="#7f9a86" fill-opacity="0.45"/><circle cx="388.1" cy="16.1" r="0.6" fill="#9ab0a0" fill-opacity="0.48"/><circle cx="1111.0" cy="16.8" r="0.6" fill="#9ab0a0" fill-opacity="0.44"/><circle cx="68.9" cy="10.9" r="0.5" fill="#5d7a62" fill-opacity="0.46"/><circle cx="955.2" cy="24.5" r="0.8" fill="#4b6350" fill-opacity="0.46"/><circle cx="130.9" cy="15.9" r="0.4" fill="#5d7a62" fill-opacity="0.50"/><circle cx="274.5" cy="28.0" r="0.7" fill="#9ab0a0" fill-opacity="0.27"/><circle cx="15.4" cy="29.1" r="0.7" fill="#4b6350" fill-opacity="0.58"/><circle cx="448.8" cy="27.5" r="0.9" fill="#5d7a62" fill-opacity="0.42"/><circle cx="821.5" cy="24.7" r="0.8" fill="#9ab0a0" fill-opacity="0.26"/><circle cx="1266.1" cy="4.8" r="0.5" fill="#7f9a86" fill-opacity="0.59"/><circle cx="21.7" cy="1.5" r="0.7" fill="#9ab0a0" fill-opacity="0.34"/><circle cx="202.8" cy="10.2" r="1.1" fill="#7f9a86" fill-opacity="0.27"/><circle cx="1384.9" cy="30.5" r="0.5" fill="#4b6350" fill-opacity="0.22"/><circle cx="93.9" cy="32.8" r="0.5" fill="#9ab0a0" fill-opacity="0.44"/><circle cx="847.5" cy="27.3" r="1.0" fill="#9ab0a0" fill-opacity="0.38"/><circle cx="1117.4" cy="19.2" r="0.9" fill="#5d7a62" fill-opacity="0.40"/><circle cx="454.4" cy="17.3" r="0.8" fill="#9ab0a0" fill-opacity="0.55"/><circle cx="1285.0" cy="3.8" r="0.8" fill="#9ab0a0" fill-opacity="0.56"/><circle cx="761.6" cy="28.8" r="0.5" fill="#7f9a86" fill-opacity="0.27"/><circle cx="182.4" cy="11.8" r="0.9" fill="#5d7a62" fill-opacity="0.42"/><circle cx="759.3" cy="16.1" r="0.5" fill="#9ab0a0" fill-opacity="0.54"/><circle cx="294.0" cy="23.2" r="0.7" fill="#7f9a86" fill-opacity="0.33"/><circle cx="1137.3" cy="21.1" r="0.9" fill="#4b6350" fill-opacity="0.20"/><circle cx="819.1" cy="24.8" r="0.8" fill="#5d7a62" fill-opacity="0.55"/><circle cx="858.8" cy="32.7" r="0.5" fill="#5d7a62" fill-opacity="0.29"/><circle cx="913.6" cy="11.9" r="1.0" fill="#9ab0a0" fill-opacity="0.22"/><circle cx="50.5" cy="17.0" r="1.0" fill="#9ab0a0" fill-opacity="0.32"/><circle cx="26.0" cy="31.7" r="0.4" fill="#4b6350" fill-opacity="0.23"/><circle cx="859.8" cy="2.7" r="0.9" fill="#7f9a86" fill-opacity="0.34"/><circle cx="307.2" cy="29.4" r="0.8" fill="#5d7a62" fill-opacity="0.29"/><circle cx="251.8" cy="10.3" r="0.8" fill="#4b6350" fill-opacity="0.36"/><circle cx="1118.9" cy="10.1" r="0.6" fill="#5d7a62" fill-opacity="0.28"/><circle cx="224.9" cy="0.1" r="0.7" fill="#5d7a62" fill-opacity="0.43"/><circle cx="1123.1" cy="31.3" r="0.5" fill="#7f9a86" fill-opacity="0.56"/><circle cx="948.4" cy="0.0" r="1.0" fill="#9ab0a0" fill-opacity="0.51"/><circle cx="858.5" cy="25.4" r="1.0" fill="#7f9a86" fill-opacity="0.33"/><circle cx="599.9" cy="23.9" r="0.6" fill="#9ab0a0" fill-opacity="0.43"/><circle cx="1128.6" cy="13.4" r="0.7" fill="#4b6350" fill-opacity="0.43"/><circle cx="303.7" cy="10.4" r="0.4" fill="#7f9a86" fill-opacity="0.29"/><circle cx="1110.8" cy="17.6" r="0.8" fill="#4b6350" fill-opacity="0.47"/><circle cx="965.9" cy="33.5" r="0.7" fill="#4b6350" fill-opacity="0.34"/><circle cx="149.9" cy="32.3" r="0.8" fill="#7f9a86" fill-opacity="0.36"/><circle cx="1385.6" cy="31.4" r="0.9" fill="#4b6350" fill-opacity="0.27"/><circle cx="1392.2" cy="9.6" r="0.9" fill="#7f9a86" fill-opacity="0.37"/><circle cx="575.8" cy="13.8" r="0.8" fill="#5d7a62" fill-opacity="0.52"/><circle cx="266.9" cy="21.4" r="0.7" fill="#7f9a86" fill-opacity="0.42"/><circle cx="1230.8" cy="32.6" r="0.7" fill="#9ab0a0" fill-opacity="0.38"/><circle cx="1030.3" cy="27.2" r="0.7" fill="#5d7a62" fill-opacity="0.41"/><circle cx="418.3" cy="4.1" r="0.5" fill="#7f9a86" fill-opacity="0.31"/><circle cx="407.3" cy="13.3" r="0.7" fill="#4b6350" fill-opacity="0.37"/><circle cx="901.9" cy="31.6" r="0.6" fill="#9ab0a0" fill-opacity="0.49"/><circle cx="412.1" cy="19.7" r="1.1" fill="#7f9a86" fill-opacity="0.46"/><circle cx="423.5" cy="30.3" r="0.5" fill="#7f9a86" fill-opacity="0.54"/><circle cx="691.9" cy="12.9" r="0.6" fill="#4b6350" fill-opacity="0.36"/><circle cx="1101.9" cy="3.7" r="0.9" fill="#5d7a62" fill-opacity="0.45"/><circle cx="92.6" cy="5.3" r="0.6" fill="#7f9a86" fill-opacity="0.43"/><circle cx="1146.9" cy="26.4" r="0.6" fill="#9ab0a0" fill-opacity="0.27"/><circle cx="981.7" cy="33.2" r="0.7" fill="#5d7a62" fill-opacity="0.31"/><circle cx="325.8" cy="0.9" r="0.8" fill="#5d7a62" fill-opacity="0.45"/><circle cx="937.7" cy="9.3" r="0.5" fill="#5d7a62" fill-opacity="0.48"/><circle cx="372.2" cy="1.1" r="0.6" fill="#4b6350" fill-opacity="0.56"/><circle cx="331.7" cy="29.5" r="0.5" fill="#7f9a86" fill-opacity="0.31"/><circle cx="1098.3" cy="7.5" r="0.4" fill="#5d7a62" fill-opacity="0.20"/><circle cx="489.6" cy="8.8" r="0.8" fill="#4b6350" fill-opacity="0.49"/><circle cx="464.1" cy="29.4" r="0.9" fill="#5d7a62" fill-opacity="0.42"/><circle cx="130.4" cy="18.0" r="0.4" fill="#7f9a86" fill-opacity="0.22"/><circle cx="862.3" cy="21.3" r="1.1" fill="#4b6350" fill-opacity="0.25"/><circle cx="402.8" cy="27.0" r="0.5" fill="#7f9a86" fill-opacity="0.31"/><circle cx="436.9" cy="0.9" r="1.0" fill="#5d7a62" fill-opacity="0.31"/><circle cx="1127.9" cy="9.6" r="0.6" fill="#7f9a86" fill-opacity="0.43"/><circle cx="600.3" cy="28.0" r="1.0" fill="#9ab0a0" fill-opacity="0.54"/><circle cx="269.2" cy="28.0" r="1.0" fill="#5d7a62" fill-opacity="0.26"/><circle cx="1611.8" cy="31.7" r="1.0" fill="#5d7a62" fill-opacity="0.53"/><circle cx="1243.5" cy="2.3" r="0.7" fill="#4b6350" fill-opacity="0.51"/><circle cx="120.9" cy="14.5" r="0.8" fill="#5d7a62" fill-opacity="0.49"/><circle cx="380.8" cy="20.6" r="0.7" fill="#9ab0a0" fill-opacity="0.21"/><circle cx="920.7" cy="30.2" r="0.6" fill="#5d7a62" fill-opacity="0.45"/><circle cx="1058.8" cy="21.8" r="0.4" fill="#7f9a86" fill-opacity="0.22"/><circle cx="1156.3" cy="21.2" r="0.6" fill="#9ab0a0" fill-opacity="0.30"/><circle cx="964.6" cy="13.2" r="1.1" fill="#9ab0a0" fill-opacity="0.55"/><circle cx="1221.3" cy="5.3" r="0.8" fill="#5d7a62" fill-opacity="0.53"/><circle cx="52.3" cy="2.4" r="0.4" fill="#7f9a86" fill-opacity="0.29"/><circle cx="752.1" cy="23.6" r="0.9" fill="#9ab0a0" fill-opacity="0.40"/><circle cx="1065.9" cy="27.4" r="1.1" fill="#4b6350" fill-opacity="0.24"/><circle cx="80.7" cy="4.1" r="1.0" fill="#7f9a86" fill-opacity="0.49"/><circle cx="240.4" cy="31.1" r="1.1" fill="#5d7a62" fill-opacity="0.34"/><circle cx="1028.9" cy="13.1" r="0.9" fill="#9ab0a0" fill-opacity="0.56"/><circle cx="624.7" cy="15.3" r="0.8" fill="#4b6350" fill-opacity="0.57"/><circle cx="1658.3" cy="26.2" r="0.7" fill="#7f9a86" fill-opacity="0.53"/><circle cx="460.7" cy="22.8" r="0.5" fill="#9ab0a0" fill-opacity="0.39"/><circle cx="662.3" cy="20.4" r="0.8" fill="#4b6350" fill-opacity="0.52"/><circle cx="686.0" cy="11.0" r="0.9" fill="#7f9a86" fill-opacity="0.50"/><circle cx="1061.6" cy="16.4" r="0.6" fill="#7f9a86" fill-opacity="0.60"/><circle cx="104.0" cy="16.3" r="0.7" fill="#5d7a62" fill-opacity="0.43"/><circle cx="322.3" cy="18.4" r="0.5" fill="#7f9a86" fill-opacity="0.60"/><circle cx="56.5" cy="7.0" r="1.0" fill="#9ab0a0" fill-opacity="0.26"/><circle cx="424.6" cy="30.8" r="0.7" fill="#9ab0a0" fill-opacity="0.31"/><circle cx="322.2" cy="13.7" r="0.5" fill="#5d7a62" fill-opacity="0.53"/><circle cx="204.9" cy="13.8" r="0.9" fill="#4b6350" fill-opacity="0.30"/><circle cx="826.5" cy="19.3" r="0.5" fill="#9ab0a0" fill-opacity="0.45"/><circle cx="818.6" cy="2.7" r="0.7" fill="#4b6350" fill-opacity="0.40"/><circle cx="1129.5" cy="6.4" r="0.6" fill="#4b6350" fill-opacity="0.45"/><circle cx="463.7" cy="33.1" r="0.8" fill="#9ab0a0" fill-opacity="0.52"/><circle cx="632.0" cy="24.2" r="0.6" fill="#9ab0a0" fill-opacity="0.51"/><circle cx="544.7" cy="4.9" r="1.0" fill="#4b6350" fill-opacity="0.28"/><circle cx="103.5" cy="16.1" r="0.9" fill="#9ab0a0" fill-opacity="0.47"/><circle cx="263.0" cy="9.5" r="0.9" fill="#7f9a86" fill-opacity="0.28"/><circle cx="1289.6" cy="1.8" r="0.5" fill="#7f9a86" fill-opacity="0.43"/><circle cx="1117.1" cy="23.2" r="0.9" fill="#9ab0a0" fill-opacity="0.57"/><circle cx="800.8" cy="10.9" r="0.5" fill="#5d7a62" fill-opacity="0.60"/><circle cx="580.8" cy="20.7" r="0.8" fill="#9ab0a0" fill-opacity="0.29"/><circle cx="362.0" cy="30.6" r="1.0" fill="#9ab0a0" fill-opacity="0.51"/><circle cx="1284.9" cy="19.3" r="1.1" fill="#7f9a86" fill-opacity="0.54"/><circle cx="45.3" cy="16.8" r="1.0" fill="#7f9a86" fill-opacity="0.54"/><circle cx="381.8" cy="0.8" r="0.7" fill="#4b6350" fill-opacity="0.23"/><circle cx="1397.8" cy="4.5" r="0.6" fill="#7f9a86" fill-opacity="0.48"/><circle cx="1084.1" cy="2.1" r="0.7" fill="#5d7a62" fill-opacity="0.49"/><circle cx="1268.5" cy="7.2" r="1.1" fill="#7f9a86" fill-opacity="0.59"/><circle cx="396.6" cy="9.9" r="0.9" fill="#9ab0a0" fill-opacity="0.36"/><circle cx="793.8" cy="16.1" r="0.6" fill="#7f9a86" fill-opacity="0.22"/><circle cx="605.4" cy="12.3" r="0.9" fill="#9ab0a0" fill-opacity="0.49"/><circle cx="162.1" cy="26.1" r="0.4" fill="#9ab0a0" fill-opacity="0.51"/><circle cx="990.4" cy="23.0" r="0.7" fill="#4b6350" fill-opacity="0.34"/><circle cx="329.2" cy="5.0" r="1.0" fill="#7f9a86" fill-opacity="0.31"/><circle cx="722.2" cy="15.6" r="0.7" fill="#7f9a86" fill-opacity="0.27"/><circle cx="400.1" cy="5.1" r="0.8" fill="#4b6350" fill-opacity="0.57"/><circle cx="1671.6" cy="20.1" r="0.6" fill="#9ab0a0" fill-opacity="0.33"/><circle cx="1144.6" cy="24.9" r="0.8" fill="#5d7a62" fill-opacity="0.38"/><circle cx="574.6" cy="22.0" r="0.4" fill="#4b6350" fill-opacity="0.21"/><circle cx="922.9" cy="8.5" r="0.7" fill="#5d7a62" fill-opacity="0.29"/><circle cx="384.3" cy="4.1" r="0.9" fill="#9ab0a0" fill-opacity="0.31"/><circle cx="609.7" cy="21.1" r="0.9" fill="#9ab0a0" fill-opacity="0.35"/><circle cx="628.9" cy="6.1" r="0.7" fill="#4b6350" fill-opacity="0.37"/><circle cx="1009.6" cy="5.1" r="1.0" fill="#9ab0a0" fill-opacity="0.46"/><circle cx="735.9" cy="1.4" r="1.0" fill="#9ab0a0" fill-opacity="0.60"/><circle cx="160.1" cy="12.9" r="0.5" fill="#9ab0a0" fill-opacity="0.31"/><circle cx="266.9" cy="28.9" r="1.0" fill="#5d7a62" fill-opacity="0.31"/><circle cx="818.2" cy="25.2" r="0.8" fill="#4b6350" fill-opacity="0.54"/><circle cx="653.7" cy="28.2" r="0.7" fill="#5d7a62" fill-opacity="0.52"/><circle cx="613.1" cy="30.5" r="0.6" fill="#7f9a86" fill-opacity="0.47"/><circle cx="1324.7" cy="9.2" r="1.0" fill="#5d7a62" fill-opacity="0.38"/><circle cx="103.5" cy="1.7" r="0.6" fill="#9ab0a0" fill-opacity="0.39"/><circle cx="14.9" cy="30.7" r="0.9" fill="#5d7a62" fill-opacity="0.29"/><circle cx="1107.7" cy="2.0" r="0.8" fill="#4b6350" fill-opacity="0.30"/><circle cx="237.1" cy="5.6" r="0.7" fill="#9ab0a0" fill-opacity="0.23"/><circle cx="1074.7" cy="15.1" r="0.9" fill="#9ab0a0" fill-opacity="0.52"/><circle cx="625.4" cy="32.1" r="0.9" fill="#9ab0a0" fill-opacity="0.46"/><circle cx="495.7" cy="30.7" r="0.9" fill="#9ab0a0" fill-opacity="0.53"/><circle cx="703.6" cy="8.6" r="1.1" fill="#7f9a86" fill-opacity="0.45"/><circle cx="574.6" cy="12.5" r="1.0" fill="#5d7a62" fill-opacity="0.25"/><circle cx="857.9" cy="8.2" r="0.4" fill="#5d7a62" fill-opacity="0.22"/><circle cx="28.3" cy="33.4" r="0.6" fill="#9ab0a0" fill-opacity="0.51"/><circle cx="302.5" cy="28.5" r="1.1" fill="#5d7a62" fill-opacity="0.54"/><circle cx="246.1" cy="3.0" r="0.7" fill="#5d7a62" fill-opacity="0.43"/><circle cx="29.8" cy="28.6" r="1.0" fill="#7f9a86" fill-opacity="0.54"/><circle cx="1000.3" cy="0.6" r="1.1" fill="#5d7a62" fill-opacity="0.60"/><circle cx="331.9" cy="0.4" r="1.0" fill="#7f9a86" fill-opacity="0.40"/><circle cx="1237.6" cy="29.7" r="0.8" fill="#5d7a62" fill-opacity="0.26"/><circle cx="98.7" cy="10.2" r="0.6" fill="#7f9a86" fill-opacity="0.46"/><circle cx="604.0" cy="33.4" r="0.7" fill="#4b6350" fill-opacity="0.57"/><circle cx="990.1" cy="10.3" r="0.5" fill="#4b6350" fill-opacity="0.36"/><circle cx="1123.8" cy="33.0" r="0.8" fill="#4b6350" fill-opacity="0.43"/><circle cx="322.7" cy="28.6" r="0.9" fill="#9ab0a0" fill-opacity="0.33"/><circle cx="580.7" cy="15.2" r="0.8" fill="#4b6350" fill-opacity="0.34"/><circle cx="593.6" cy="28.5" r="0.8" fill="#5d7a62" fill-opacity="0.28"/><circle cx="766.2" cy="9.6" r="0.9" fill="#7f9a86" fill-opacity="0.59"/><circle cx="79.0" cy="26.0" r="0.6" fill="#9ab0a0" fill-opacity="0.40"/><circle cx="572.2" cy="3.5" r="0.9" fill="#9ab0a0" fill-opacity="0.35"/><circle cx="620.5" cy="9.5" r="1.0" fill="#7f9a86" fill-opacity="0.36"/><circle cx="1296.1" cy="33.2" r="0.7" fill="#9ab0a0" fill-opacity="0.49"/><circle cx="304.2" cy="10.3" r="0.5" fill="#7f9a86" fill-opacity="0.21"/><circle cx="803.3" cy="15.4" r="0.8" fill="#9ab0a0" fill-opacity="0.26"/><circle cx="129.4" cy="34.0" r="0.4" fill="#7f9a86" fill-opacity="0.35"/><circle cx="939.0" cy="11.3" r="0.8" fill="#4b6350" fill-opacity="0.51"/><circle cx="810.7" cy="27.7" r="0.5" fill="#7f9a86" fill-opacity="0.50"/><circle cx="1332.2" cy="31.2" r="0.9" fill="#5d7a62" fill-opacity="0.34"/><circle cx="254.2" cy="30.7" r="0.7" fill="#4b6350" fill-opacity="0.48"/><circle cx="1300.6" cy="22.2" r="0.9" fill="#5d7a62" fill-opacity="0.27"/><circle cx="941.3" cy="33.0" r="0.6" fill="#9ab0a0" fill-opacity="0.44"/><circle cx="535.3" cy="26.7" r="1.1" fill="#5d7a62" fill-opacity="0.46"/><circle cx="921.0" cy="5.2" r="0.8" fill="#7f9a86" fill-opacity="0.43"/><circle cx="920.9" cy="28.1" r="0.9" fill="#4b6350" fill-opacity="0.26"/><circle cx="600.1" cy="6.9" r="1.0" fill="#5d7a62" fill-opacity="0.54"/><circle cx="1051.3" cy="7.0" r="0.9" fill="#7f9a86" fill-opacity="0.27"/><circle cx="593.7" cy="1.9" r="0.4" fill="#5d7a62" fill-opacity="0.32"/><circle cx="76.4" cy="4.2" r="0.5" fill="#4b6350" fill-opacity="0.53"/><circle cx="741.5" cy="15.6" r="1.1" fill="#5d7a62" fill-opacity="0.21"/><circle cx="1143.0" cy="23.1" r="0.7" fill="#5d7a62" fill-opacity="0.37"/><circle cx="602.3" cy="16.4" r="1.1" fill="#4b6350" fill-opacity="0.47"/><circle cx="744.7" cy="30.5" r="0.5" fill="#7f9a86" fill-opacity="0.53"/><circle cx="1300.1" cy="23.5" r="0.8" fill="#4b6350" fill-opacity="0.42"/><circle cx="763.0" cy="11.2" r="0.7" fill="#5d7a62" fill-opacity="0.27"/><circle cx="1258.2" cy="28.0" r="0.5" fill="#5d7a62" fill-opacity="0.42"/><circle cx="278.2" cy="25.7" r="0.7" fill="#4b6350" fill-opacity="0.55"/><circle cx="190.4" cy="1.8" r="0.7" fill="#4b6350" fill-opacity="0.59"/><circle cx="639.5" cy="9.5" r="0.7" fill="#5d7a62" fill-opacity="0.57"/><circle cx="160.5" cy="4.6" r="0.4" fill="#7f9a86" fill-opacity="0.57"/><circle cx="883.7" cy="21.4" r="0.5" fill="#4b6350" fill-opacity="0.57"/><circle cx="1359.9" cy="18.1" r="0.5" fill="#5d7a62" fill-opacity="0.45"/><circle cx="178.1" cy="24.6" r="1.0" fill="#5d7a62" fill-opacity="0.21"/><circle cx="531.7" cy="31.1" r="0.5" fill="#5d7a62" fill-opacity="0.36"/><circle cx="1.7" cy="21.0" r="0.5" fill="#9ab0a0" fill-opacity="0.22"/><circle cx="269.7" cy="4.9" r="0.6" fill="#7f9a86" fill-opacity="0.21"/><circle cx="1106.1" cy="25.3" r="1.0" fill="#4b6350" fill-opacity="0.40"/><circle cx="628.2" cy="3.6" r="0.8" fill="#7f9a86" fill-opacity="0.36"/><circle cx="789.0" cy="6.0" r="0.9" fill="#5d7a62" fill-opacity="0.34"/><circle cx="220.8" cy="21.2" r="1.0" fill="#5d7a62" fill-opacity="0.58"/><circle cx="886.1" cy="11.0" r="1.0" fill="#9ab0a0" fill-opacity="0.44"/><circle cx="1164.7" cy="18.7" r="0.9" fill="#9ab0a0" fill-opacity="0.57"/><circle cx="1126.7" cy="2.8" r="1.0" fill="#5d7a62" fill-opacity="0.26"/><circle cx="855.7" cy="4.8" r="0.4" fill="#4b6350" fill-opacity="0.24"/><circle cx="975.7" cy="14.3" r="1.1" fill="#5d7a62" fill-opacity="0.23"/><circle cx="719.1" cy="26.8" r="0.6" fill="#9ab0a0" fill-opacity="0.32"/><circle cx="919.0" cy="26.0" r="0.4" fill="#4b6350" fill-opacity="0.40"/><circle cx="100.3" cy="27.6" r="0.8" fill="#9ab0a0" fill-opacity="0.36"/><circle cx="356.8" cy="25.4" r="1.1" fill="#4b6350" fill-opacity="0.35"/><circle cx="486.9" cy="31.6" r="1.0" fill="#7f9a86" fill-opacity="0.21"/><circle cx="1092.2" cy="23.2" r="0.5" fill="#5d7a62" fill-opacity="0.35"/><circle cx="269.7" cy="24.0" r="0.9" fill="#7f9a86" fill-opacity="0.38"/><circle cx="308.1" cy="26.3" r="0.9" fill="#4b6350" fill-opacity="0.34"/><circle cx="598.0" cy="1.2" r="1.0" fill="#4b6350" fill-opacity="0.30"/><circle cx="332.9" cy="9.6" r="0.6" fill="#5d7a62" fill-opacity="0.54"/><circle cx="1268.6" cy="9.2" r="0.5" fill="#7f9a86" fill-opacity="0.22"/><circle cx="1145.1" cy="5.7" r="0.8" fill="#9ab0a0" fill-opacity="0.53"/><circle cx="228.6" cy="25.6" r="0.8" fill="#4b6350" fill-opacity="0.44"/><circle cx="1137.2" cy="4.2" r="0.4" fill="#4b6350" fill-opacity="0.44"/><circle cx="902.1" cy="17.7" r="0.9" fill="#9ab0a0" fill-opacity="0.43"/><circle cx="1317.8" cy="15.2" r="0.7" fill="#7f9a86" fill-opacity="0.29"/><circle cx="1364.9" cy="7.7" r="0.7" fill="#7f9a86" fill-opacity="0.47"/><circle cx="1156.9" cy="20.6" r="0.4" fill="#7f9a86" fill-opacity="0.56"/><circle cx="667.3" cy="12.3" r="0.4" fill="#4b6350" fill-opacity="0.57"/><circle cx="220.8" cy="31.2" r="0.5" fill="#9ab0a0" fill-opacity="0.50"/><circle cx="1383.3" cy="22.1" r="0.7" fill="#9ab0a0" fill-opacity="0.52"/><circle cx="976.1" cy="28.8" r="0.7" fill="#5d7a62" fill-opacity="0.26"/><circle cx="761.3" cy="28.3" r="0.7" fill="#5d7a62" fill-opacity="0.60"/><circle cx="699.6" cy="12.7" r="1.1" fill="#7f9a86" fill-opacity="0.36"/><circle cx="205.4" cy="16.9" r="0.4" fill="#5d7a62" fill-opacity="0.56"/><circle cx="1032.3" cy="5.1" r="0.5" fill="#4b6350" fill-opacity="0.55"/><circle cx="849.5" cy="14.5" r="0.6" fill="#5d7a62" fill-opacity="0.36"/><circle cx="629.8" cy="28.5" r="0.9" fill="#4b6350" fill-opacity="0.34"/><circle cx="1286.1" cy="22.8" r="0.6" fill="#5d7a62" fill-opacity="0.58"/><circle cx="89.3" cy="12.4" r="0.9" fill="#7f9a86" fill-opacity="0.60"/><circle cx="353.2" cy="9.1" r="0.5" fill="#7f9a86" fill-opacity="0.46"/><circle cx="1041.7" cy="25.3" r="0.8" fill="#7f9a86" fill-opacity="0.42"/><circle cx="859.4" cy="21.5" r="0.5" fill="#7f9a86" fill-opacity="0.41"/><circle cx="128.5" cy="1.2" r="1.0" fill="#4b6350" fill-opacity="0.53"/><circle cx="550.2" cy="4.1" r="0.7" fill="#4b6350" fill-opacity="0.49"/><circle cx="192.7" cy="6.8" r="0.7" fill="#7f9a86" fill-opacity="0.34"/><circle cx="238.2" cy="14.8" r="0.9" fill="#5d7a62" fill-opacity="0.31"/><circle cx="313.2" cy="23.0" r="0.4" fill="#5d7a62" fill-opacity="0.33"/><circle cx="1298.7" cy="26.2" r="1.0" fill="#9ab0a0" fill-opacity="0.50"/><circle cx="729.4" cy="2.9" r="0.9" fill="#9ab0a0" fill-opacity="0.54"/><circle cx="252.1" cy="31.1" r="1.1" fill="#9ab0a0" fill-opacity="0.46"/><circle cx="508.2" cy="18.1" r="0.7" fill="#4b6350" fill-opacity="0.30"/><circle cx="272.3" cy="10.5" r="0.9" fill="#7f9a86" fill-opacity="0.25"/><circle cx="419.1" cy="10.5" r="0.9" fill="#4b6350" fill-opacity="0.33"/><circle cx="992.0" cy="5.4" r="0.8" fill="#7f9a86" fill-opacity="0.43"/><circle cx="790.3" cy="26.8" r="0.5" fill="#5d7a62" fill-opacity="0.35"/><circle cx="198.0" cy="26.5" r="0.4" fill="#7f9a86" fill-opacity="0.36"/><circle cx="29.9" cy="25.6" r="0.6" fill="#5d7a62" fill-opacity="0.38"/><circle cx="582.2" cy="14.1" r="0.8" fill="#4b6350" fill-opacity="0.58"/><circle cx="388.7" cy="11.6" r="0.7" fill="#5d7a62" fill-opacity="0.29"/><circle cx="442.2" cy="24.5" r="0.7" fill="#9ab0a0" fill-opacity="0.59"/><circle cx="624.1" cy="7.6" r="0.9" fill="#9ab0a0" fill-opacity="0.43"/><circle cx="76.2" cy="21.7" r="0.8" fill="#4b6350" fill-opacity="0.57"/><circle cx="618.1" cy="7.1" r="0.8" fill="#7f9a86" fill-opacity="0.59"/><circle cx="323.2" cy="5.5" r="0.6" fill="#5d7a62" fill-opacity="0.25"/><circle cx="812.2" cy="16.5" r="0.4" fill="#5d7a62" fill-opacity="0.40"/><circle cx="960.3" cy="23.8" r="1.0" fill="#7f9a86" fill-opacity="0.57"/><circle cx="594.2" cy="13.8" r="0.8" fill="#4b6350" fill-opacity="0.24"/><circle cx="453.4" cy="20.1" r="1.0" fill="#5d7a62" fill-opacity="0.29"/><circle cx="121.9" cy="7.2" r="0.5" fill="#4b6350" fill-opacity="0.58"/><circle cx="40.0" cy="13.9" r="0.8" fill="#4b6350" fill-opacity="0.45"/><circle cx="359.1" cy="22.8" r="1.0" fill="#5d7a62" fill-opacity="0.46"/><circle cx="512.5" cy="17.4" r="0.8" fill="#9ab0a0" fill-opacity="0.28"/><circle cx="372.8" cy="8.6" r="0.9" fill="#4b6350" fill-opacity="0.29"/><circle cx="673.9" cy="21.9" r="1.0" fill="#7f9a86" fill-opacity="0.29"/><circle cx="943.3" cy="7.8" r="1.1" fill="#9ab0a0" fill-opacity="0.43"/><circle cx="888.7" cy="32.7" r="1.0" fill="#5d7a62" fill-opacity="0.37"/><circle cx="905.6" cy="24.9" r="0.4" fill="#5d7a62" fill-opacity="0.22"/><circle cx="51.1" cy="10.2" r="0.6" fill="#4b6350" fill-opacity="0.35"/><circle cx="1230.5" cy="31.8" r="0.6" fill="#4b6350" fill-opacity="0.23"/><circle cx="468.2" cy="9.0" r="0.6" fill="#5d7a62" fill-opacity="0.43"/><circle cx="1039.2" cy="26.2" r="0.4" fill="#7f9a86" fill-opacity="0.53"/><circle cx="1296.9" cy="2.0" r="0.8" fill="#7f9a86" fill-opacity="0.38"/><circle cx="1394.1" cy="3.6" r="0.5" fill="#4b6350" fill-opacity="0.54"/><circle cx="125.3" cy="2.4" r="0.7" fill="#9ab0a0" fill-opacity="0.59"/><circle cx="366.5" cy="0.6" r="0.5" fill="#7f9a86" fill-opacity="0.32"/><circle cx="727.2" cy="4.5" r="1.0" fill="#5d7a62" fill-opacity="0.40"/><circle cx="1374.1" cy="11.1" r="1.1" fill="#9ab0a0" fill-opacity="0.54"/><circle cx="1369.8" cy="7.7" r="0.7" fill="#4b6350" fill-opacity="0.26"/><circle cx="174.9" cy="29.6" r="0.5" fill="#7f9a86" fill-opacity="0.54"/><circle cx="362.1" cy="29.3" r="0.9" fill="#4b6350" fill-opacity="0.29"/><circle cx="1321.0" cy="14.5" r="0.7" fill="#4b6350" fill-opacity="0.40"/><circle cx="157.4" cy="20.2" r="0.7" fill="#9ab0a0" fill-opacity="0.53"/><circle cx="1032.9" cy="30.1" r="0.8" fill="#9ab0a0" fill-opacity="0.47"/><circle cx="440.4" cy="2.4" r="0.8" fill="#4b6350" fill-opacity="0.24"/><circle cx="1074.4" cy="27.9" r="0.8" fill="#7f9a86" fill-opacity="0.37"/><circle cx="460.6" cy="17.4" r="1.1" fill="#9ab0a0" fill-opacity="0.48"/><circle cx="1017.2" cy="4.5" r="1.0" fill="#4b6350" fill-opacity="0.45"/><circle cx="1616.1" cy="20.0" r="1.0" fill="#4b6350" fill-opacity="0.43"/><circle cx="465.0" cy="12.2" r="0.9" fill="#7f9a86" fill-opacity="0.43"/><circle cx="54.4" cy="12.2" r="0.6" fill="#9ab0a0" fill-opacity="0.43"/><circle cx="507.6" cy="23.6" r="0.7" fill="#4b6350" fill-opacity="0.31"/><circle cx="370.9" cy="29.5" r="1.0" fill="#4b6350" fill-opacity="0.43"/><circle cx="1101.9" cy="9.5" r="0.8" fill="#7f9a86" fill-opacity="0.30"/><circle cx="1124.4" cy="12.7" r="1.0" fill="#5d7a62" fill-opacity="0.40"/><circle cx="46.5" cy="21.1" r="0.6" fill="#5d7a62" fill-opacity="0.29"/><circle cx="257.4" cy="11.5" r="0.6" fill="#7f9a86" fill-opacity="0.48"/><circle cx="623.7" cy="2.0" r="0.6" fill="#9ab0a0" fill-opacity="0.50"/><circle cx="553.1" cy="18.3" r="0.8" fill="#5d7a62" fill-opacity="0.43"/><circle cx="368.0" cy="12.2" r="0.9" fill="#9ab0a0" fill-opacity="0.22"/><circle cx="1278.8" cy="9.9" r="0.6" fill="#5d7a62" fill-opacity="0.21"/><circle cx="266.4" cy="7.6" r="0.7" fill="#7f9a86" fill-opacity="0.53"/><circle cx="657.2" cy="23.9" r="1.0" fill="#5d7a62" fill-opacity="0.35"/><circle cx="1080.0" cy="21.1" r="0.8" fill="#5d7a62" fill-opacity="0.41"/><circle cx="1007.5" cy="18.4" r="0.6" fill="#9ab0a0" fill-opacity="0.26"/><circle cx="760.9" cy="10.6" r="1.1" fill="#4b6350" fill-opacity="0.51"/><circle cx="563.1" cy="23.7" r="0.9" fill="#4b6350" fill-opacity="0.21"/><circle cx="1088.7" cy="2.6" r="1.0" fill="#4b6350" fill-opacity="0.29"/><circle cx="1421.3" cy="6.6" r="0.6" fill="#4b6350" fill-opacity="0.35"/><circle cx="278.4" cy="26.5" r="0.4" fill="#7f9a86" fill-opacity="0.58"/><circle cx="313.4" cy="30.1" r="0.5" fill="#7f9a86" fill-opacity="0.43"/><circle cx="581.8" cy="0.1" r="0.7" fill="#9ab0a0" fill-opacity="0.50"/><circle cx="174.3" cy="30.3" r="0.5" fill="#9ab0a0" fill-opacity="0.20"/><circle cx="535.2" cy="10.9" r="0.5" fill="#7f9a86" fill-opacity="0.34"/><circle cx="395.7" cy="8.3" r="0.7" fill="#9ab0a0" fill-opacity="0.25"/><circle cx="878.5" cy="21.4" r="1.0" fill="#9ab0a0" fill-opacity="0.47"/><circle cx="835.5" cy="2.3" r="0.9" fill="#7f9a86" fill-opacity="0.22"/><circle cx="290.1" cy="31.8" r="0.9" fill="#7f9a86" fill-opacity="0.45"/><circle cx="65.2" cy="25.6" r="0.6" fill="#7f9a86" fill-opacity="0.55"/><circle cx="1312.2" cy="17.4" r="1.0" fill="#7f9a86" fill-opacity="0.34"/><circle cx="146.4" cy="10.3" r="0.6" fill="#5d7a62" fill-opacity="0.29"/><circle cx="1341.7" cy="19.2" r="0.7" fill="#7f9a86" fill-opacity="0.22"/><circle cx="1182.4" cy="5.0" r="0.8" fill="#9ab0a0" fill-opacity="0.29"/><circle cx="65.6" cy="16.3" r="0.5" fill="#4b6350" fill-opacity="0.58"/></svg>
<div class="a" style="left:0.00px;top:836.80px;width:854.00px;height:0.80px;background:#08090a"></div>
<div class="a" style="left:0.00px;top:837.00px;width:857.00px;height:2.80px;background:#1a1d22"></div>
<div class="a" style="left:854.00px;top:463.00px;width:3.00px;height:377.00px;background:#1a1d22"></div>
<div class="a" style="left:857.00px;top:837.00px;width:855.00px;height:2.80px;background:#33222e"></div>
<div class="a" style="left:11.05px;top:847.75px;width:5.30px;height:5.30px;background:#fff;border-radius:50%"></div>
<div class="a" style="left:18.50px;top:847.75px;width:5.30px;height:5.30px;background:#fff;border-radius:50%"></div>
<div class="a" style="left:25.95px;top:847.75px;width:5.30px;height:5.30px;background:#fff;border-radius:50%"></div>
<div class="a" style="left:11.05px;top:855.30px;width:5.30px;height:5.30px;background:#fff;border-radius:50%"></div>
<div class="a" style="left:18.50px;top:855.30px;width:5.30px;height:5.30px;background:#fff;border-radius:50%"></div>
<div class="a" style="left:25.95px;top:855.30px;width:5.30px;height:5.30px;background:#fff;border-radius:50%"></div>
<div class="a" style="left:11.05px;top:862.85px;width:5.30px;height:5.30px;background:#fff;border-radius:50%"></div>
<div class="a" style="left:18.50px;top:862.85px;width:5.30px;height:5.30px;background:#fff;border-radius:50%"></div>
<div class="a" style="left:25.95px;top:862.85px;width:5.30px;height:5.30px;background:#fff;border-radius:50%"></div>
<svg class="a" style="left:64.80px;top:847.80px;" width="20.20" height="20.20" viewBox="0 0 20.20 20.20"><rect width="20.2" height="20.2" rx="1.82" fill="#3a3d40"/><path d="M9.03,4.55 L9.30,2.97 L10.90,2.97 L11.17,4.55 L11.54,4.63 L12.47,3.33 L13.92,4.03 L13.48,5.56 L13.77,5.80 L15.17,5.03 L16.17,6.28 L15.11,7.48 L15.28,7.82 L16.87,7.73 L17.23,9.30 L15.75,9.91 L15.75,10.29 L17.23,10.90 L16.87,12.47 L15.28,12.38 L15.11,12.72 L16.17,13.92 L15.17,15.17 L13.77,14.40 L13.48,14.64 L13.92,16.17 L12.47,16.87 L11.54,15.57 L11.17,15.65 L10.90,17.23 L9.30,17.23 L9.03,15.65 L8.66,15.57 L7.73,16.87 L6.28,16.17 L6.72,14.64 L6.43,14.40 L5.03,15.17 L4.03,13.92 L5.09,12.72 L4.92,12.38 L3.33,12.47 L2.97,10.90 L4.45,10.29 L4.45,9.91 L2.97,9.30 L3.33,7.73 L4.92,7.82 L5.09,7.48 L4.03,6.28 L5.03,5.03 L6.43,5.80 L6.72,5.56 L6.28,4.03 L7.73,3.33 L8.66,4.63Z" fill="#e8ece8"/><circle cx="10.1" cy="10.1" r="3.03" fill="#f8faf8"/><circle cx="10.1" cy="10.1" r="2.22" fill="#3a3d40"/></svg>
<div class="t" style="left:95.50px;top:853.28px;font-size:12.9px;color:#fff;font-weight:normal;letter-spacing:-0.1px">System Setting</div>
<svg class="a" style="left:269.20px;top:849.50px;" width="18.20" height="16.70" viewBox="0 0 18.20 16.70"><rect x="0" y="0.5" width="8" height="4" rx="1" fill="#3f78c8"/><rect x="0" y="2" width="18.2" height="14.7" rx="1" fill="#4a8fe0"/><rect x="1.5" y="3.6" width="15.2" height="2" fill="#e6e6e6"/></svg>
<div class="t" style="left:298.60px;top:853.45px;font-size:12.35px;color:#fff;font-weight:normal;letter-spacing:-0.1px">File Manager</div>
<svg class="a" style="left:470.80px;top:849.50px;" width="18.20" height="16.70" viewBox="0 0 18.20 16.70"><rect x="0" y="0.5" width="8" height="4" rx="1" fill="#3f78c8"/><rect x="0" y="2" width="18.2" height="14.7" rx="1" fill="#4a8fe0"/><rect x="1.5" y="3.6" width="15.2" height="2" fill="#e6e6e6"/></svg>
<div class="t" style="left:501.20px;top:853.45px;font-size:12.35px;color:#fff;font-weight:normal;letter-spacing:-0.1px">File Manager</div>
</body></html>
